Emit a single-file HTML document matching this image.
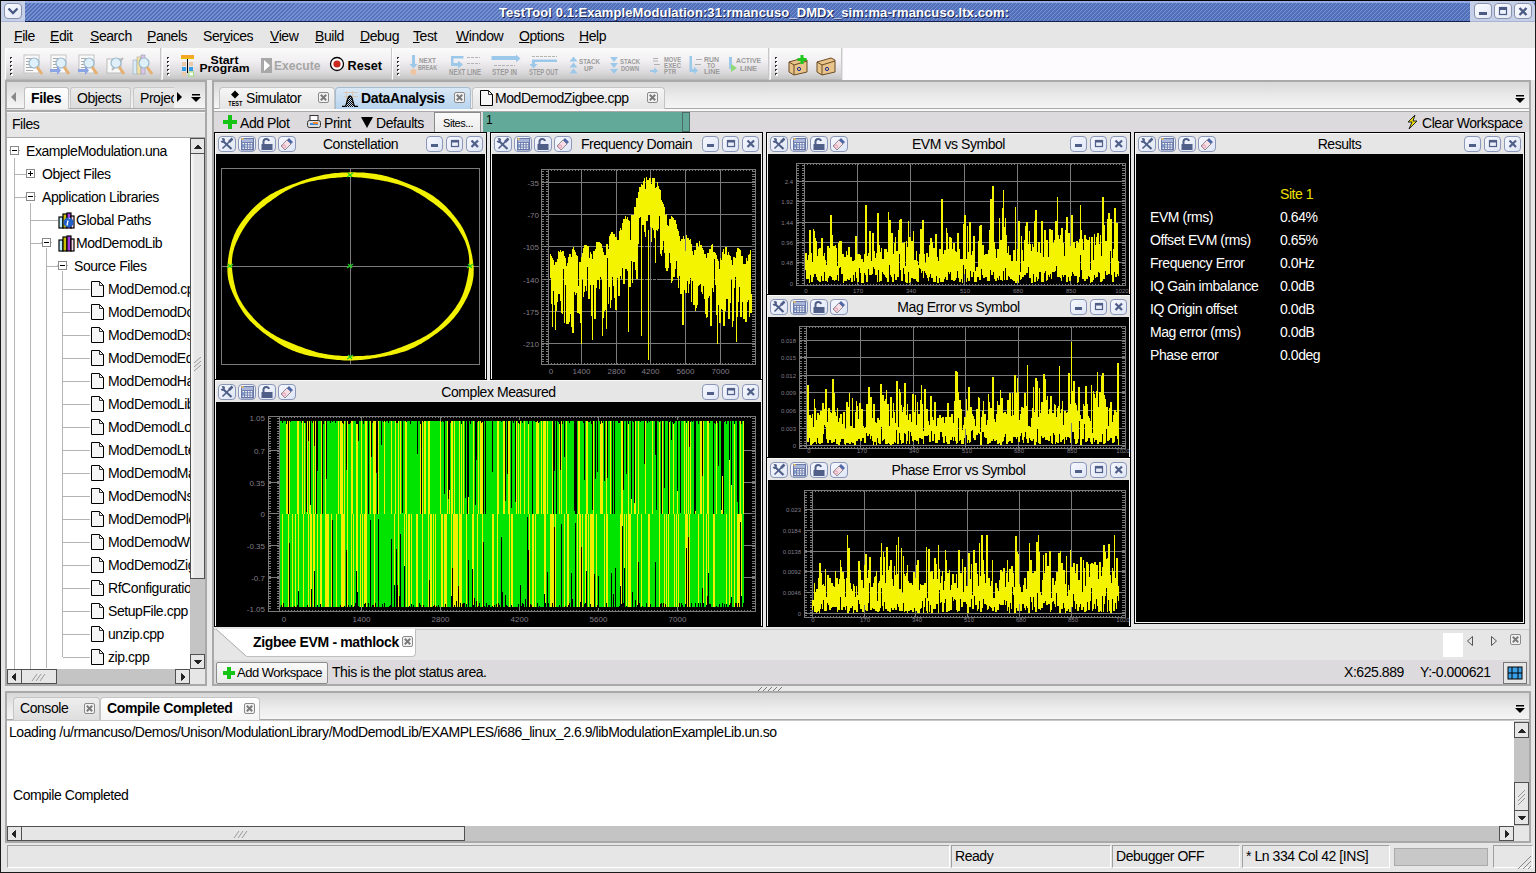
<!DOCTYPE html><html><head><meta charset="utf-8"><style>
*{margin:0;padding:0;box-sizing:border-box}
html,body{width:1536px;height:873px;overflow:hidden;background:#e6e6e6;font-family:"Liberation Sans", sans-serif;color:#000}
.a{position:absolute}
.t{position:absolute;white-space:nowrap;line-height:16px;font-size:14px;letter-spacing:-0.44px}
u{text-decoration:underline}
</style></head><body>
<div style="position:absolute;left:0px;top:0px;width:1536px;height:873px;border:1px solid #1a1a1a;border-top:1px solid #000;"></div>
<div style="position:absolute;left:1px;top:1px;width:1534px;height:21px;background:repeating-linear-gradient(135deg,#5673be 0px,#5673be 1.3px,#4c69b4 1.3px,#4c69b4 1.9px,#7690d2 1.9px,#7690d2 2.83px);border-top:2px solid #93abe3;border-bottom:1px solid #14214d;"></div>
<div style="position:absolute;left:1px;top:1px;width:24px;height:21px;background:#c6cfe8;border-bottom:1px solid #a9b4d4;"></div>
<div style="position:absolute;left:4px;top:3px;width:18px;height:16px;background:linear-gradient(135deg,#fafbff,#e4e9f8);border:1px solid #8991ab;border-radius:4px;"><svg width="16" height="14" style="position:absolute;left:0;top:0"><path d="M3.5 4.5 L8 9 L12.5 4.5" stroke="#4b5a84" stroke-width="2.4" fill="none"/></svg></div>
<div class="t" style="left:0px;top:5px;font-size:13px;width:1508px;text-align:center;color:#fff;font-weight:bold;font-size:13px;letter-spacing:0.1px;text-shadow:1px 1px 0 #1a2550;">TestTool 0.1:ExampleModulation:31:rmancuso_DMDx_sim:ma-rmancuso.ltx.com:</div>
<div style="position:absolute;left:1470px;top:1px;width:65px;height:21px;background:#c6cfe8;border-bottom:1px solid #a9b4d4;border-radius:0 6px 0 0;"></div>
<div style="position:absolute;left:1474px;top:3px;width:18px;height:16px;background:linear-gradient(135deg,#fafbff,#e4e9f8);border:1px solid #8991ab;border-radius:4px;"><svg width="16" height="14" style="position:absolute;left:0;top:0"><rect x="4" y="8" width="8" height="3" fill="#4b5a84"/></svg></div>
<div style="position:absolute;left:1494px;top:3px;width:18px;height:16px;background:linear-gradient(135deg,#fafbff,#e4e9f8);border:1px solid #8991ab;border-radius:4px;"><svg width="16" height="14" style="position:absolute;left:0;top:0"><rect x="4.5" y="3.5" width="7" height="7" fill="none" stroke="#4b5a84" stroke-width="1.2"/><rect x="4" y="3" width="8" height="3" fill="#4b5a84"/></svg></div>
<div style="position:absolute;left:1514px;top:3px;width:18px;height:16px;background:linear-gradient(135deg,#fafbff,#e4e9f8);border:1px solid #8991ab;border-radius:4px;"><svg width="16" height="14" style="position:absolute;left:0;top:0"><path d="M4.5 4 L11.5 11 M11.5 4 L4.5 11" stroke="#4b5a84" stroke-width="2.4"/></svg></div>
<div class="t" style="left:14px;top:28px;font-size:14px;letter-spacing:-0.44px;"><u>F</u>ile</div>
<div class="t" style="left:50px;top:28px;font-size:14px;letter-spacing:-0.44px;"><u>E</u>dit</div>
<div class="t" style="left:90px;top:28px;font-size:14px;letter-spacing:-0.44px;"><u>S</u>earch</div>
<div class="t" style="left:147px;top:28px;font-size:14px;letter-spacing:-0.44px;"><u>P</u>anels</div>
<div class="t" style="left:203px;top:28px;font-size:14px;letter-spacing:-0.44px;">Ser<u>v</u>ices</div>
<div class="t" style="left:270px;top:28px;font-size:14px;letter-spacing:-0.44px;"><u>V</u>iew</div>
<div class="t" style="left:315px;top:28px;font-size:14px;letter-spacing:-0.44px;"><u>B</u>uild</div>
<div class="t" style="left:360px;top:28px;font-size:14px;letter-spacing:-0.44px;"><u>D</u>ebug</div>
<div class="t" style="left:413px;top:28px;font-size:14px;letter-spacing:-0.44px;"><u>T</u>est</div>
<div class="t" style="left:456px;top:28px;font-size:14px;letter-spacing:-0.44px;"><u>W</u>indow</div>
<div class="t" style="left:519px;top:28px;font-size:14px;letter-spacing:-0.44px;"><u>O</u>ptions</div>
<div class="t" style="left:579px;top:28px;font-size:14px;letter-spacing:-0.44px;"><u>H</u>elp</div>
<div style="position:absolute;left:5px;top:48px;width:156px;height:32px;background:linear-gradient(#fbfbfb 0%,#f2f0f2 40%,#dad8da 80%,#c6c6c6 100%);border-left:1px solid #fff;border-right:1px solid #c8c8c8;border-bottom:1px solid #b8b8b8;"></div>
<div style="position:absolute;left:10px;top:57px;width:2px;height:2px;background:#333;"></div><div style="position:absolute;left:11px;top:58px;width:2px;height:2px;background:#fff;"></div><div style="position:absolute;left:10px;top:61px;width:2px;height:2px;background:#333;"></div><div style="position:absolute;left:11px;top:62px;width:2px;height:2px;background:#fff;"></div><div style="position:absolute;left:10px;top:65px;width:2px;height:2px;background:#333;"></div><div style="position:absolute;left:11px;top:66px;width:2px;height:2px;background:#fff;"></div><div style="position:absolute;left:10px;top:69px;width:2px;height:2px;background:#333;"></div><div style="position:absolute;left:11px;top:70px;width:2px;height:2px;background:#fff;"></div><div style="position:absolute;left:10px;top:73px;width:2px;height:2px;background:#333;"></div><div style="position:absolute;left:11px;top:74px;width:2px;height:2px;background:#fff;"></div>
<div style="position:absolute;left:162px;top:48px;width:230px;height:32px;background:linear-gradient(#fbfbfb 0%,#f2f0f2 40%,#dad8da 80%,#c6c6c6 100%);border-left:1px solid #fff;border-right:1px solid #c8c8c8;border-bottom:1px solid #b8b8b8;"></div>
<div style="position:absolute;left:167px;top:57px;width:2px;height:2px;background:#333;"></div><div style="position:absolute;left:168px;top:58px;width:2px;height:2px;background:#fff;"></div><div style="position:absolute;left:167px;top:61px;width:2px;height:2px;background:#333;"></div><div style="position:absolute;left:168px;top:62px;width:2px;height:2px;background:#fff;"></div><div style="position:absolute;left:167px;top:65px;width:2px;height:2px;background:#333;"></div><div style="position:absolute;left:168px;top:66px;width:2px;height:2px;background:#fff;"></div><div style="position:absolute;left:167px;top:69px;width:2px;height:2px;background:#333;"></div><div style="position:absolute;left:168px;top:70px;width:2px;height:2px;background:#fff;"></div><div style="position:absolute;left:167px;top:73px;width:2px;height:2px;background:#333;"></div><div style="position:absolute;left:168px;top:74px;width:2px;height:2px;background:#fff;"></div>
<div style="position:absolute;left:392px;top:48px;width:377px;height:32px;background:linear-gradient(#fbfbfb 0%,#f2f0f2 40%,#dad8da 80%,#c6c6c6 100%);border-left:1px solid #fff;border-right:1px solid #c8c8c8;border-bottom:1px solid #b8b8b8;"></div>
<div style="position:absolute;left:397px;top:57px;width:2px;height:2px;background:#333;"></div><div style="position:absolute;left:398px;top:58px;width:2px;height:2px;background:#fff;"></div><div style="position:absolute;left:397px;top:61px;width:2px;height:2px;background:#333;"></div><div style="position:absolute;left:398px;top:62px;width:2px;height:2px;background:#fff;"></div><div style="position:absolute;left:397px;top:65px;width:2px;height:2px;background:#333;"></div><div style="position:absolute;left:398px;top:66px;width:2px;height:2px;background:#fff;"></div><div style="position:absolute;left:397px;top:69px;width:2px;height:2px;background:#333;"></div><div style="position:absolute;left:398px;top:70px;width:2px;height:2px;background:#fff;"></div><div style="position:absolute;left:397px;top:73px;width:2px;height:2px;background:#333;"></div><div style="position:absolute;left:398px;top:74px;width:2px;height:2px;background:#fff;"></div>
<div style="position:absolute;left:770px;top:48px;width:72px;height:32px;background:linear-gradient(#fbfbfb 0%,#f2f0f2 40%,#dad8da 80%,#c6c6c6 100%);border-left:1px solid #fff;border-right:1px solid #c8c8c8;border-bottom:1px solid #b8b8b8;"></div>
<div style="position:absolute;left:775px;top:57px;width:2px;height:2px;background:#333;"></div><div style="position:absolute;left:776px;top:58px;width:2px;height:2px;background:#fff;"></div><div style="position:absolute;left:775px;top:61px;width:2px;height:2px;background:#333;"></div><div style="position:absolute;left:776px;top:62px;width:2px;height:2px;background:#fff;"></div><div style="position:absolute;left:775px;top:65px;width:2px;height:2px;background:#333;"></div><div style="position:absolute;left:776px;top:66px;width:2px;height:2px;background:#fff;"></div><div style="position:absolute;left:775px;top:69px;width:2px;height:2px;background:#333;"></div><div style="position:absolute;left:776px;top:70px;width:2px;height:2px;background:#fff;"></div><div style="position:absolute;left:775px;top:73px;width:2px;height:2px;background:#333;"></div><div style="position:absolute;left:776px;top:74px;width:2px;height:2px;background:#fff;"></div>
<div style="position:absolute;left:843px;top:48px;width:692px;height:32px;background:#fdfbfd;"></div>
<svg class="a" style="left:22px;top:54px" width="22" height="22"><rect x="2" y="1" width="15" height="18" fill="#fafafa" stroke="#c4c4c4"/><rect x="4" y="4" width="7" height="1" fill="#aaa"/><rect x="4" y="7" width="7" height="1" fill="#aaa"/><rect x="4" y="10" width="7" height="1" fill="#aaa"/><rect x="4" y="13" width="7" height="1" fill="#aaa"/><rect x="4" y="16" width="7" height="1" fill="#aaa"/><circle cx="12" cy="9" r="5" fill="#dff0fa" stroke="#9ab8cc" stroke-width="1.2"/><path d="M15 13 L20 20" stroke="#e5b070" stroke-width="3"/></svg>
<svg class="a" style="left:49px;top:54px" width="22" height="22"><rect x="2" y="1" width="15" height="18" fill="#fafafa" stroke="#c4c4c4"/><rect x="4" y="4" width="7" height="1" fill="#aaa"/><rect x="4" y="7" width="7" height="1" fill="#aaa"/><rect x="4" y="10" width="7" height="1" fill="#aaa"/><rect x="4" y="13" width="7" height="1" fill="#aaa"/><rect x="4" y="16" width="7" height="1" fill="#aaa"/><circle cx="12" cy="9" r="5" fill="#dff0fa" stroke="#9ab8cc" stroke-width="1.2"/><path d="M15 13 L20 20" stroke="#e5b070" stroke-width="3"/><path d="M1 15 H8 V12 L12 16.5 L8 21 V18 H1 Z" fill="#8aa4e4"/></svg>
<svg class="a" style="left:77px;top:54px" width="22" height="22"><rect x="2" y="1" width="15" height="18" fill="#fafafa" stroke="#c4c4c4"/><rect x="4" y="4" width="7" height="1" fill="#aaa"/><rect x="4" y="7" width="7" height="1" fill="#aaa"/><rect x="4" y="10" width="7" height="1" fill="#aaa"/><rect x="4" y="13" width="7" height="1" fill="#aaa"/><rect x="4" y="16" width="7" height="1" fill="#aaa"/><circle cx="12" cy="9" r="5" fill="#dff0fa" stroke="#9ab8cc" stroke-width="1.2"/><path d="M15 13 L20 20" stroke="#e5b070" stroke-width="3"/><path d="M1 15 H8 V12 L12 16.5 L8 21 V18 H1 Z" fill="#8aa4e4"/></svg>
<svg class="a" style="left:104px;top:54px" width="22" height="22"><rect x="3" y="5" width="14" height="14" fill="#f8f8f8" stroke="#bbb"/><path d="M8 16 L19 4" stroke="#bbb" stroke-width="2"/><circle cx="12" cy="9" r="5" fill="#dff0fa" stroke="#9ab8cc" stroke-width="1.2"/><path d="M15 13 L20 20" stroke="#e5b070" stroke-width="3"/></svg>
<svg class="a" style="left:132px;top:54px" width="22" height="22"><rect x="1" y="6" width="4" height="14" fill="#d8eaf6" stroke="#9ab" stroke-width=".6"/><rect x="5" y="3" width="4" height="17" fill="#f3e2a6" stroke="#aa9" stroke-width=".6"/><rect x="9" y="1" width="4" height="19" fill="#d9c6ea" stroke="#99a" stroke-width=".6"/><circle cx="12" cy="9" r="5" fill="#dff0fa" stroke="#9ab8cc" stroke-width="1.2"/><path d="M15 13 L20 20" stroke="#e5b070" stroke-width="3"/></svg>
<svg class="a" style="left:181px;top:55px" width="16" height="22"><rect x="0" y="0" width="13" height="3" fill="#f5a623"/><rect x="0" y="3" width="13" height="1" fill="#e2c200"/><rect x="6" y="4" width="1" height="14" fill="#000"/><rect x="1" y="7" width="4" height="4" fill="#e9c9a8"/><rect x="8" y="7" width="4" height="4" fill="#e9c9a8"/><rect x="1" y="12" width="4" height="4" fill="#3aa0e6"/><rect x="8" y="12" width="4" height="4" fill="#3aa0e6"/><rect x="1" y="17" width="4" height="4" fill="#e9c9a8"/><rect x="8" y="17" width="4.5" height="4" fill="#fff" stroke="#9be07a"/></svg>
<svg class="a" style="left:0;top:0;overflow:visible" width="1" height="1"><text x="210.5" y="63.5" font-size="11.5" font-weight="bold" fill="#000" font-family="Liberation Sans" textLength="28.0" lengthAdjust="spacingAndGlyphs">Start</text></svg>
<svg class="a" style="left:0;top:0;overflow:visible" width="1" height="1"><text x="199.5" y="71.5" font-size="11.5" font-weight="bold" fill="#000" font-family="Liberation Sans" textLength="50.0" lengthAdjust="spacingAndGlyphs">Program</text></svg>
<svg class="a" style="left:261px;top:58px" width="11" height="15"><rect width="11" height="15" fill="#a8a8a8"/><path d="M3 2 L9 7.5 L3 13 Z" fill="#fff"/></svg>
<svg class="a" style="left:0;top:0;overflow:visible" width="1" height="1"><text x="274" y="70" font-size="13" font-weight="bold" fill="#a6a6a6" font-family="Liberation Sans" textLength="46.5" lengthAdjust="spacingAndGlyphs">Execute</text></svg>
<svg class="a" style="left:329px;top:56px" width="16" height="16"><circle cx="8" cy="8" r="6.5" fill="#fff" stroke="#000" stroke-width="1.3"/><circle cx="8" cy="8" r="3.6" fill="#c8281e"/></svg>
<svg class="a" style="left:0;top:0;overflow:visible" width="1" height="1"><text x="347.5" y="70" font-size="13" font-weight="bold" fill="#000" font-family="Liberation Sans" textLength="34.5" lengthAdjust="spacingAndGlyphs">Reset</text></svg>
<svg class="a" style="left:400px;top:48px" width="370" height="32" viewBox="400 48 370 32"><rect x="412" y="55" width="3" height="10" fill="#9cc8ea"/><path d="M409.5 64 H417.5 L413.5 68.5 Z" fill="#9cc8ea"/><circle cx="413.5" cy="72" r="3" fill="#eec4a4"/><text x="419" y="63" font-size="6.8" font-weight="bold" fill="#9a9a9a" font-family="Liberation Sans" textLength="17" lengthAdjust="spacingAndGlyphs">NEXT</text><text x="418" y="70" font-size="6.8" font-weight="bold" fill="#9a9a9a" font-family="Liberation Sans" textLength="19" lengthAdjust="spacingAndGlyphs">BREAK</text><path d="M451 56 H463.5 V58.5 H453.5 V63 H458 V60.5 L463 64.5 L458 68.5 V66 H451 Z" fill="#9cc8ea"/><path d="M467 57.5 H480 M467 63.5 H480" stroke="#b4b4b4" stroke-width="1" stroke-dasharray="3 1"/><text x="449" y="75" font-size="8.2" font-weight="bold" fill="#9a9a9a" font-family="Liberation Sans" textLength="32" lengthAdjust="spacingAndGlyphs">NEXT LINE</text><path d="M491.5 56 H516 V54.5 L520.5 58.5 L516 62.5 V60 H491.5 Z" fill="#9cc8ea"/><path d="M494 65.5 H515" stroke="#b4b4b4" stroke-width="1" stroke-dasharray="3 1"/><text x="492" y="75" font-size="8.2" font-weight="bold" fill="#9a9a9a" font-family="Liberation Sans" textLength="25" lengthAdjust="spacingAndGlyphs">STEP IN</text><path d="M532 56.5 H557" stroke="#b4b4b4" stroke-width="1" stroke-dasharray="3 1"/><path d="M557 59.5 V62 H535 V64 H537.5 L533.5 68.5 L529.5 64 H532 V59.5 Z" fill="#9cc8ea"/><text x="529" y="75" font-size="8.2" font-weight="bold" fill="#9a9a9a" font-family="Liberation Sans" textLength="29" lengthAdjust="spacingAndGlyphs">STEP OUT</text><path d="M569.5 61.5 L573.5 56.5 L577.5 61.5 Z" fill="#9cc8ea"/><path d="M569.5 67.5 L573.5 62.5 L577.5 67.5 Z" fill="#9cc8ea"/><path d="M569.5 73.5 L573.5 68.5 L577.5 73.5 Z" fill="#9cc8ea"/><text x="579" y="64" font-size="6.8" font-weight="bold" fill="#9a9a9a" font-family="Liberation Sans" textLength="21" lengthAdjust="spacingAndGlyphs">STACK</text><text x="584" y="71" font-size="6.8" font-weight="bold" fill="#9a9a9a" font-family="Liberation Sans" textLength="9" lengthAdjust="spacingAndGlyphs">UP</text><path d="M610 57 L618 57 L614 62 Z" fill="#9cc8ea"/><path d="M610 63 L618 63 L614 68 Z" fill="#9cc8ea"/><path d="M610 69 L618 69 L614 74 Z" fill="#9cc8ea"/><text x="620" y="64" font-size="6.8" font-weight="bold" fill="#9a9a9a" font-family="Liberation Sans" textLength="20" lengthAdjust="spacingAndGlyphs">STACK</text><text x="621" y="71" font-size="6.8" font-weight="bold" fill="#9a9a9a" font-family="Liberation Sans" textLength="18" lengthAdjust="spacingAndGlyphs">DOWN</text><path d="M653 58.5 H658 M653 61 H658 M654 64.5 H660" stroke="#b0b0b0" stroke-width="1"/><path d="M650 70 H654 V67.5 L658 71 L654 74 V72 H650 Z" fill="#9cc8ea"/><text x="664" y="62" font-size="6.8" font-weight="bold" fill="#9a9a9a" font-family="Liberation Sans" textLength="17" lengthAdjust="spacingAndGlyphs">MOVE</text><text x="664" y="68" font-size="6.8" font-weight="bold" fill="#9a9a9a" font-family="Liberation Sans" textLength="17" lengthAdjust="spacingAndGlyphs">EXEC</text><text x="664" y="74" font-size="6.8" font-weight="bold" fill="#9a9a9a" font-family="Liberation Sans" textLength="12" lengthAdjust="spacingAndGlyphs">PTR</text><path d="M689.5 56 H692 V69 H694 V66.5 L698 70.5 L694 74.5 V72 H689.5 Z" fill="#9cc8ea"/><path d="M696 59.5 H702 M695 64.5 H701" stroke="#b0b0b0" stroke-width="1"/><text x="704" y="62" font-size="6.8" font-weight="bold" fill="#9a9a9a" font-family="Liberation Sans" textLength="15" lengthAdjust="spacingAndGlyphs">RUN</text><text x="707" y="68" font-size="6.8" font-weight="bold" fill="#9a9a9a" font-family="Liberation Sans" textLength="8" lengthAdjust="spacingAndGlyphs">TO</text><text x="704" y="74" font-size="6.8" font-weight="bold" fill="#9a9a9a" font-family="Liberation Sans" textLength="16" lengthAdjust="spacingAndGlyphs">LINE</text><rect x="729" y="57" width="3" height="12" fill="#9cc8ea"/><path d="M731 64 L737 68 L731 72 Z" fill="#8ed87a"/><text x="736" y="63" font-size="6.8" font-weight="bold" fill="#9a9a9a" font-family="Liberation Sans" textLength="25" lengthAdjust="spacingAndGlyphs">ACTIVE</text><text x="740" y="71" font-size="6.8" font-weight="bold" fill="#9a9a9a" font-family="Liberation Sans" textLength="17" lengthAdjust="spacingAndGlyphs">LINE</text></svg>
<svg class="a" style="left:787px;top:54px" width="22" height="22"><path d="M2 8 L16 4 L20 6 L20 18 L7 21 L2 18 Z" fill="#e8c48a" stroke="#6b4a22" stroke-width="1"/><path d="M2 8 L7 11 L20 7" fill="none" stroke="#6b4a22" stroke-width="1"/><path d="M7 11 V21" stroke="#6b4a22"/><circle cx="12" cy="15" r="1.6" fill="none" stroke="#1b2c9a" stroke-width="1"/><path d="M15 1 V10 M10.5 5.5 H19.5" stroke="#1ec81e" stroke-width="3"/></svg>
<svg class="a" style="left:815px;top:54px" width="22" height="22"><path d="M2 8 L16 4 L20 6 L20 18 L7 21 L2 18 Z" fill="#e8c48a" stroke="#6b4a22" stroke-width="1"/><path d="M2 8 L7 11 L20 7" fill="none" stroke="#6b4a22" stroke-width="1"/><path d="M7 11 V21" stroke="#6b4a22"/><circle cx="12" cy="15" r="1.6" fill="none" stroke="#1b2c9a" stroke-width="1"/></svg>
<div style="position:absolute;left:5px;top:80px;width:202px;height:606px;background:#e6e6e6;border:2px solid #a9a9a9;"></div>
<div style="position:absolute;left:7px;top:82px;width:198px;height:27px;background:linear-gradient(#d8d8d8,#ececec 60%,#f6f4f6);border-bottom:1px solid #a9a9a9;"></div>
<svg class="a" style="left:10px;top:92px" width="8" height="10"><path d="M6 0 L1 5 L6 10 Z" fill="#888"/></svg>
<div style="position:absolute;left:24px;top:87px;width:45px;height:22px;background:linear-gradient(#fff,#f2f2f2);border:1px solid #c0c0c0;border-bottom:none;border-radius:3px 3px 0 0;"></div>
<div class="t" style="left:31px;top:90px;font-size:14px;letter-spacing:-0.35px;font-weight:bold;">Files</div>
<div style="position:absolute;left:70px;top:87px;width:61px;height:21px;background:linear-gradient(#eaeaea,#dcdcdc);border:1px solid #c8c8c8;border-bottom:none;border-radius:3px 3px 0 0;"></div>
<div class="t" style="left:77px;top:90px;font-size:14px;letter-spacing:-0.44px;">Objects</div>
<div style="position:absolute;left:133px;top:87px;width:41px;height:21px;background:linear-gradient(#eaeaea,#dcdcdc);border:1px solid #c8c8c8;border-bottom:none;border-right:none;border-radius:3px 0 0 0;overflow:hidden;"><div class="t" style="left:6px;top:2px;">Projects</div></div>
<svg class="a" style="left:176px;top:92px" width="8" height="10"><path d="M1 0 L6 5 L1 10 Z" fill="#000"/></svg>
<svg class="a" style="left:191px;top:94px" width="10" height="8"><rect x="1" y="0" width="8" height="1.5" fill="#000"/><path d="M0 3 H10 L5 8 Z" fill="#000"/></svg>
<div style="position:absolute;left:7px;top:110px;width:198px;height:28px;background:#e6e6e6;border-top:2px solid #a9a9a9;border-bottom:1px solid #a9a9a9;box-shadow:inset 0 1px 0 #f8f8f8;"></div>
<div class="t" style="left:12px;top:116px;font-size:14px;letter-spacing:-0.44px;">Files</div>
<div style="position:absolute;left:7px;top:138px;width:183px;height:531px;background:#fff;"></div>
<div style="position:absolute;left:190px;top:138px;width:15px;height:531px;background:#c4c4c4;"></div>
<div style="position:absolute;left:190px;top:138px;width:15px;height:16px;background:#e6e6e6;border:1px solid #505050;"><svg class="a" style="left:3px;top:4px" width="8" height="6"><path d="M0.5 5.5 L4 2 L7.5 5.5 Z" fill="#222" stroke="#222" stroke-width="1"/></svg></div>
<div style="position:absolute;left:190px;top:154px;width:15px;height:425px;background:linear-gradient(90deg,#fafafa,#e6e6e6 30%);border:1px solid #505050;border-top:none;"></div>
<div style="position:absolute;left:190px;top:654px;width:15px;height:15px;background:#e6e6e6;border:1px solid #505050;"><svg class="a" style="left:3px;top:4px" width="8" height="6"><path d="M0.5 1.5 L4 5 L7.5 1.5 Z" fill="#222" stroke="#222" stroke-width="1"/></svg></div>
<svg class="a" style="left:193px;top:357px" width="10" height="18"><path d="M1 6 L8 0 M1 10 L8 4 M1 14 L8 8" stroke="#9a9a9a" stroke-width="1"/></svg>
<svg class="a" style="left:207px;top:371px" width="6" height="20"><path d="M0.5 6 L5.5 1 M0.5 10 L5.5 5 M0.5 14 L5.5 9 M0.5 18 L5.5 13" stroke="#a0a0a0" stroke-width="1"/></svg>
<div style="position:absolute;left:7px;top:669px;width:183px;height:15px;background:#c4c4c4;"></div>
<div style="position:absolute;left:7px;top:669px;width:15px;height:15px;background:#e6e6e6;border:1px solid #505050;"><svg class="a" style="left:3px;top:3px" width="6" height="8"><path d="M4.5 0.5 L1 4 L4.5 7.5 Z" fill="#222" stroke="#222" stroke-width="1"/></svg></div>
<div style="position:absolute;left:22px;top:669px;width:35px;height:15px;background:#e6e6e6;border:1px solid #505050;border-left:none;"><svg class="a" style="left:8px;top:2px" width="18" height="10"><path d="M2 9 L7 2 M6 9 L11 2 M10 9 L15 2" stroke="#999"/></svg></div>
<div style="position:absolute;left:175px;top:669px;width:15px;height:15px;background:#e6e6e6;border:1px solid #505050;"><svg class="a" style="left:4px;top:3px" width="6" height="8"><path d="M1.5 0.5 L5 4 L1.5 7.5 Z" fill="#222" stroke="#222" stroke-width="1"/></svg></div>
<div style="position:absolute;left:190px;top:669px;width:15px;height:15px;background:#e6e6e6;"></div>
<div style="position:absolute;left:14px;top:158px;width:1px;height:511px;background:#b4b4b4;"></div>
<div style="position:absolute;left:30px;top:203px;width:1px;height:466px;background:#b4b4b4;"></div>
<div style="position:absolute;left:46px;top:248px;width:1px;height:420px;background:#b4b4b4;"></div>
<div style="position:absolute;left:62px;top:271px;width:1px;height:386px;background:#b4b4b4;"></div>
<div style="position:absolute;left:9px;top:150px;width:11px;height:1px;background:#b4b4b4;"></div><div style="position:absolute;left:10px;top:146px;width:9px;height:9px;background:#fff;border:1px solid #8a8a8a;"><div class="a" style="left:1px;top:3px;width:5px;height:1px;background:#000"></div></div>
<div class="t" style="left:26px;top:143px;font-size:14px;letter-spacing:-0.44px;">ExampleModulation.una</div>
<div style="position:absolute;left:15px;top:174px;width:11px;height:1px;background:#b4b4b4;"></div>
<div style="position:absolute;left:26px;top:169px;width:9px;height:9px;background:#fff;border:1px solid #8a8a8a;"><div class="a" style="left:1px;top:3px;width:5px;height:1px;background:#000"></div><div class="a" style="left:3px;top:1px;width:1px;height:5px;background:#000"></div></div>
<div class="t" style="left:42px;top:166px;font-size:14px;letter-spacing:-0.44px;">Object Files</div>
<div style="position:absolute;left:15px;top:197px;width:11px;height:1px;background:#b4b4b4;"></div>
<div style="position:absolute;left:25px;top:196px;width:11px;height:1px;background:#b4b4b4;"></div><div style="position:absolute;left:26px;top:192px;width:9px;height:9px;background:#fff;border:1px solid #8a8a8a;"><div class="a" style="left:1px;top:3px;width:5px;height:1px;background:#000"></div></div>
<div class="t" style="left:42px;top:189px;font-size:14px;letter-spacing:-0.44px;">Application Libraries</div>
<div style="position:absolute;left:31px;top:220px;width:27px;height:1px;background:#b4b4b4;"></div>
<svg class="a" style="left:58px;top:212px" width="17" height="17"><rect x="1" y="5" width="4" height="11" fill="#b8ecfa" stroke="#000" stroke-width="1.2"/><rect x="5" y="2" width="4" height="14" fill="#c8c000" stroke="#000" stroke-width="1.2"/><rect x="9" y="1" width="4" height="15" fill="#a838d8" stroke="#000" stroke-width="1.2"/><rect x="13" y="4" width="3" height="12" fill="#fad8e6" stroke="#000" stroke-width="1.2"/><circle cx="10.5" cy="10.5" r="5" fill="#1f60c8"/><path d="M10 8.5 L9 13.5 M11 6.5 L11.5 5.8" stroke="#fff" stroke-width="1.3"/></svg>
<div class="t" style="left:76px;top:212px;font-size:14px;letter-spacing:-0.44px;">Global Paths</div>
<div style="position:absolute;left:31px;top:243px;width:11px;height:1px;background:#b4b4b4;"></div>
<div style="position:absolute;left:41px;top:242px;width:11px;height:1px;background:#b4b4b4;"></div><div style="position:absolute;left:42px;top:238px;width:9px;height:9px;background:#fff;border:1px solid #8a8a8a;"><div class="a" style="left:1px;top:3px;width:5px;height:1px;background:#000"></div></div>
<svg class="a" style="left:58px;top:235px" width="17" height="17"><rect x="1" y="5" width="4" height="11" fill="#b8ecfa" stroke="#000" stroke-width="1.2"/><rect x="5" y="2" width="4" height="14" fill="#c8c000" stroke="#000" stroke-width="1.2"/><rect x="9" y="1" width="4" height="15" fill="#a838d8" stroke="#000" stroke-width="1.2"/><rect x="13" y="4" width="3" height="12" fill="#fad8e6" stroke="#000" stroke-width="1.2"/></svg>
<div class="t" style="left:76px;top:235px;font-size:14px;letter-spacing:-0.44px;">ModDemodLib</div>
<div style="position:absolute;left:47px;top:266px;width:11px;height:1px;background:#b4b4b4;"></div>
<div style="position:absolute;left:57px;top:265px;width:11px;height:1px;background:#b4b4b4;"></div><div style="position:absolute;left:58px;top:261px;width:9px;height:9px;background:#fff;border:1px solid #8a8a8a;"><div class="a" style="left:1px;top:3px;width:5px;height:1px;background:#000"></div></div>
<div class="t" style="left:74px;top:258px;font-size:14px;letter-spacing:-0.44px;">Source Files</div>
<div class="a" style="left:8px;top:138px;width:182px;height:530px;overflow:hidden">
<div style="position:absolute;left:55px;top:151px;width:27px;height:1px;background:#b4b4b4;"></div>
<svg class="a" style="left:83px;top:143px" width="13" height="16"><path d="M0.5 0.5 H8.5 L12.5 4.5 V15.5 H0.5 Z" fill="#f6f6f6" stroke="#000"/><path d="M8.5 0.5 V4.5 H12.5" fill="none" stroke="#000" stroke-width=".8"/></svg>
<div class="t" style="left:100px;top:143px;font-size:14px;letter-spacing:-0.44px;">ModDemod.cpp</div>
<div style="position:absolute;left:55px;top:174px;width:27px;height:1px;background:#b4b4b4;"></div>
<svg class="a" style="left:83px;top:166px" width="13" height="16"><path d="M0.5 0.5 H8.5 L12.5 4.5 V15.5 H0.5 Z" fill="#f6f6f6" stroke="#000"/><path d="M8.5 0.5 V4.5 H12.5" fill="none" stroke="#000" stroke-width=".8"/></svg>
<div class="t" style="left:100px;top:166px;font-size:14px;letter-spacing:-0.44px;">ModDemodDcOffset.cpp</div>
<div style="position:absolute;left:55px;top:197px;width:27px;height:1px;background:#b4b4b4;"></div>
<svg class="a" style="left:83px;top:189px" width="13" height="16"><path d="M0.5 0.5 H8.5 L12.5 4.5 V15.5 H0.5 Z" fill="#f6f6f6" stroke="#000"/><path d="M8.5 0.5 V4.5 H12.5" fill="none" stroke="#000" stroke-width=".8"/></svg>
<div class="t" style="left:100px;top:189px;font-size:14px;letter-spacing:-0.44px;">ModDemodDsss.cpp</div>
<div style="position:absolute;left:55px;top:220px;width:27px;height:1px;background:#b4b4b4;"></div>
<svg class="a" style="left:83px;top:212px" width="13" height="16"><path d="M0.5 0.5 H8.5 L12.5 4.5 V15.5 H0.5 Z" fill="#f6f6f6" stroke="#000"/><path d="M8.5 0.5 V4.5 H12.5" fill="none" stroke="#000" stroke-width=".8"/></svg>
<div class="t" style="left:100px;top:212px;font-size:14px;letter-spacing:-0.44px;">ModDemodEdge.cpp</div>
<div style="position:absolute;left:55px;top:243px;width:27px;height:1px;background:#b4b4b4;"></div>
<svg class="a" style="left:83px;top:235px" width="13" height="16"><path d="M0.5 0.5 H8.5 L12.5 4.5 V15.5 H0.5 Z" fill="#f6f6f6" stroke="#000"/><path d="M8.5 0.5 V4.5 H12.5" fill="none" stroke="#000" stroke-width=".8"/></svg>
<div class="t" style="left:100px;top:235px;font-size:14px;letter-spacing:-0.44px;">ModDemodHarmonics.cpp</div>
<div style="position:absolute;left:55px;top:266px;width:27px;height:1px;background:#b4b4b4;"></div>
<svg class="a" style="left:83px;top:258px" width="13" height="16"><path d="M0.5 0.5 H8.5 L12.5 4.5 V15.5 H0.5 Z" fill="#f6f6f6" stroke="#000"/><path d="M8.5 0.5 V4.5 H12.5" fill="none" stroke="#000" stroke-width=".8"/></svg>
<div class="t" style="left:100px;top:258px;font-size:14px;letter-spacing:-0.44px;">ModDemodLib.cpp</div>
<div style="position:absolute;left:55px;top:289px;width:27px;height:1px;background:#b4b4b4;"></div>
<svg class="a" style="left:83px;top:281px" width="13" height="16"><path d="M0.5 0.5 H8.5 L12.5 4.5 V15.5 H0.5 Z" fill="#f6f6f6" stroke="#000"/><path d="M8.5 0.5 V4.5 H12.5" fill="none" stroke="#000" stroke-width=".8"/></svg>
<div class="t" style="left:100px;top:281px;font-size:14px;letter-spacing:-0.44px;">ModDemodLoad.cpp</div>
<div style="position:absolute;left:55px;top:312px;width:27px;height:1px;background:#b4b4b4;"></div>
<svg class="a" style="left:83px;top:304px" width="13" height="16"><path d="M0.5 0.5 H8.5 L12.5 4.5 V15.5 H0.5 Z" fill="#f6f6f6" stroke="#000"/><path d="M8.5 0.5 V4.5 H12.5" fill="none" stroke="#000" stroke-width=".8"/></svg>
<div class="t" style="left:100px;top:304px;font-size:14px;letter-spacing:-0.44px;">ModDemodLte.cpp</div>
<div style="position:absolute;left:55px;top:335px;width:27px;height:1px;background:#b4b4b4;"></div>
<svg class="a" style="left:83px;top:327px" width="13" height="16"><path d="M0.5 0.5 H8.5 L12.5 4.5 V15.5 H0.5 Z" fill="#f6f6f6" stroke="#000"/><path d="M8.5 0.5 V4.5 H12.5" fill="none" stroke="#000" stroke-width=".8"/></svg>
<div class="t" style="left:100px;top:327px;font-size:14px;letter-spacing:-0.44px;">ModDemodMath.cpp</div>
<div style="position:absolute;left:55px;top:358px;width:27px;height:1px;background:#b4b4b4;"></div>
<svg class="a" style="left:83px;top:350px" width="13" height="16"><path d="M0.5 0.5 H8.5 L12.5 4.5 V15.5 H0.5 Z" fill="#f6f6f6" stroke="#000"/><path d="M8.5 0.5 V4.5 H12.5" fill="none" stroke="#000" stroke-width=".8"/></svg>
<div class="t" style="left:100px;top:350px;font-size:14px;letter-spacing:-0.44px;">ModDemodNsg.cpp</div>
<div style="position:absolute;left:55px;top:381px;width:27px;height:1px;background:#b4b4b4;"></div>
<svg class="a" style="left:83px;top:373px" width="13" height="16"><path d="M0.5 0.5 H8.5 L12.5 4.5 V15.5 H0.5 Z" fill="#f6f6f6" stroke="#000"/><path d="M8.5 0.5 V4.5 H12.5" fill="none" stroke="#000" stroke-width=".8"/></svg>
<div class="t" style="left:100px;top:373px;font-size:14px;letter-spacing:-0.44px;">ModDemodPlot.cpp</div>
<div style="position:absolute;left:55px;top:404px;width:27px;height:1px;background:#b4b4b4;"></div>
<svg class="a" style="left:83px;top:396px" width="13" height="16"><path d="M0.5 0.5 H8.5 L12.5 4.5 V15.5 H0.5 Z" fill="#f6f6f6" stroke="#000"/><path d="M8.5 0.5 V4.5 H12.5" fill="none" stroke="#000" stroke-width=".8"/></svg>
<div class="t" style="left:100px;top:396px;font-size:14px;letter-spacing:-0.44px;">ModDemodWcdma.cpp</div>
<div style="position:absolute;left:55px;top:427px;width:27px;height:1px;background:#b4b4b4;"></div>
<svg class="a" style="left:83px;top:419px" width="13" height="16"><path d="M0.5 0.5 H8.5 L12.5 4.5 V15.5 H0.5 Z" fill="#f6f6f6" stroke="#000"/><path d="M8.5 0.5 V4.5 H12.5" fill="none" stroke="#000" stroke-width=".8"/></svg>
<div class="t" style="left:100px;top:419px;font-size:14px;letter-spacing:-0.44px;">ModDemodZigbee.cpp</div>
<div style="position:absolute;left:55px;top:450px;width:27px;height:1px;background:#b4b4b4;"></div>
<svg class="a" style="left:83px;top:442px" width="13" height="16"><path d="M0.5 0.5 H8.5 L12.5 4.5 V15.5 H0.5 Z" fill="#f6f6f6" stroke="#000"/><path d="M8.5 0.5 V4.5 H12.5" fill="none" stroke="#000" stroke-width=".8"/></svg>
<div class="t" style="left:100px;top:442px;font-size:14px;letter-spacing:-0.44px;">RfConfiguration.cpp</div>
<div style="position:absolute;left:55px;top:473px;width:27px;height:1px;background:#b4b4b4;"></div>
<svg class="a" style="left:83px;top:465px" width="13" height="16"><path d="M0.5 0.5 H8.5 L12.5 4.5 V15.5 H0.5 Z" fill="#f6f6f6" stroke="#000"/><path d="M8.5 0.5 V4.5 H12.5" fill="none" stroke="#000" stroke-width=".8"/></svg>
<div class="t" style="left:100px;top:465px;font-size:14px;letter-spacing:-0.44px;">SetupFile.cpp</div>
<div style="position:absolute;left:55px;top:496px;width:27px;height:1px;background:#b4b4b4;"></div>
<svg class="a" style="left:83px;top:488px" width="13" height="16"><path d="M0.5 0.5 H8.5 L12.5 4.5 V15.5 H0.5 Z" fill="#f6f6f6" stroke="#000"/><path d="M8.5 0.5 V4.5 H12.5" fill="none" stroke="#000" stroke-width=".8"/></svg>
<div class="t" style="left:100px;top:488px;font-size:14px;letter-spacing:-0.44px;">unzip.cpp</div>
<div style="position:absolute;left:55px;top:519px;width:27px;height:1px;background:#b4b4b4;"></div>
<svg class="a" style="left:83px;top:511px" width="13" height="16"><path d="M0.5 0.5 H8.5 L12.5 4.5 V15.5 H0.5 Z" fill="#f6f6f6" stroke="#000"/><path d="M8.5 0.5 V4.5 H12.5" fill="none" stroke="#000" stroke-width=".8"/></svg>
<div class="t" style="left:100px;top:511px;font-size:14px;letter-spacing:-0.44px;">zip.cpp</div>
</div>
<div style="position:absolute;left:207px;top:80px;width:5px;height:606px;background:#e9e9e9;"></div>
<div style="position:absolute;left:212px;top:80px;width:1319px;height:606px;border:2px solid #a9a9a9;background:#e6e6e6;"></div>
<div style="position:absolute;left:214px;top:82px;width:1315px;height:27px;background:linear-gradient(#d8d8d8,#ececec 60%,#f6f4f6);border-bottom:1px solid #a9a9a9;box-shadow:0 1px 0 #fafafa,0 2px 0 #fafafa;"></div>
<div style="position:absolute;left:219px;top:87px;width:116px;height:22px;background:linear-gradient(#f6f6f6,#e4e4e4);border:1px solid #c4c4c4;border-bottom:none;border-radius:4px 4px 0 0;"></div>
<svg class="a" style="left:226px;top:88px" width="20" height="20"><path d="M9 2.5 L13 6.5 L9 10.5 L5 6.5 Z" fill="#000"/><text x="2.3" y="17.5" font-size="7" font-weight="bold" font-family="Liberation Sans" textLength="14" lengthAdjust="spacingAndGlyphs">TEST</text></svg>
<div class="t" style="left:246px;top:90px;font-size:14px;letter-spacing:-0.44px;">Simulator</div>
<div style="position:absolute;left:318px;top:92px;width:11px;height:11px;border:1px solid #8a8a8a;border-radius:2px;background:#f2f2f2;"><svg class="a" style="left:0px;top:0px" width="9" height="9"><path d="M1.8 1.8 L7.2 7.2 M7.2 1.8 L1.8 7.2" stroke="#7a7a7a" stroke-width="2"/></svg></div>
<div style="position:absolute;left:335px;top:87px;width:136px;height:22px;background:linear-gradient(#d9e8f6,#b8d4ee);border:1px solid #a8bcd0;border-bottom:none;border-radius:4px 4px 0 0;"></div>
<svg class="a" style="left:341px;top:89px" width="18" height="18"><defs><pattern id="chk" width="2" height="2" patternUnits="userSpaceOnUse"><rect width="1" height="1" fill="#000"/><rect x="1" y="1" width="1" height="1" fill="#000"/></pattern></defs><path d="M2.5 3.5 H17 M2.5 7.5 H17 M5.5 2 V15 M11.5 2 V15" stroke="#d8c8b8" stroke-width="1"/><path d="M1 17 H4 C6 17 6 7 9 7 C12 7 12 17 14 17 H17 V18 H1 Z" fill="url(#chk)"/><path d="M1 17.5 H4 C6 17 6 7 9 7 C12 7 12 17 14 17.5 H17" fill="none" stroke="#000" stroke-width="1.3"/></svg>
<div class="t" style="left:361px;top:90px;font-size:14px;letter-spacing:-0.35px;font-weight:bold;">DataAnalysis</div>
<div style="position:absolute;left:454px;top:92px;width:11px;height:11px;border:1px solid #8a8a8a;border-radius:2px;background:#f2f2f2;"><svg class="a" style="left:0px;top:0px" width="9" height="9"><path d="M1.8 1.8 L7.2 7.2 M7.2 1.8 L1.8 7.2" stroke="#7a7a7a" stroke-width="2"/></svg></div>
<div style="position:absolute;left:472px;top:87px;width:193px;height:22px;background:linear-gradient(#f6f6f6,#e4e4e4);border:1px solid #c4c4c4;border-bottom:none;border-radius:4px 4px 0 0;"></div>
<svg class="a" style="left:480px;top:90px" width="13" height="16"><path d="M0.5 0.5 H8.5 L12.5 4.5 V15.5 H0.5 Z" fill="#f6f6f6" stroke="#000"/><path d="M8.5 0.5 V4.5 H12.5" fill="none" stroke="#000" stroke-width=".8"/></svg>
<div class="t" style="left:495px;top:90px;font-size:14px;letter-spacing:-0.44px;">ModDemodZigbee.cpp</div>
<div style="position:absolute;left:647px;top:92px;width:11px;height:11px;border:1px solid #8a8a8a;border-radius:2px;background:#f2f2f2;"><svg class="a" style="left:0px;top:0px" width="9" height="9"><path d="M1.8 1.8 L7.2 7.2 M7.2 1.8 L1.8 7.2" stroke="#7a7a7a" stroke-width="2"/></svg></div>
<svg class="a" style="left:1515px;top:95px" width="10" height="8"><rect x="1" y="0" width="8" height="1.5" fill="#000"/><path d="M0 3 H10 L5 8 Z" fill="#000"/></svg>
<div style="position:absolute;left:214px;top:111px;width:1315px;height:21px;background:#dcdadc;border-top:1px solid #a9a9a9;"></div>
<svg class="a" style="left:223px;top:115px" width="14" height="14"><path d="M5 0 H9 V5 H14 V9 H9 V14 H5 V9 H0 V5 H5 Z" fill="#16c416"/></svg>
<div class="t" style="left:240px;top:115px;font-size:14px;letter-spacing:-0.44px;">Add Plot</div>
<svg class="a" style="left:307px;top:115px" width="15" height="14"><rect x="3" y="0.5" width="8" height="5" fill="#fff" stroke="#333"/><rect x="0.5" y="5.5" width="13" height="7" rx="2" fill="#ddd" stroke="#333"/><rect x="3" y="8" width="8" height="2" fill="#3a8ad8"/><rect x="6" y="7" width="5" height="2" fill="#e83"/></svg>
<div class="t" style="left:324px;top:115px;font-size:14px;letter-spacing:-0.44px;">Print</div>
<svg class="a" style="left:361px;top:117px" width="12" height="11"><path d="M0 0 H12 L6 11 Z" fill="#000"/></svg>
<div class="t" style="left:376px;top:115px;font-size:14px;letter-spacing:-0.44px;">Defaults</div>
<div style="position:absolute;left:434px;top:112px;width:47px;height:20px;background:linear-gradient(#fafafa,#ececec);border:1px solid #8a8a8a;border-bottom:none;"><div class="t" style="left:8px;top:2px;font-size:11px">Sites...</div></div>
<div style="position:absolute;left:483px;top:112px;width:207px;height:20px;background:#62a999;"><div class="t" style="left:3px;top:0px;font-size:12px">1</div></div>
<div style="position:absolute;left:682px;top:112px;width:8px;height:20px;background:#62a999;border:1px solid #4b6c64;"></div>
<svg class="a" style="left:1406px;top:115px" width="14" height="14"><path d="M9 0 L2 7 H6 L3 14 L11 6 H7 Z" fill="#f0e000" stroke="#222" stroke-width="1"/></svg>
<div class="t" style="left:1422px;top:115px;font-size:14px;letter-spacing:-0.44px;">Clear Workspace</div>
<div style="position:absolute;left:214px;top:132px;width:1315px;height:497px;background:#e6e6e6;"></div>
<div style="position:absolute;left:214px;top:132px;width:273px;height:248px;background:#000;"></div><div style="position:absolute;left:215px;top:133px;width:1px;height:246px;background:#f4f4f4;"></div><div style="position:absolute;left:485px;top:133px;width:1px;height:246px;background:#f4f4f4;"></div><div style="position:absolute;left:215px;top:133px;width:271px;height:21px;background:#e6e6e6;border-top:1px solid #fafafa;border-left:1px solid #fafafa;"></div><div style="position:absolute;left:218px;top:136px;width:18px;height:16px;background:linear-gradient(135deg,#f6f8fe,#e0e6f6);border:1px solid #8a97b8;border-radius:4px;"><svg class="a" style="left:-1px;top:-1px" width="18" height="16"><path d="M4.5 12.5 L13 4" stroke="#4f5f88" stroke-width="1.6"/><path d="M11 6 L14.5 2.5" stroke="#4f5f88" stroke-width="2.6"/><path d="M5 5 L13.5 13" stroke="#4f5f88" stroke-width="2.2"/><path d="M2.5 5 A3 3 0 0 0 6.5 6.5 L7 3 A3 3 0 0 0 3.5 2.5 L5 4.5 Z" fill="#4f5f88"/></svg></div><div style="position:absolute;left:238px;top:136px;width:18px;height:16px;background:linear-gradient(135deg,#f6f8fe,#e0e6f6);border:1px solid #8a97b8;border-radius:4px;"><svg class="a" style="left:-1px;top:-1px" width="18" height="16"><rect x="3.5" y="2.5" width="12" height="11.5" fill="#6f7fb0" stroke="#5a6a9a" stroke-width=".8"/><rect x="4" y="3" width="11" height="3" fill="#a8b4d8"/><rect x="3.5" y="2" width="2" height="2" fill="#e8c060"/><rect x="4.5" y="7.0" width="1.6" height="1.3" fill="#ffffff"/><rect x="7.2" y="7.0" width="1.6" height="1.3" fill="#ffffff"/><rect x="9.9" y="7.0" width="1.6" height="1.3" fill="#ffffff"/><rect x="12.6" y="7.0" width="1.6" height="1.3" fill="#ffffff"/><rect x="4.5" y="9.3" width="1.6" height="1.3" fill="#7fb8f0"/><rect x="7.2" y="9.3" width="1.6" height="1.3" fill="#ffffff"/><rect x="9.9" y="9.3" width="1.6" height="1.3" fill="#ffffff"/><rect x="12.6" y="9.3" width="1.6" height="1.3" fill="#ffffff"/><rect x="4.5" y="11.6" width="1.6" height="1.3" fill="#ffffff"/><rect x="7.2" y="11.6" width="1.6" height="1.3" fill="#ffffff"/><rect x="9.9" y="11.6" width="1.6" height="1.3" fill="#ffffff"/><rect x="12.6" y="11.6" width="1.6" height="1.3" fill="#ffffff"/></svg></div><div style="position:absolute;left:258px;top:136px;width:18px;height:16px;background:linear-gradient(135deg,#f6f8fe,#e0e6f6);border:1px solid #8a97b8;border-radius:4px;"><svg class="a" style="left:-1px;top:-1px" width="18" height="16"><rect x="3.5" y="8" width="11" height="6" fill="#4f5f88"/><path d="M5.5 8 V5.5 A2.8 2.8 0 0 1 11 5" fill="none" stroke="#4f5f88" stroke-width="2"/></svg></div><div style="position:absolute;left:278px;top:136px;width:18px;height:16px;background:linear-gradient(135deg,#f6f8fe,#e0e6f6);border:1px solid #8a97b8;border-radius:4px;"><svg class="a" style="left:-1px;top:-1px" width="18" height="16"><path d="M3 10 L9 4 L13 8 L7 14 Z" fill="#f6dde6" stroke="#777" stroke-width=".8"/><path d="M9 4 L11 2 L15 6 L13 8 Z" fill="#5068a8"/><circle cx="6" cy="10.5" r="1.6" fill="none" stroke="#e08aa0" stroke-width=".8"/></svg></div><div style="position:absolute;left:426px;top:136px;width:17px;height:16px;background:linear-gradient(135deg,#f6f8fe,#e0e6f6);border:1px solid #8a97b8;border-radius:4px;"><svg class="a" style="left:-1px;top:-1px" width="17" height="16"><rect x="5" y="8" width="7" height="3" fill="#4f5f88"/></svg></div><div style="position:absolute;left:446px;top:136px;width:17px;height:16px;background:linear-gradient(135deg,#f6f8fe,#e0e6f6);border:1px solid #8a97b8;border-radius:4px;"><svg class="a" style="left:-1px;top:-1px" width="17" height="16"><rect x="5.5" y="4.5" width="7" height="6" fill="none" stroke="#4f5f88" stroke-width="1.2"/><rect x="5" y="4" width="8" height="2.5" fill="#4f5f88"/></svg></div><div style="position:absolute;left:466px;top:136px;width:17px;height:16px;background:linear-gradient(135deg,#f6f8fe,#e0e6f6);border:1px solid #8a97b8;border-radius:4px;"><svg class="a" style="left:-1px;top:-1px" width="17" height="16"><path d="M5.5 4.5 L12 11 M12 4.5 L5.5 11" stroke="#4f5f88" stroke-width="2.2"/></svg></div><div class="t" style="left:294px;top:136px;width:133px;text-align:center;">Constellation</div>
<div style="position:absolute;left:490px;top:132px;width:273px;height:248px;background:#000;"></div><div style="position:absolute;left:491px;top:133px;width:1px;height:246px;background:#f4f4f4;"></div><div style="position:absolute;left:761px;top:133px;width:1px;height:246px;background:#f4f4f4;"></div><div style="position:absolute;left:491px;top:133px;width:271px;height:21px;background:#e6e6e6;border-top:1px solid #fafafa;border-left:1px solid #fafafa;"></div><div style="position:absolute;left:494px;top:136px;width:18px;height:16px;background:linear-gradient(135deg,#f6f8fe,#e0e6f6);border:1px solid #8a97b8;border-radius:4px;"><svg class="a" style="left:-1px;top:-1px" width="18" height="16"><path d="M4.5 12.5 L13 4" stroke="#4f5f88" stroke-width="1.6"/><path d="M11 6 L14.5 2.5" stroke="#4f5f88" stroke-width="2.6"/><path d="M5 5 L13.5 13" stroke="#4f5f88" stroke-width="2.2"/><path d="M2.5 5 A3 3 0 0 0 6.5 6.5 L7 3 A3 3 0 0 0 3.5 2.5 L5 4.5 Z" fill="#4f5f88"/></svg></div><div style="position:absolute;left:514px;top:136px;width:18px;height:16px;background:linear-gradient(135deg,#f6f8fe,#e0e6f6);border:1px solid #8a97b8;border-radius:4px;"><svg class="a" style="left:-1px;top:-1px" width="18" height="16"><rect x="3.5" y="2.5" width="12" height="11.5" fill="#6f7fb0" stroke="#5a6a9a" stroke-width=".8"/><rect x="4" y="3" width="11" height="3" fill="#a8b4d8"/><rect x="3.5" y="2" width="2" height="2" fill="#e8c060"/><rect x="4.5" y="7.0" width="1.6" height="1.3" fill="#ffffff"/><rect x="7.2" y="7.0" width="1.6" height="1.3" fill="#ffffff"/><rect x="9.9" y="7.0" width="1.6" height="1.3" fill="#ffffff"/><rect x="12.6" y="7.0" width="1.6" height="1.3" fill="#ffffff"/><rect x="4.5" y="9.3" width="1.6" height="1.3" fill="#7fb8f0"/><rect x="7.2" y="9.3" width="1.6" height="1.3" fill="#ffffff"/><rect x="9.9" y="9.3" width="1.6" height="1.3" fill="#ffffff"/><rect x="12.6" y="9.3" width="1.6" height="1.3" fill="#ffffff"/><rect x="4.5" y="11.6" width="1.6" height="1.3" fill="#ffffff"/><rect x="7.2" y="11.6" width="1.6" height="1.3" fill="#ffffff"/><rect x="9.9" y="11.6" width="1.6" height="1.3" fill="#ffffff"/><rect x="12.6" y="11.6" width="1.6" height="1.3" fill="#ffffff"/></svg></div><div style="position:absolute;left:534px;top:136px;width:18px;height:16px;background:linear-gradient(135deg,#f6f8fe,#e0e6f6);border:1px solid #8a97b8;border-radius:4px;"><svg class="a" style="left:-1px;top:-1px" width="18" height="16"><rect x="3.5" y="8" width="11" height="6" fill="#4f5f88"/><path d="M5.5 8 V5.5 A2.8 2.8 0 0 1 11 5" fill="none" stroke="#4f5f88" stroke-width="2"/></svg></div><div style="position:absolute;left:554px;top:136px;width:18px;height:16px;background:linear-gradient(135deg,#f6f8fe,#e0e6f6);border:1px solid #8a97b8;border-radius:4px;"><svg class="a" style="left:-1px;top:-1px" width="18" height="16"><path d="M3 10 L9 4 L13 8 L7 14 Z" fill="#f6dde6" stroke="#777" stroke-width=".8"/><path d="M9 4 L11 2 L15 6 L13 8 Z" fill="#5068a8"/><circle cx="6" cy="10.5" r="1.6" fill="none" stroke="#e08aa0" stroke-width=".8"/></svg></div><div style="position:absolute;left:702px;top:136px;width:17px;height:16px;background:linear-gradient(135deg,#f6f8fe,#e0e6f6);border:1px solid #8a97b8;border-radius:4px;"><svg class="a" style="left:-1px;top:-1px" width="17" height="16"><rect x="5" y="8" width="7" height="3" fill="#4f5f88"/></svg></div><div style="position:absolute;left:722px;top:136px;width:17px;height:16px;background:linear-gradient(135deg,#f6f8fe,#e0e6f6);border:1px solid #8a97b8;border-radius:4px;"><svg class="a" style="left:-1px;top:-1px" width="17" height="16"><rect x="5.5" y="4.5" width="7" height="6" fill="none" stroke="#4f5f88" stroke-width="1.2"/><rect x="5" y="4" width="8" height="2.5" fill="#4f5f88"/></svg></div><div style="position:absolute;left:742px;top:136px;width:17px;height:16px;background:linear-gradient(135deg,#f6f8fe,#e0e6f6);border:1px solid #8a97b8;border-radius:4px;"><svg class="a" style="left:-1px;top:-1px" width="17" height="16"><path d="M5.5 4.5 L12 11 M12 4.5 L5.5 11" stroke="#4f5f88" stroke-width="2.2"/></svg></div><div class="t" style="left:570px;top:136px;width:133px;text-align:center;">Frequency Domain</div>
<div style="position:absolute;left:214px;top:380px;width:549px;height:247px;background:#000;"></div><div style="position:absolute;left:215px;top:381px;width:1px;height:245px;background:#f4f4f4;"></div><div style="position:absolute;left:761px;top:381px;width:1px;height:245px;background:#f4f4f4;"></div><div style="position:absolute;left:215px;top:380px;width:547px;height:22px;background:#e6e6e6;border-top:1px solid #fafafa;border-left:1px solid #fafafa;"></div><div style="position:absolute;left:218px;top:384px;width:18px;height:16px;background:linear-gradient(135deg,#f6f8fe,#e0e6f6);border:1px solid #8a97b8;border-radius:4px;"><svg class="a" style="left:-1px;top:-1px" width="18" height="16"><path d="M4.5 12.5 L13 4" stroke="#4f5f88" stroke-width="1.6"/><path d="M11 6 L14.5 2.5" stroke="#4f5f88" stroke-width="2.6"/><path d="M5 5 L13.5 13" stroke="#4f5f88" stroke-width="2.2"/><path d="M2.5 5 A3 3 0 0 0 6.5 6.5 L7 3 A3 3 0 0 0 3.5 2.5 L5 4.5 Z" fill="#4f5f88"/></svg></div><div style="position:absolute;left:238px;top:384px;width:18px;height:16px;background:linear-gradient(135deg,#f6f8fe,#e0e6f6);border:1px solid #8a97b8;border-radius:4px;"><svg class="a" style="left:-1px;top:-1px" width="18" height="16"><rect x="3.5" y="2.5" width="12" height="11.5" fill="#6f7fb0" stroke="#5a6a9a" stroke-width=".8"/><rect x="4" y="3" width="11" height="3" fill="#a8b4d8"/><rect x="3.5" y="2" width="2" height="2" fill="#e8c060"/><rect x="4.5" y="7.0" width="1.6" height="1.3" fill="#ffffff"/><rect x="7.2" y="7.0" width="1.6" height="1.3" fill="#ffffff"/><rect x="9.9" y="7.0" width="1.6" height="1.3" fill="#ffffff"/><rect x="12.6" y="7.0" width="1.6" height="1.3" fill="#ffffff"/><rect x="4.5" y="9.3" width="1.6" height="1.3" fill="#7fb8f0"/><rect x="7.2" y="9.3" width="1.6" height="1.3" fill="#ffffff"/><rect x="9.9" y="9.3" width="1.6" height="1.3" fill="#ffffff"/><rect x="12.6" y="9.3" width="1.6" height="1.3" fill="#ffffff"/><rect x="4.5" y="11.6" width="1.6" height="1.3" fill="#ffffff"/><rect x="7.2" y="11.6" width="1.6" height="1.3" fill="#ffffff"/><rect x="9.9" y="11.6" width="1.6" height="1.3" fill="#ffffff"/><rect x="12.6" y="11.6" width="1.6" height="1.3" fill="#ffffff"/></svg></div><div style="position:absolute;left:258px;top:384px;width:18px;height:16px;background:linear-gradient(135deg,#f6f8fe,#e0e6f6);border:1px solid #8a97b8;border-radius:4px;"><svg class="a" style="left:-1px;top:-1px" width="18" height="16"><rect x="3.5" y="8" width="11" height="6" fill="#4f5f88"/><path d="M5.5 8 V5.5 A2.8 2.8 0 0 1 11 5" fill="none" stroke="#4f5f88" stroke-width="2"/></svg></div><div style="position:absolute;left:278px;top:384px;width:18px;height:16px;background:linear-gradient(135deg,#f6f8fe,#e0e6f6);border:1px solid #8a97b8;border-radius:4px;"><svg class="a" style="left:-1px;top:-1px" width="18" height="16"><path d="M3 10 L9 4 L13 8 L7 14 Z" fill="#f6dde6" stroke="#777" stroke-width=".8"/><path d="M9 4 L11 2 L15 6 L13 8 Z" fill="#5068a8"/><circle cx="6" cy="10.5" r="1.6" fill="none" stroke="#e08aa0" stroke-width=".8"/></svg></div><div style="position:absolute;left:702px;top:384px;width:17px;height:16px;background:linear-gradient(135deg,#f6f8fe,#e0e6f6);border:1px solid #8a97b8;border-radius:4px;"><svg class="a" style="left:-1px;top:-1px" width="17" height="16"><rect x="5" y="8" width="7" height="3" fill="#4f5f88"/></svg></div><div style="position:absolute;left:722px;top:384px;width:17px;height:16px;background:linear-gradient(135deg,#f6f8fe,#e0e6f6);border:1px solid #8a97b8;border-radius:4px;"><svg class="a" style="left:-1px;top:-1px" width="17" height="16"><rect x="5.5" y="4.5" width="7" height="6" fill="none" stroke="#4f5f88" stroke-width="1.2"/><rect x="5" y="4" width="8" height="2.5" fill="#4f5f88"/></svg></div><div style="position:absolute;left:742px;top:384px;width:17px;height:16px;background:linear-gradient(135deg,#f6f8fe,#e0e6f6);border:1px solid #8a97b8;border-radius:4px;"><svg class="a" style="left:-1px;top:-1px" width="17" height="16"><path d="M5.5 4.5 L12 11 M12 4.5 L5.5 11" stroke="#4f5f88" stroke-width="2.2"/></svg></div><div class="t" style="left:294px;top:384px;width:409px;text-align:center;">Complex Measured</div>
<div style="position:absolute;left:766px;top:132px;width:365px;height:163px;background:#000;"></div><div style="position:absolute;left:767px;top:133px;width:1px;height:161px;background:#f4f4f4;"></div><div style="position:absolute;left:1129px;top:133px;width:1px;height:161px;background:#f4f4f4;"></div><div style="position:absolute;left:767px;top:133px;width:363px;height:21px;background:#e6e6e6;border-top:1px solid #fafafa;border-left:1px solid #fafafa;"></div><div style="position:absolute;left:770px;top:136px;width:18px;height:16px;background:linear-gradient(135deg,#f6f8fe,#e0e6f6);border:1px solid #8a97b8;border-radius:4px;"><svg class="a" style="left:-1px;top:-1px" width="18" height="16"><path d="M4.5 12.5 L13 4" stroke="#4f5f88" stroke-width="1.6"/><path d="M11 6 L14.5 2.5" stroke="#4f5f88" stroke-width="2.6"/><path d="M5 5 L13.5 13" stroke="#4f5f88" stroke-width="2.2"/><path d="M2.5 5 A3 3 0 0 0 6.5 6.5 L7 3 A3 3 0 0 0 3.5 2.5 L5 4.5 Z" fill="#4f5f88"/></svg></div><div style="position:absolute;left:790px;top:136px;width:18px;height:16px;background:linear-gradient(135deg,#f6f8fe,#e0e6f6);border:1px solid #8a97b8;border-radius:4px;"><svg class="a" style="left:-1px;top:-1px" width="18" height="16"><rect x="3.5" y="2.5" width="12" height="11.5" fill="#6f7fb0" stroke="#5a6a9a" stroke-width=".8"/><rect x="4" y="3" width="11" height="3" fill="#a8b4d8"/><rect x="3.5" y="2" width="2" height="2" fill="#e8c060"/><rect x="4.5" y="7.0" width="1.6" height="1.3" fill="#ffffff"/><rect x="7.2" y="7.0" width="1.6" height="1.3" fill="#ffffff"/><rect x="9.9" y="7.0" width="1.6" height="1.3" fill="#ffffff"/><rect x="12.6" y="7.0" width="1.6" height="1.3" fill="#ffffff"/><rect x="4.5" y="9.3" width="1.6" height="1.3" fill="#7fb8f0"/><rect x="7.2" y="9.3" width="1.6" height="1.3" fill="#ffffff"/><rect x="9.9" y="9.3" width="1.6" height="1.3" fill="#ffffff"/><rect x="12.6" y="9.3" width="1.6" height="1.3" fill="#ffffff"/><rect x="4.5" y="11.6" width="1.6" height="1.3" fill="#ffffff"/><rect x="7.2" y="11.6" width="1.6" height="1.3" fill="#ffffff"/><rect x="9.9" y="11.6" width="1.6" height="1.3" fill="#ffffff"/><rect x="12.6" y="11.6" width="1.6" height="1.3" fill="#ffffff"/></svg></div><div style="position:absolute;left:810px;top:136px;width:18px;height:16px;background:linear-gradient(135deg,#f6f8fe,#e0e6f6);border:1px solid #8a97b8;border-radius:4px;"><svg class="a" style="left:-1px;top:-1px" width="18" height="16"><rect x="3.5" y="8" width="11" height="6" fill="#4f5f88"/><path d="M5.5 8 V5.5 A2.8 2.8 0 0 1 11 5" fill="none" stroke="#4f5f88" stroke-width="2"/></svg></div><div style="position:absolute;left:830px;top:136px;width:18px;height:16px;background:linear-gradient(135deg,#f6f8fe,#e0e6f6);border:1px solid #8a97b8;border-radius:4px;"><svg class="a" style="left:-1px;top:-1px" width="18" height="16"><path d="M3 10 L9 4 L13 8 L7 14 Z" fill="#f6dde6" stroke="#777" stroke-width=".8"/><path d="M9 4 L11 2 L15 6 L13 8 Z" fill="#5068a8"/><circle cx="6" cy="10.5" r="1.6" fill="none" stroke="#e08aa0" stroke-width=".8"/></svg></div><div style="position:absolute;left:1070px;top:136px;width:17px;height:16px;background:linear-gradient(135deg,#f6f8fe,#e0e6f6);border:1px solid #8a97b8;border-radius:4px;"><svg class="a" style="left:-1px;top:-1px" width="17" height="16"><rect x="5" y="8" width="7" height="3" fill="#4f5f88"/></svg></div><div style="position:absolute;left:1090px;top:136px;width:17px;height:16px;background:linear-gradient(135deg,#f6f8fe,#e0e6f6);border:1px solid #8a97b8;border-radius:4px;"><svg class="a" style="left:-1px;top:-1px" width="17" height="16"><rect x="5.5" y="4.5" width="7" height="6" fill="none" stroke="#4f5f88" stroke-width="1.2"/><rect x="5" y="4" width="8" height="2.5" fill="#4f5f88"/></svg></div><div style="position:absolute;left:1110px;top:136px;width:17px;height:16px;background:linear-gradient(135deg,#f6f8fe,#e0e6f6);border:1px solid #8a97b8;border-radius:4px;"><svg class="a" style="left:-1px;top:-1px" width="17" height="16"><path d="M5.5 4.5 L12 11 M12 4.5 L5.5 11" stroke="#4f5f88" stroke-width="2.2"/></svg></div><div class="t" style="left:846px;top:136px;width:225px;text-align:center;">EVM vs Symbol</div>
<div style="position:absolute;left:766px;top:295px;width:365px;height:163px;background:#000;"></div><div style="position:absolute;left:767px;top:296px;width:1px;height:161px;background:#f4f4f4;"></div><div style="position:absolute;left:1129px;top:296px;width:1px;height:161px;background:#f4f4f4;"></div><div style="position:absolute;left:767px;top:295px;width:363px;height:22px;background:#e6e6e6;border-top:1px solid #fafafa;border-left:1px solid #fafafa;"></div><div style="position:absolute;left:770px;top:299px;width:18px;height:16px;background:linear-gradient(135deg,#f6f8fe,#e0e6f6);border:1px solid #8a97b8;border-radius:4px;"><svg class="a" style="left:-1px;top:-1px" width="18" height="16"><path d="M4.5 12.5 L13 4" stroke="#4f5f88" stroke-width="1.6"/><path d="M11 6 L14.5 2.5" stroke="#4f5f88" stroke-width="2.6"/><path d="M5 5 L13.5 13" stroke="#4f5f88" stroke-width="2.2"/><path d="M2.5 5 A3 3 0 0 0 6.5 6.5 L7 3 A3 3 0 0 0 3.5 2.5 L5 4.5 Z" fill="#4f5f88"/></svg></div><div style="position:absolute;left:790px;top:299px;width:18px;height:16px;background:linear-gradient(135deg,#f6f8fe,#e0e6f6);border:1px solid #8a97b8;border-radius:4px;"><svg class="a" style="left:-1px;top:-1px" width="18" height="16"><rect x="3.5" y="2.5" width="12" height="11.5" fill="#6f7fb0" stroke="#5a6a9a" stroke-width=".8"/><rect x="4" y="3" width="11" height="3" fill="#a8b4d8"/><rect x="3.5" y="2" width="2" height="2" fill="#e8c060"/><rect x="4.5" y="7.0" width="1.6" height="1.3" fill="#ffffff"/><rect x="7.2" y="7.0" width="1.6" height="1.3" fill="#ffffff"/><rect x="9.9" y="7.0" width="1.6" height="1.3" fill="#ffffff"/><rect x="12.6" y="7.0" width="1.6" height="1.3" fill="#ffffff"/><rect x="4.5" y="9.3" width="1.6" height="1.3" fill="#7fb8f0"/><rect x="7.2" y="9.3" width="1.6" height="1.3" fill="#ffffff"/><rect x="9.9" y="9.3" width="1.6" height="1.3" fill="#ffffff"/><rect x="12.6" y="9.3" width="1.6" height="1.3" fill="#ffffff"/><rect x="4.5" y="11.6" width="1.6" height="1.3" fill="#ffffff"/><rect x="7.2" y="11.6" width="1.6" height="1.3" fill="#ffffff"/><rect x="9.9" y="11.6" width="1.6" height="1.3" fill="#ffffff"/><rect x="12.6" y="11.6" width="1.6" height="1.3" fill="#ffffff"/></svg></div><div style="position:absolute;left:810px;top:299px;width:18px;height:16px;background:linear-gradient(135deg,#f6f8fe,#e0e6f6);border:1px solid #8a97b8;border-radius:4px;"><svg class="a" style="left:-1px;top:-1px" width="18" height="16"><rect x="3.5" y="8" width="11" height="6" fill="#4f5f88"/><path d="M5.5 8 V5.5 A2.8 2.8 0 0 1 11 5" fill="none" stroke="#4f5f88" stroke-width="2"/></svg></div><div style="position:absolute;left:830px;top:299px;width:18px;height:16px;background:linear-gradient(135deg,#f6f8fe,#e0e6f6);border:1px solid #8a97b8;border-radius:4px;"><svg class="a" style="left:-1px;top:-1px" width="18" height="16"><path d="M3 10 L9 4 L13 8 L7 14 Z" fill="#f6dde6" stroke="#777" stroke-width=".8"/><path d="M9 4 L11 2 L15 6 L13 8 Z" fill="#5068a8"/><circle cx="6" cy="10.5" r="1.6" fill="none" stroke="#e08aa0" stroke-width=".8"/></svg></div><div style="position:absolute;left:1070px;top:299px;width:17px;height:16px;background:linear-gradient(135deg,#f6f8fe,#e0e6f6);border:1px solid #8a97b8;border-radius:4px;"><svg class="a" style="left:-1px;top:-1px" width="17" height="16"><rect x="5" y="8" width="7" height="3" fill="#4f5f88"/></svg></div><div style="position:absolute;left:1090px;top:299px;width:17px;height:16px;background:linear-gradient(135deg,#f6f8fe,#e0e6f6);border:1px solid #8a97b8;border-radius:4px;"><svg class="a" style="left:-1px;top:-1px" width="17" height="16"><rect x="5.5" y="4.5" width="7" height="6" fill="none" stroke="#4f5f88" stroke-width="1.2"/><rect x="5" y="4" width="8" height="2.5" fill="#4f5f88"/></svg></div><div style="position:absolute;left:1110px;top:299px;width:17px;height:16px;background:linear-gradient(135deg,#f6f8fe,#e0e6f6);border:1px solid #8a97b8;border-radius:4px;"><svg class="a" style="left:-1px;top:-1px" width="17" height="16"><path d="M5.5 4.5 L12 11 M12 4.5 L5.5 11" stroke="#4f5f88" stroke-width="2.2"/></svg></div><div class="t" style="left:846px;top:299px;width:225px;text-align:center;">Mag Error vs Symbol</div>
<div style="position:absolute;left:766px;top:458px;width:365px;height:169px;background:#000;"></div><div style="position:absolute;left:767px;top:459px;width:1px;height:167px;background:#f4f4f4;"></div><div style="position:absolute;left:1129px;top:459px;width:1px;height:167px;background:#f4f4f4;"></div><div style="position:absolute;left:767px;top:458px;width:363px;height:22px;background:#e6e6e6;border-top:1px solid #fafafa;border-left:1px solid #fafafa;"></div><div style="position:absolute;left:770px;top:462px;width:18px;height:16px;background:linear-gradient(135deg,#f6f8fe,#e0e6f6);border:1px solid #8a97b8;border-radius:4px;"><svg class="a" style="left:-1px;top:-1px" width="18" height="16"><path d="M4.5 12.5 L13 4" stroke="#4f5f88" stroke-width="1.6"/><path d="M11 6 L14.5 2.5" stroke="#4f5f88" stroke-width="2.6"/><path d="M5 5 L13.5 13" stroke="#4f5f88" stroke-width="2.2"/><path d="M2.5 5 A3 3 0 0 0 6.5 6.5 L7 3 A3 3 0 0 0 3.5 2.5 L5 4.5 Z" fill="#4f5f88"/></svg></div><div style="position:absolute;left:790px;top:462px;width:18px;height:16px;background:linear-gradient(135deg,#f6f8fe,#e0e6f6);border:1px solid #8a97b8;border-radius:4px;"><svg class="a" style="left:-1px;top:-1px" width="18" height="16"><rect x="3.5" y="2.5" width="12" height="11.5" fill="#6f7fb0" stroke="#5a6a9a" stroke-width=".8"/><rect x="4" y="3" width="11" height="3" fill="#a8b4d8"/><rect x="3.5" y="2" width="2" height="2" fill="#e8c060"/><rect x="4.5" y="7.0" width="1.6" height="1.3" fill="#ffffff"/><rect x="7.2" y="7.0" width="1.6" height="1.3" fill="#ffffff"/><rect x="9.9" y="7.0" width="1.6" height="1.3" fill="#ffffff"/><rect x="12.6" y="7.0" width="1.6" height="1.3" fill="#ffffff"/><rect x="4.5" y="9.3" width="1.6" height="1.3" fill="#7fb8f0"/><rect x="7.2" y="9.3" width="1.6" height="1.3" fill="#ffffff"/><rect x="9.9" y="9.3" width="1.6" height="1.3" fill="#ffffff"/><rect x="12.6" y="9.3" width="1.6" height="1.3" fill="#ffffff"/><rect x="4.5" y="11.6" width="1.6" height="1.3" fill="#ffffff"/><rect x="7.2" y="11.6" width="1.6" height="1.3" fill="#ffffff"/><rect x="9.9" y="11.6" width="1.6" height="1.3" fill="#ffffff"/><rect x="12.6" y="11.6" width="1.6" height="1.3" fill="#ffffff"/></svg></div><div style="position:absolute;left:810px;top:462px;width:18px;height:16px;background:linear-gradient(135deg,#f6f8fe,#e0e6f6);border:1px solid #8a97b8;border-radius:4px;"><svg class="a" style="left:-1px;top:-1px" width="18" height="16"><rect x="3.5" y="8" width="11" height="6" fill="#4f5f88"/><path d="M5.5 8 V5.5 A2.8 2.8 0 0 1 11 5" fill="none" stroke="#4f5f88" stroke-width="2"/></svg></div><div style="position:absolute;left:830px;top:462px;width:18px;height:16px;background:linear-gradient(135deg,#f6f8fe,#e0e6f6);border:1px solid #8a97b8;border-radius:4px;"><svg class="a" style="left:-1px;top:-1px" width="18" height="16"><path d="M3 10 L9 4 L13 8 L7 14 Z" fill="#f6dde6" stroke="#777" stroke-width=".8"/><path d="M9 4 L11 2 L15 6 L13 8 Z" fill="#5068a8"/><circle cx="6" cy="10.5" r="1.6" fill="none" stroke="#e08aa0" stroke-width=".8"/></svg></div><div style="position:absolute;left:1070px;top:462px;width:17px;height:16px;background:linear-gradient(135deg,#f6f8fe,#e0e6f6);border:1px solid #8a97b8;border-radius:4px;"><svg class="a" style="left:-1px;top:-1px" width="17" height="16"><rect x="5" y="8" width="7" height="3" fill="#4f5f88"/></svg></div><div style="position:absolute;left:1090px;top:462px;width:17px;height:16px;background:linear-gradient(135deg,#f6f8fe,#e0e6f6);border:1px solid #8a97b8;border-radius:4px;"><svg class="a" style="left:-1px;top:-1px" width="17" height="16"><rect x="5.5" y="4.5" width="7" height="6" fill="none" stroke="#4f5f88" stroke-width="1.2"/><rect x="5" y="4" width="8" height="2.5" fill="#4f5f88"/></svg></div><div style="position:absolute;left:1110px;top:462px;width:17px;height:16px;background:linear-gradient(135deg,#f6f8fe,#e0e6f6);border:1px solid #8a97b8;border-radius:4px;"><svg class="a" style="left:-1px;top:-1px" width="17" height="16"><path d="M5.5 4.5 L12 11 M12 4.5 L5.5 11" stroke="#4f5f88" stroke-width="2.2"/></svg></div><div class="t" style="left:846px;top:462px;width:225px;text-align:center;">Phase Error vs Symbol</div>
<div style="position:absolute;left:1134px;top:132px;width:391px;height:492px;background:#000;"></div><div style="position:absolute;left:1135px;top:133px;width:1px;height:490px;background:#f4f4f4;"></div><div style="position:absolute;left:1523px;top:133px;width:1px;height:490px;background:#f4f4f4;"></div><div style="position:absolute;left:1135px;top:622px;width:389px;height:1px;background:#f4f4f4;"></div><div style="position:absolute;left:1135px;top:133px;width:389px;height:21px;background:#e6e6e6;border-top:1px solid #fafafa;border-left:1px solid #fafafa;"></div><div style="position:absolute;left:1138px;top:136px;width:18px;height:16px;background:linear-gradient(135deg,#f6f8fe,#e0e6f6);border:1px solid #8a97b8;border-radius:4px;"><svg class="a" style="left:-1px;top:-1px" width="18" height="16"><path d="M4.5 12.5 L13 4" stroke="#4f5f88" stroke-width="1.6"/><path d="M11 6 L14.5 2.5" stroke="#4f5f88" stroke-width="2.6"/><path d="M5 5 L13.5 13" stroke="#4f5f88" stroke-width="2.2"/><path d="M2.5 5 A3 3 0 0 0 6.5 6.5 L7 3 A3 3 0 0 0 3.5 2.5 L5 4.5 Z" fill="#4f5f88"/></svg></div><div style="position:absolute;left:1158px;top:136px;width:18px;height:16px;background:linear-gradient(135deg,#f6f8fe,#e0e6f6);border:1px solid #8a97b8;border-radius:4px;"><svg class="a" style="left:-1px;top:-1px" width="18" height="16"><rect x="3.5" y="2.5" width="12" height="11.5" fill="#6f7fb0" stroke="#5a6a9a" stroke-width=".8"/><rect x="4" y="3" width="11" height="3" fill="#a8b4d8"/><rect x="3.5" y="2" width="2" height="2" fill="#e8c060"/><rect x="4.5" y="7.0" width="1.6" height="1.3" fill="#ffffff"/><rect x="7.2" y="7.0" width="1.6" height="1.3" fill="#ffffff"/><rect x="9.9" y="7.0" width="1.6" height="1.3" fill="#ffffff"/><rect x="12.6" y="7.0" width="1.6" height="1.3" fill="#ffffff"/><rect x="4.5" y="9.3" width="1.6" height="1.3" fill="#7fb8f0"/><rect x="7.2" y="9.3" width="1.6" height="1.3" fill="#ffffff"/><rect x="9.9" y="9.3" width="1.6" height="1.3" fill="#ffffff"/><rect x="12.6" y="9.3" width="1.6" height="1.3" fill="#ffffff"/><rect x="4.5" y="11.6" width="1.6" height="1.3" fill="#ffffff"/><rect x="7.2" y="11.6" width="1.6" height="1.3" fill="#ffffff"/><rect x="9.9" y="11.6" width="1.6" height="1.3" fill="#ffffff"/><rect x="12.6" y="11.6" width="1.6" height="1.3" fill="#ffffff"/></svg></div><div style="position:absolute;left:1178px;top:136px;width:18px;height:16px;background:linear-gradient(135deg,#f6f8fe,#e0e6f6);border:1px solid #8a97b8;border-radius:4px;"><svg class="a" style="left:-1px;top:-1px" width="18" height="16"><rect x="3.5" y="8" width="11" height="6" fill="#4f5f88"/><path d="M5.5 8 V5.5 A2.8 2.8 0 0 1 11 5" fill="none" stroke="#4f5f88" stroke-width="2"/></svg></div><div style="position:absolute;left:1198px;top:136px;width:18px;height:16px;background:linear-gradient(135deg,#f6f8fe,#e0e6f6);border:1px solid #8a97b8;border-radius:4px;"><svg class="a" style="left:-1px;top:-1px" width="18" height="16"><path d="M3 10 L9 4 L13 8 L7 14 Z" fill="#f6dde6" stroke="#777" stroke-width=".8"/><path d="M9 4 L11 2 L15 6 L13 8 Z" fill="#5068a8"/><circle cx="6" cy="10.5" r="1.6" fill="none" stroke="#e08aa0" stroke-width=".8"/></svg></div><div style="position:absolute;left:1464px;top:136px;width:17px;height:16px;background:linear-gradient(135deg,#f6f8fe,#e0e6f6);border:1px solid #8a97b8;border-radius:4px;"><svg class="a" style="left:-1px;top:-1px" width="17" height="16"><rect x="5" y="8" width="7" height="3" fill="#4f5f88"/></svg></div><div style="position:absolute;left:1484px;top:136px;width:17px;height:16px;background:linear-gradient(135deg,#f6f8fe,#e0e6f6);border:1px solid #8a97b8;border-radius:4px;"><svg class="a" style="left:-1px;top:-1px" width="17" height="16"><rect x="5.5" y="4.5" width="7" height="6" fill="none" stroke="#4f5f88" stroke-width="1.2"/><rect x="5" y="4" width="8" height="2.5" fill="#4f5f88"/></svg></div><div style="position:absolute;left:1504px;top:136px;width:17px;height:16px;background:linear-gradient(135deg,#f6f8fe,#e0e6f6);border:1px solid #8a97b8;border-radius:4px;"><svg class="a" style="left:-1px;top:-1px" width="17" height="16"><path d="M5.5 4.5 L12 11 M12 4.5 L5.5 11" stroke="#4f5f88" stroke-width="2.2"/></svg></div><div class="t" style="left:1214px;top:136px;width:251px;text-align:center;">Results</div>
<svg class="a" style="left:216px;top:154px" width="270" height="225" viewBox="216 154 270 225" shape-rendering="crispEdges"><rect x="221.5" y="168.5" width="258" height="196" fill="none" stroke="#7a7a7a"/><line x1="221" y1="266.5" x2="480" y2="266.5" stroke="#7a7a7a"/><line x1="350.5" y1="169" x2="350.5" y2="364" stroke="#7a7a7a"/><path d="M473.6,266.5 L473.7,268.1 L473.7,269.8 L473.7,271.4 L473.7,273.1 L473.6,274.7 L473.5,276.4 L473.3,278.0 L473.0,279.7 L472.7,281.3 L472.4,283.0 L472.0,284.6 L471.5,286.2 L471.0,287.8 L470.5,289.4 L469.9,291.0 L469.3,292.6 L468.6,294.1 L467.9,295.7 L467.2,297.2 L466.4,298.8 L465.6,300.3 L464.8,301.8 L464.0,303.3 L463.1,304.8 L462.2,306.3 L461.3,307.8 L460.4,309.3 L459.4,310.8 L458.4,312.2 L457.3,313.7 L456.2,315.1 L455.1,316.5 L453.9,317.9 L452.7,319.2 L451.5,320.6 L450.2,321.9 L448.9,323.2 L447.6,324.5 L446.2,325.7 L444.8,327.0 L443.3,328.2 L441.9,329.4 L440.4,330.5 L438.9,331.7 L437.4,332.9 L435.8,334.0 L434.3,335.1 L432.7,336.2 L431.1,337.3 L429.5,338.4 L427.9,339.5 L426.2,340.6 L424.6,341.6 L422.9,342.6 L421.2,343.7 L419.4,344.6 L417.7,345.6 L415.9,346.5 L414.1,347.4 L412.2,348.3 L410.4,349.1 L408.5,349.9 L406.6,350.7 L404.6,351.4 L402.6,352.0 L400.6,352.6 L398.6,353.2 L396.6,353.8 L394.6,354.3 L392.5,354.7 L390.5,355.2 L388.4,355.6 L386.3,356.0 L384.3,356.4 L382.2,356.8 L380.1,357.2 L378.1,357.6 L376.0,357.9 L373.9,358.3 L371.8,358.6 L369.7,358.9 L367.6,359.2 L365.4,359.4 L363.3,359.7 L361.2,359.9 L359.1,360.1 L356.9,360.2 L354.8,360.3 L352.6,360.4 L350.5,360.5 L348.4,360.5 L346.2,360.4 L344.1,360.4 L341.9,360.3 L339.8,360.1 L337.6,360.0 L335.5,359.8 L333.4,359.5 L331.3,359.3 L329.1,359.0 L327.0,358.8 L324.9,358.5 L322.8,358.1 L320.7,357.8 L318.6,357.5 L316.5,357.1 L314.4,356.7 L312.4,356.3 L310.3,355.9 L308.2,355.4 L306.2,354.9 L304.1,354.4 L302.1,353.8 L300.1,353.2 L298.1,352.6 L296.2,351.9 L294.2,351.1 L292.3,350.4 L290.4,349.6 L288.5,348.7 L286.7,347.8 L284.9,346.9 L283.1,345.9 L281.4,344.9 L279.7,343.9 L278.0,342.9 L276.3,341.8 L274.7,340.7 L273.0,339.6 L271.4,338.5 L269.8,337.4 L268.3,336.3 L266.7,335.2 L265.2,334.0 L263.6,332.9 L262.1,331.7 L260.7,330.5 L259.2,329.3 L257.8,328.1 L256.3,326.9 L255.0,325.6 L253.6,324.3 L252.3,323.1 L251.0,321.7 L249.7,320.4 L248.5,319.1 L247.4,317.7 L246.2,316.3 L245.1,314.9 L244.1,313.4 L243.0,312.0 L242.1,310.5 L241.1,309.1 L240.2,307.6 L239.3,306.1 L238.4,304.6 L237.6,303.1 L236.8,301.6 L236.0,300.1 L235.2,298.5 L234.5,297.0 L233.8,295.5 L233.1,293.9 L232.4,292.4 L231.8,290.8 L231.1,289.2 L230.5,287.7 L230.0,286.1 L229.5,284.5 L229.1,282.9 L228.7,281.3 L228.3,279.6 L228.0,278.0 L227.8,276.4 L227.6,274.7 L227.5,273.1 L227.4,271.4 L227.4,269.8 L227.4,268.1 L227.4,266.5 L227.5,264.9 L227.7,263.2 L227.8,261.6 L228.0,260.0 L228.2,258.3 L228.5,256.7 L228.7,255.1 L229.0,253.5 L229.3,251.8 L229.6,250.2 L230.0,248.6 L230.4,247.0 L230.8,245.4 L231.2,243.8 L231.6,242.2 L232.1,240.6 L232.7,239.0 L233.3,237.4 L233.9,235.8 L234.5,234.2 L235.3,232.7 L236.0,231.1 L236.8,229.6 L237.7,228.1 L238.6,226.6 L239.5,225.1 L240.5,223.6 L241.5,222.1 L242.5,220.7 L243.6,219.3 L244.7,217.9 L245.8,216.5 L247.0,215.1 L248.2,213.7 L249.4,212.3 L250.6,211.0 L251.9,209.6 L253.2,208.3 L254.5,207.0 L255.8,205.7 L257.2,204.4 L258.6,203.2 L260.1,201.9 L261.5,200.7 L263.0,199.5 L264.6,198.4 L266.2,197.3 L267.8,196.2 L269.4,195.1 L271.1,194.1 L272.9,193.2 L274.6,192.2 L276.4,191.3 L278.2,190.4 L280.0,189.5 L281.8,188.7 L283.7,187.9 L285.5,187.1 L287.4,186.3 L289.3,185.6 L291.2,184.8 L293.1,184.1 L295.0,183.4 L296.9,182.7 L298.8,182.0 L300.8,181.3 L302.7,180.6 L304.7,179.9 L306.6,179.3 L308.6,178.7 L310.6,178.1 L312.6,177.5 L314.6,177.0 L316.7,176.4 L318.7,175.9 L320.8,175.4 L322.8,175.0 L324.9,174.5 L327.0,174.2 L329.1,173.9 L331.2,173.6 L333.4,173.3 L335.5,173.1 L337.6,172.9 L339.8,172.7 L341.9,172.6 L344.1,172.5 L346.2,172.4 L348.4,172.4 L350.5,172.3 L352.6,172.3 L354.8,172.3 L357.0,172.4 L359.1,172.4 L361.2,172.5 L363.4,172.6 L365.5,172.8 L367.7,172.9 L369.8,173.2 L372.0,173.4 L374.1,173.7 L376.2,174.0 L378.3,174.4 L380.4,174.8 L382.5,175.2 L384.5,175.7 L386.6,176.3 L388.6,176.8 L390.6,177.4 L392.6,178.0 L394.6,178.7 L396.6,179.3 L398.5,180.0 L400.5,180.7 L402.4,181.4 L404.3,182.2 L406.3,182.9 L408.2,183.7 L410.1,184.4 L411.9,185.2 L413.8,186.0 L415.7,186.8 L417.5,187.6 L419.4,188.4 L421.2,189.3 L423.0,190.2 L424.8,191.1 L426.5,192.0 L428.3,193.0 L430.0,194.0 L431.6,195.1 L433.3,196.1 L434.9,197.2 L436.4,198.4 L438.0,199.5 L439.4,200.7 L440.9,202.0 L442.3,203.2 L443.7,204.5 L445.1,205.8 L446.4,207.1 L447.7,208.4 L448.9,209.8 L450.2,211.1 L451.4,212.5 L452.5,213.9 L453.7,215.3 L454.8,216.7 L455.9,218.1 L457.0,219.5 L458.1,220.9 L459.1,222.4 L460.1,223.8 L461.0,225.3 L461.9,226.8 L462.8,228.3 L463.6,229.8 L464.4,231.4 L465.1,232.9 L465.8,234.5 L466.4,236.0 L467.0,237.6 L467.6,239.2 L468.2,240.7 L468.7,242.3 L469.2,243.9 L469.7,245.5 L470.1,247.1 L470.5,248.7 L470.9,250.3 L471.3,251.9 L471.6,253.5 L472.0,255.1 L472.3,256.7 L472.5,258.4 L472.8,260.0 L473.0,261.6 L473.2,263.2 L473.4,264.9 L473.6,266.5 Z M469.0,266.5 L469.2,264.9 L469.2,263.4 L469.2,261.8 L469.2,260.2 L469.1,258.6 L469.0,257.1 L468.8,255.5 L468.6,253.9 L468.3,252.4 L468.0,250.8 L467.6,249.3 L467.2,247.7 L466.7,246.2 L466.2,244.7 L465.7,243.2 L465.1,241.6 L464.4,240.1 L463.7,238.7 L463.0,237.2 L462.2,235.8 L461.4,234.3 L460.6,232.9 L459.8,231.4 L458.9,230.0 L458.1,228.6 L457.1,227.2 L456.2,225.8 L455.2,224.4 L454.2,223.1 L453.2,221.7 L452.2,220.4 L451.1,219.0 L449.9,217.7 L448.7,216.4 L447.5,215.2 L446.3,213.9 L445.0,212.7 L443.7,211.5 L442.4,210.3 L441.0,209.2 L439.6,208.0 L438.2,206.9 L436.8,205.8 L435.3,204.7 L433.9,203.6 L432.4,202.6 L430.9,201.5 L429.4,200.4 L427.9,199.4 L426.3,198.3 L424.8,197.3 L423.2,196.3 L421.6,195.3 L420.0,194.3 L418.4,193.3 L416.7,192.4 L415.1,191.4 L413.3,190.5 L411.6,189.6 L409.9,188.8 L408.1,188.0 L406.3,187.2 L404.4,186.5 L402.6,185.8 L400.7,185.2 L398.8,184.5 L396.9,184.0 L394.9,183.4 L393.0,182.9 L391.0,182.4 L389.0,182.0 L387.1,181.6 L385.1,181.2 L383.1,180.8 L381.1,180.4 L379.1,180.1 L377.1,179.7 L375.0,179.4 L373.0,179.1 L371.0,178.8 L369.0,178.5 L366.9,178.2 L364.9,178.0 L362.9,177.8 L360.8,177.6 L358.8,177.4 L356.7,177.3 L354.6,177.2 L352.6,177.1 L350.5,177.1 L348.4,177.0 L346.4,177.1 L344.3,177.1 L342.2,177.2 L340.2,177.4 L338.1,177.5 L336.1,177.7 L334.0,177.9 L332.0,178.1 L329.9,178.3 L327.9,178.6 L325.8,178.9 L323.8,179.2 L321.8,179.5 L319.8,179.8 L317.7,180.1 L315.7,180.5 L313.7,180.9 L311.7,181.3 L309.7,181.8 L307.8,182.3 L305.8,182.8 L303.9,183.4 L302.0,184.0 L300.1,184.6 L298.2,185.3 L296.3,186.0 L294.5,186.8 L292.7,187.6 L290.9,188.4 L289.2,189.3 L287.4,190.2 L285.7,191.1 L284.1,192.1 L282.4,193.1 L280.8,194.1 L279.2,195.1 L277.7,196.1 L276.1,197.2 L274.6,198.2 L273.0,199.3 L271.5,200.4 L270.1,201.4 L268.6,202.5 L267.1,203.6 L265.7,204.7 L264.3,205.9 L262.8,207.0 L261.5,208.1 L260.1,209.3 L258.8,210.5 L257.5,211.7 L256.2,212.9 L254.9,214.1 L253.7,215.4 L252.5,216.6 L251.4,217.9 L250.3,219.2 L249.2,220.6 L248.2,221.9 L247.2,223.3 L246.2,224.7 L245.3,226.0 L244.4,227.4 L243.5,228.8 L242.6,230.3 L241.8,231.7 L241.0,233.1 L240.2,234.5 L239.4,236.0 L238.7,237.4 L238.0,238.9 L237.3,240.4 L236.6,241.8 L236.0,243.3 L235.4,244.8 L234.8,246.3 L234.3,247.8 L233.9,249.4 L233.4,250.9 L233.1,252.4 L232.7,254.0 L232.5,255.5 L232.3,257.1 L232.1,258.7 L232.0,260.2 L231.9,261.8 L231.9,263.4 L231.9,264.9 L232.0,266.5 L232.0,268.1 L232.2,269.6 L232.3,271.2 L232.5,272.7 L232.7,274.3 L232.9,275.8 L233.2,277.4 L233.4,278.9 L233.7,280.5 L234.0,282.0 L234.3,283.5 L234.7,285.1 L235.1,286.6 L235.4,288.2 L235.9,289.7 L236.3,291.2 L236.8,292.8 L237.4,294.3 L238.1,295.8 L238.7,297.3 L239.4,298.7 L240.2,300.2 L241.0,301.6 L241.9,303.1 L242.7,304.5 L243.7,305.9 L244.6,307.3 L245.6,308.7 L246.6,310.0 L247.7,311.4 L248.8,312.7 L249.9,314.0 L251.0,315.3 L252.2,316.6 L253.3,317.9 L254.5,319.2 L255.8,320.4 L257.0,321.7 L258.3,322.9 L259.6,324.1 L260.9,325.4 L262.3,326.5 L263.6,327.7 L265.1,328.9 L266.5,330.0 L268.0,331.1 L269.5,332.1 L271.1,333.2 L272.7,334.1 L274.3,335.1 L275.9,336.0 L277.6,336.9 L279.3,337.8 L281.0,338.7 L282.8,339.5 L284.5,340.3 L286.3,341.1 L288.1,341.8 L289.9,342.6 L291.7,343.3 L293.5,344.0 L295.3,344.7 L297.1,345.5 L298.9,346.2 L300.8,346.8 L302.6,347.5 L304.5,348.2 L306.4,348.9 L308.2,349.5 L310.1,350.1 L312.1,350.7 L314.0,351.3 L315.9,351.9 L317.9,352.4 L319.8,352.9 L321.8,353.3 L323.8,353.7 L325.8,354.1 L327.9,354.5 L329.9,354.8 L331.9,355.0 L334.0,355.3 L336.0,355.5 L338.1,355.6 L340.2,355.8 L342.2,355.9 L344.3,356.0 L346.4,356.1 L348.4,356.1 L350.5,356.1 L352.6,356.2 L354.6,356.2 L356.7,356.1 L358.8,356.1 L360.9,356.0 L362.9,355.9 L365.0,355.8 L367.1,355.6 L369.1,355.4 L371.2,355.2 L373.2,355.0 L375.3,354.7 L377.3,354.3 L379.3,353.9 L381.3,353.5 L383.3,353.1 L385.3,352.6 L387.2,352.0 L389.2,351.4 L391.1,350.8 L393.0,350.1 L394.9,349.5 L396.8,348.8 L398.6,348.1 L400.5,347.4 L402.3,346.7 L404.1,345.9 L406.0,345.2 L407.8,344.4 L409.6,343.7 L411.4,342.9 L413.1,342.2 L414.9,341.4 L416.7,340.6 L418.4,339.7 L420.1,338.9 L421.8,338.0 L423.5,337.1 L425.2,336.2 L426.8,335.2 L428.4,334.2 L430.0,333.2 L431.5,332.2 L433.0,331.1 L434.5,330.0 L435.9,328.8 L437.3,327.7 L438.7,326.5 L440.0,325.3 L441.3,324.0 L442.6,322.8 L443.8,321.6 L445.0,320.3 L446.2,319.0 L447.4,317.7 L448.5,316.4 L449.7,315.1 L450.8,313.8 L451.9,312.5 L452.9,311.1 L453.9,309.8 L454.9,308.4 L455.9,307.0 L456.8,305.6 L457.7,304.2 L458.6,302.8 L459.4,301.4 L460.2,300.0 L460.9,298.5 L461.6,297.0 L462.3,295.5 L462.9,294.1 L463.5,292.6 L464.0,291.0 L464.5,289.5 L464.9,288.0 L465.4,286.5 L465.8,285.0 L466.2,283.5 L466.5,281.9 L466.9,280.4 L467.2,278.9 L467.5,277.3 L467.8,275.8 L468.1,274.3 L468.3,272.7 L468.5,271.2 L468.7,269.6 L468.9,268.1 L469.0,266.5 Z" fill="#f2f200" fill-rule="evenodd" shape-rendering="auto"/><path d="M347 177 L353 173 M348 173 L352 177" stroke="#20d020" stroke-width="1.2" shape-rendering="auto"/><path d="M347 359 L353 355 M348 355 L352 359" stroke="#20d020" stroke-width="1.2" shape-rendering="auto"/><path d="M227 268 L233 264 M228 264 L232 268" stroke="#20d020" stroke-width="1.2" shape-rendering="auto"/><path d="M467 268 L473 264 M468 264 L472 268" stroke="#20d020" stroke-width="1.2" shape-rendering="auto"/><path d="M347 268 L353 264 M348 264 L352 268" stroke="#20d020" stroke-width="1.2" shape-rendering="auto"/></svg>
<svg class="a" style="left:492px;top:154px" width="270" height="225" viewBox="492 154 270 225" shape-rendering="crispEdges"><rect x="541.5" y="169.5" width="214" height="195" fill="none" stroke="#7a7a7a" stroke-width="1"/><line x1="548.5" y1="169" x2="548.5" y2="364" stroke="#7a7a7a"/><path d="M541 171.5 H544 M546 171.5 H549 M752 171.5 H755 M541 174.5 H544 M546 174.5 H549 M752 174.5 H755 M541 176.5 H544 M546 176.5 H549 M752 176.5 H755 M541 179.5 H544 M546 179.5 H549 M752 179.5 H755 M541 181.5 H544 M546 181.5 H549 M752 181.5 H755 M541 184.5 H544 M546 184.5 H549 M752 184.5 H755 M541 186.5 H544 M546 186.5 H549 M752 186.5 H755 M541 189.5 H544 M546 189.5 H549 M752 189.5 H755 M541 191.5 H544 M546 191.5 H549 M752 191.5 H755 M541 194.5 H544 M546 194.5 H549 M752 194.5 H755 M541 196.5 H544 M546 196.5 H549 M752 196.5 H755 M541 199.5 H544 M546 199.5 H549 M752 199.5 H755 M541 201.5 H544 M546 201.5 H549 M752 201.5 H755 M541 204.5 H544 M546 204.5 H549 M752 204.5 H755 M541 206.5 H544 M546 206.5 H549 M752 206.5 H755 M541 209.5 H544 M546 209.5 H549 M752 209.5 H755 M541 211.5 H544 M546 211.5 H549 M752 211.5 H755 M541 214.5 H544 M546 214.5 H549 M752 214.5 H755 M541 216.5 H544 M546 216.5 H549 M752 216.5 H755 M541 219.5 H544 M546 219.5 H549 M752 219.5 H755 M541 221.5 H544 M546 221.5 H549 M752 221.5 H755 M541 224.5 H544 M546 224.5 H549 M752 224.5 H755 M541 226.5 H544 M546 226.5 H549 M752 226.5 H755 M541 229.5 H544 M546 229.5 H549 M752 229.5 H755 M541 231.5 H544 M546 231.5 H549 M752 231.5 H755 M541 234.5 H544 M546 234.5 H549 M752 234.5 H755 M541 236.5 H544 M546 236.5 H549 M752 236.5 H755 M541 239.5 H544 M546 239.5 H549 M752 239.5 H755 M541 241.5 H544 M546 241.5 H549 M752 241.5 H755 M541 244.5 H544 M546 244.5 H549 M752 244.5 H755 M541 246.5 H544 M546 246.5 H549 M752 246.5 H755 M541 249.5 H544 M546 249.5 H549 M752 249.5 H755 M541 251.5 H544 M546 251.5 H549 M752 251.5 H755 M541 254.5 H544 M546 254.5 H549 M752 254.5 H755 M541 256.5 H544 M546 256.5 H549 M752 256.5 H755 M541 259.5 H544 M546 259.5 H549 M752 259.5 H755 M541 261.5 H544 M546 261.5 H549 M752 261.5 H755 M541 264.5 H544 M546 264.5 H549 M752 264.5 H755 M541 266.5 H544 M546 266.5 H549 M752 266.5 H755 M541 269.5 H544 M546 269.5 H549 M752 269.5 H755 M541 271.5 H544 M546 271.5 H549 M752 271.5 H755 M541 274.5 H544 M546 274.5 H549 M752 274.5 H755 M541 276.5 H544 M546 276.5 H549 M752 276.5 H755 M541 279.5 H544 M546 279.5 H549 M752 279.5 H755 M541 281.5 H544 M546 281.5 H549 M752 281.5 H755 M541 284.5 H544 M546 284.5 H549 M752 284.5 H755 M541 286.5 H544 M546 286.5 H549 M752 286.5 H755 M541 289.5 H544 M546 289.5 H549 M752 289.5 H755 M541 291.5 H544 M546 291.5 H549 M752 291.5 H755 M541 294.5 H544 M546 294.5 H549 M752 294.5 H755 M541 296.5 H544 M546 296.5 H549 M752 296.5 H755 M541 299.5 H544 M546 299.5 H549 M752 299.5 H755 M541 301.5 H544 M546 301.5 H549 M752 301.5 H755 M541 304.5 H544 M546 304.5 H549 M752 304.5 H755 M541 306.5 H544 M546 306.5 H549 M752 306.5 H755 M541 309.5 H544 M546 309.5 H549 M752 309.5 H755 M541 311.5 H544 M546 311.5 H549 M752 311.5 H755 M541 314.5 H544 M546 314.5 H549 M752 314.5 H755 M541 316.5 H544 M546 316.5 H549 M752 316.5 H755 M541 319.5 H544 M546 319.5 H549 M752 319.5 H755 M541 321.5 H544 M546 321.5 H549 M752 321.5 H755 M541 324.5 H544 M546 324.5 H549 M752 324.5 H755 M541 326.5 H544 M546 326.5 H549 M752 326.5 H755 M541 329.5 H544 M546 329.5 H549 M752 329.5 H755 M541 331.5 H544 M546 331.5 H549 M752 331.5 H755 M541 334.5 H544 M546 334.5 H549 M752 334.5 H755 M541 336.5 H544 M546 336.5 H549 M752 336.5 H755 M541 339.5 H544 M546 339.5 H549 M752 339.5 H755 M541 341.5 H544 M546 341.5 H549 M752 341.5 H755 M541 344.5 H544 M546 344.5 H549 M752 344.5 H755 M541 346.5 H544 M546 346.5 H549 M752 346.5 H755 M541 349.5 H544 M546 349.5 H549 M752 349.5 H755 M541 351.5 H544 M546 351.5 H549 M752 351.5 H755 M541 354.5 H544 M546 354.5 H549 M752 354.5 H755 M541 356.5 H544 M546 356.5 H549 M752 356.5 H755 M541 359.5 H544 M546 359.5 H549 M752 359.5 H755 M541 361.5 H544 M546 361.5 H549 M752 361.5 H755 M551.5 169 V171 M551.5 363 V364 M554.5 169 V171 M554.5 363 V364 M557.5 169 V171 M557.5 363 V364 M560.5 169 V171 M560.5 363 V364 M563.5 169 V171 M563.5 363 V364 M566.5 169 V171 M566.5 363 V364 M569.5 169 V171 M569.5 363 V364 M572.5 169 V171 M572.5 363 V364 M575.5 169 V171 M575.5 363 V364 M578.5 169 V171 M578.5 363 V364 M581.5 169 V171 M581.5 363 V364 M584.5 169 V171 M584.5 363 V364 M587.5 169 V171 M587.5 363 V364 M590.5 169 V171 M590.5 363 V364 M593.5 169 V171 M593.5 363 V364 M596.5 169 V171 M596.5 363 V364 M599.5 169 V171 M599.5 363 V364 M602.5 169 V171 M602.5 363 V364 M605.5 169 V171 M605.5 363 V364 M608.5 169 V171 M608.5 363 V364 M611.5 169 V171 M611.5 363 V364 M614.5 169 V171 M614.5 363 V364 M617.5 169 V171 M617.5 363 V364 M620.5 169 V171 M620.5 363 V364 M623.5 169 V171 M623.5 363 V364 M626.5 169 V171 M626.5 363 V364 M629.5 169 V171 M629.5 363 V364 M632.5 169 V171 M632.5 363 V364 M635.5 169 V171 M635.5 363 V364 M638.5 169 V171 M638.5 363 V364 M641.5 169 V171 M641.5 363 V364 M644.5 169 V171 M644.5 363 V364 M647.5 169 V171 M647.5 363 V364 M650.5 169 V171 M650.5 363 V364 M653.5 169 V171 M653.5 363 V364 M656.5 169 V171 M656.5 363 V364 M659.5 169 V171 M659.5 363 V364 M662.5 169 V171 M662.5 363 V364 M665.5 169 V171 M665.5 363 V364 M668.5 169 V171 M668.5 363 V364 M671.5 169 V171 M671.5 363 V364 M674.5 169 V171 M674.5 363 V364 M677.5 169 V171 M677.5 363 V364 M680.5 169 V171 M680.5 363 V364 M683.5 169 V171 M683.5 363 V364 M686.5 169 V171 M686.5 363 V364 M689.5 169 V171 M689.5 363 V364 M692.5 169 V171 M692.5 363 V364 M695.5 169 V171 M695.5 363 V364 M698.5 169 V171 M698.5 363 V364 M701.5 169 V171 M701.5 363 V364 M704.5 169 V171 M704.5 363 V364 M707.5 169 V171 M707.5 363 V364 M710.5 169 V171 M710.5 363 V364 M713.5 169 V171 M713.5 363 V364 M716.5 169 V171 M716.5 363 V364 M719.5 169 V171 M719.5 363 V364 M722.5 169 V171 M722.5 363 V364 M725.5 169 V171 M725.5 363 V364 M728.5 169 V171 M728.5 363 V364 M731.5 169 V171 M731.5 363 V364 M734.5 169 V171 M734.5 363 V364 M737.5 169 V171 M737.5 363 V364 M740.5 169 V171 M740.5 363 V364 M743.5 169 V171 M743.5 363 V364 M746.5 169 V171 M746.5 363 V364 M749.5 169 V171 M749.5 363 V364 M752.5 169 V171 M752.5 363 V364" stroke="#7a7a7a" stroke-width="1" fill="none"/><line x1="541" y1="182.5" x2="755" y2="182.5" stroke="#7a7a7a"/><text x="539" y="185.5" fill="#827e88" font-size="8" text-anchor="end" font-family="Liberation Sans" shape-rendering="auto">-35</text><line x1="541" y1="214.5" x2="755" y2="214.5" stroke="#7a7a7a"/><text x="539" y="217.5" fill="#827e88" font-size="8" text-anchor="end" font-family="Liberation Sans" shape-rendering="auto">-70</text><line x1="541" y1="246.5" x2="755" y2="246.5" stroke="#7a7a7a"/><text x="539" y="249.5" fill="#827e88" font-size="8" text-anchor="end" font-family="Liberation Sans" shape-rendering="auto">-105</text><line x1="541" y1="279.5" x2="755" y2="279.5" stroke="#7a7a7a"/><text x="539" y="282.5" fill="#827e88" font-size="8" text-anchor="end" font-family="Liberation Sans" shape-rendering="auto">-140</text><line x1="541" y1="311.5" x2="755" y2="311.5" stroke="#7a7a7a"/><text x="539" y="314.5" fill="#827e88" font-size="8" text-anchor="end" font-family="Liberation Sans" shape-rendering="auto">-175</text><line x1="541" y1="343.5" x2="755" y2="343.5" stroke="#7a7a7a"/><text x="539" y="346.5" fill="#827e88" font-size="8" text-anchor="end" font-family="Liberation Sans" shape-rendering="auto">-210</text><text x="551" y="374" fill="#827e88" font-size="8" text-anchor="middle" font-family="Liberation Sans" shape-rendering="auto">0</text><line x1="581.5" y1="169" x2="581.5" y2="364" stroke="#7a7a7a"/><text x="581.5" y="374" fill="#827e88" font-size="8" text-anchor="middle" font-family="Liberation Sans" shape-rendering="auto">1400</text><line x1="616.5" y1="169" x2="616.5" y2="364" stroke="#7a7a7a"/><text x="616.5" y="374" fill="#827e88" font-size="8" text-anchor="middle" font-family="Liberation Sans" shape-rendering="auto">2800</text><line x1="650.5" y1="169" x2="650.5" y2="364" stroke="#7a7a7a"/><text x="650.5" y="374" fill="#827e88" font-size="8" text-anchor="middle" font-family="Liberation Sans" shape-rendering="auto">4200</text><line x1="685.5" y1="169" x2="685.5" y2="364" stroke="#7a7a7a"/><text x="685.5" y="374" fill="#827e88" font-size="8" text-anchor="middle" font-family="Liberation Sans" shape-rendering="auto">5600</text><line x1="720.5" y1="169" x2="720.5" y2="364" stroke="#7a7a7a"/><text x="720.5" y="374" fill="#827e88" font-size="8" text-anchor="middle" font-family="Liberation Sans" shape-rendering="auto">7000</text><path d="M550.5 254 V278 M551.5 256 V304 M552.5 258 V327 M553.5 260 V291 M554.5 265 V305 M555.5 262 V330 M556.5 262 V311 M557.5 259 V302 M558.5 251 V294 M559.5 252 V294 M560.5 250 V301 M561.5 252 V313 M562.5 251 V314 M563.5 251 V269 M564.5 256 V323 M565.5 258 V285 M566.5 266 V324 M567.5 263 V324 M568.5 257 V324 M569.5 254 V322 M570.5 254 V314 M571.5 257 V327 M572.5 249 V333 M573.5 247 V333 M574.5 250 V292 M575.5 252 V295 M576.5 255 V293 M577.5 256 V313 M578.5 286 V313 M579.5 262 V314 M580.5 262 V323 M581.5 257 V344 M582.5 253 V279 M583.5 248 V297 M584.5 245 V292 M585.5 245 V286 M586.5 245 V291 M587.5 246 V267 M588.5 246 V299 M589.5 258 V299 M590.5 252 V285 M591.5 254 V316 M592.5 259 V340 M593.5 251 V285 M594.5 251 V319 M595.5 249 V319 M596.5 242 V288 M597.5 242 V280 M598.5 242 V280 M599.5 242 V289 M600.5 243 V277 M601.5 244 V279 M602.5 248 V336 M603.5 252 V299 M604.5 255 V311 M605.5 255 V310 M606.5 244 V329 M607.5 244 V258 M608.5 249 V304 M609.5 236 V287 M610.5 234 V308 M611.5 232 V300 M612.5 232 V277 M613.5 234 V286 M614.5 234 V298 M615.5 237 V310 M616.5 237 V310 M617.5 240 V278 M618.5 240 V296 M619.5 231 V296 M620.5 228 V276 M621.5 230 V279 M622.5 223 V268 M623.5 219 V284 M624.5 219 V284 M625.5 216 V269 M626.5 219 V269 M627.5 217 V271 M628.5 220 V279 M629.5 221 V287 M630.5 240 V287 M631.5 215 V261 M632.5 215 V283 M633.5 215 V262 M634.5 207 V262 M635.5 207 V270 M636.5 198 V279 M637.5 198 V279 M638.5 192 V244 M639.5 187 V218 M640.5 187 V217 M641.5 184 V250 M642.5 185 V225 M643.5 181 V225 M644.5 178 V244 M645.5 189 V237 M646.5 177 V221 M647.5 180 V221 M648.5 180 V215 M649.5 178 V215 M650.5 178 V227 M651.5 184 V242 M652.5 178 V230 M653.5 178 V230 M654.5 178 V238 M655.5 188 V263 M656.5 187 V263 M657.5 182 V231 M658.5 186 V229 M659.5 189 V216 M660.5 190 V254 M661.5 200 V256 M662.5 202 V250 M663.5 204 V241 M664.5 207 V253 M665.5 215 V268 M666.5 214 V271 M667.5 225 V271 M668.5 226 V268 M669.5 219 V253 M670.5 219 V263 M671.5 216 V283 M672.5 217 V281 M673.5 218 V277 M674.5 220 V277 M675.5 220 V269 M676.5 224 V261 M677.5 229 V278 M678.5 231 V288 M679.5 236 V276 M680.5 241 V294 M681.5 239 V294 M682.5 239 V325 M683.5 236 V325 M684.5 239 V290 M685.5 251 V293 M686.5 235 V293 M687.5 238 V281 M688.5 238 V293 M689.5 240 V284 M690.5 239 V278 M691.5 244 V302 M692.5 251 V281 M693.5 255 V305 M694.5 250 V305 M695.5 250 V311 M696.5 243 V308 M697.5 243 V305 M698.5 247 V286 M699.5 241 V285 M700.5 245 V284 M701.5 245 V292 M702.5 248 V294 M703.5 250 V286 M704.5 254 V299 M705.5 254 V314 M706.5 258 V318 M707.5 253 V317 M708.5 253 V298 M709.5 249 V296 M710.5 249 V326 M711.5 245 V326 M712.5 244 V288 M713.5 252 V292 M714.5 252 V259 M715.5 253 V285 M716.5 255 V315 M717.5 259 V344 M718.5 261 V305 M719.5 269 V323 M720.5 258 V323 M721.5 260 V309 M722.5 252 V310 M723.5 249 V326 M724.5 254 V326 M725.5 247 V311 M726.5 247 V299 M727.5 255 V299 M728.5 252 V319 M729.5 255 V319 M730.5 256 V303 M731.5 260 V279 M732.5 265 V327 M733.5 257 V321 M734.5 257 V288 M735.5 258 V277 M736.5 252 V342 M737.5 248 V317 M738.5 248 V302 M739.5 249 V287 M740.5 250 V317 M741.5 256 V317 M742.5 256 V302 M743.5 264 V319 M744.5 264 V319 M745.5 264 V322 M746.5 258 V322 M747.5 261 V302 M748.5 255 V300 M749.5 254 V317 M750.5 250 V313 M751.5 294 V313" stroke="#f4f400" stroke-width="1" fill="none"/><path d="M648.5 230 V360 M641.5 225 V336 M628.5 250 V332 M603.5 262 V318" stroke="#f4f400" stroke-width="1"/><path d="M644.5 232 V290 M652.5 228 V300 M656.5 230 V280" stroke="#000" stroke-width="1"/></svg>
<svg class="a" style="left:216px;top:401px" width="546" height="225" viewBox="216 401 546 225" shape-rendering="crispEdges"><rect x="268.5" y="416.5" width="487" height="195" fill="none" stroke="#7a7a7a" stroke-width="1"/><line x1="279.5" y1="416" x2="279.5" y2="611" stroke="#7a7a7a"/><path d="M268 418.5 H271 M277 418.5 H280 M752 418.5 H755 M268 421.5 H271 M277 421.5 H280 M752 421.5 H755 M268 423.5 H271 M277 423.5 H280 M752 423.5 H755 M268 426.5 H271 M277 426.5 H280 M752 426.5 H755 M268 428.5 H271 M277 428.5 H280 M752 428.5 H755 M268 431.5 H271 M277 431.5 H280 M752 431.5 H755 M268 433.5 H271 M277 433.5 H280 M752 433.5 H755 M268 436.5 H271 M277 436.5 H280 M752 436.5 H755 M268 438.5 H271 M277 438.5 H280 M752 438.5 H755 M268 441.5 H271 M277 441.5 H280 M752 441.5 H755 M268 443.5 H271 M277 443.5 H280 M752 443.5 H755 M268 446.5 H271 M277 446.5 H280 M752 446.5 H755 M268 448.5 H271 M277 448.5 H280 M752 448.5 H755 M268 451.5 H271 M277 451.5 H280 M752 451.5 H755 M268 453.5 H271 M277 453.5 H280 M752 453.5 H755 M268 456.5 H271 M277 456.5 H280 M752 456.5 H755 M268 458.5 H271 M277 458.5 H280 M752 458.5 H755 M268 461.5 H271 M277 461.5 H280 M752 461.5 H755 M268 463.5 H271 M277 463.5 H280 M752 463.5 H755 M268 466.5 H271 M277 466.5 H280 M752 466.5 H755 M268 468.5 H271 M277 468.5 H280 M752 468.5 H755 M268 471.5 H271 M277 471.5 H280 M752 471.5 H755 M268 473.5 H271 M277 473.5 H280 M752 473.5 H755 M268 476.5 H271 M277 476.5 H280 M752 476.5 H755 M268 478.5 H271 M277 478.5 H280 M752 478.5 H755 M268 481.5 H271 M277 481.5 H280 M752 481.5 H755 M268 483.5 H271 M277 483.5 H280 M752 483.5 H755 M268 486.5 H271 M277 486.5 H280 M752 486.5 H755 M268 488.5 H271 M277 488.5 H280 M752 488.5 H755 M268 491.5 H271 M277 491.5 H280 M752 491.5 H755 M268 493.5 H271 M277 493.5 H280 M752 493.5 H755 M268 496.5 H271 M277 496.5 H280 M752 496.5 H755 M268 498.5 H271 M277 498.5 H280 M752 498.5 H755 M268 501.5 H271 M277 501.5 H280 M752 501.5 H755 M268 503.5 H271 M277 503.5 H280 M752 503.5 H755 M268 506.5 H271 M277 506.5 H280 M752 506.5 H755 M268 508.5 H271 M277 508.5 H280 M752 508.5 H755 M268 511.5 H271 M277 511.5 H280 M752 511.5 H755 M268 513.5 H271 M277 513.5 H280 M752 513.5 H755 M268 516.5 H271 M277 516.5 H280 M752 516.5 H755 M268 518.5 H271 M277 518.5 H280 M752 518.5 H755 M268 521.5 H271 M277 521.5 H280 M752 521.5 H755 M268 523.5 H271 M277 523.5 H280 M752 523.5 H755 M268 526.5 H271 M277 526.5 H280 M752 526.5 H755 M268 528.5 H271 M277 528.5 H280 M752 528.5 H755 M268 531.5 H271 M277 531.5 H280 M752 531.5 H755 M268 533.5 H271 M277 533.5 H280 M752 533.5 H755 M268 536.5 H271 M277 536.5 H280 M752 536.5 H755 M268 538.5 H271 M277 538.5 H280 M752 538.5 H755 M268 541.5 H271 M277 541.5 H280 M752 541.5 H755 M268 543.5 H271 M277 543.5 H280 M752 543.5 H755 M268 546.5 H271 M277 546.5 H280 M752 546.5 H755 M268 548.5 H271 M277 548.5 H280 M752 548.5 H755 M268 551.5 H271 M277 551.5 H280 M752 551.5 H755 M268 553.5 H271 M277 553.5 H280 M752 553.5 H755 M268 556.5 H271 M277 556.5 H280 M752 556.5 H755 M268 558.5 H271 M277 558.5 H280 M752 558.5 H755 M268 561.5 H271 M277 561.5 H280 M752 561.5 H755 M268 563.5 H271 M277 563.5 H280 M752 563.5 H755 M268 566.5 H271 M277 566.5 H280 M752 566.5 H755 M268 568.5 H271 M277 568.5 H280 M752 568.5 H755 M268 571.5 H271 M277 571.5 H280 M752 571.5 H755 M268 573.5 H271 M277 573.5 H280 M752 573.5 H755 M268 576.5 H271 M277 576.5 H280 M752 576.5 H755 M268 578.5 H271 M277 578.5 H280 M752 578.5 H755 M268 581.5 H271 M277 581.5 H280 M752 581.5 H755 M268 583.5 H271 M277 583.5 H280 M752 583.5 H755 M268 586.5 H271 M277 586.5 H280 M752 586.5 H755 M268 588.5 H271 M277 588.5 H280 M752 588.5 H755 M268 591.5 H271 M277 591.5 H280 M752 591.5 H755 M268 593.5 H271 M277 593.5 H280 M752 593.5 H755 M268 596.5 H271 M277 596.5 H280 M752 596.5 H755 M268 598.5 H271 M277 598.5 H280 M752 598.5 H755 M268 601.5 H271 M277 601.5 H280 M752 601.5 H755 M268 603.5 H271 M277 603.5 H280 M752 603.5 H755 M268 606.5 H271 M277 606.5 H280 M752 606.5 H755 M268 608.5 H271 M277 608.5 H280 M752 608.5 H755 M282.5 416 V418 M282.5 610 V611 M285.5 416 V418 M285.5 610 V611 M288.5 416 V418 M288.5 610 V611 M291.5 416 V418 M291.5 610 V611 M294.5 416 V418 M294.5 610 V611 M297.5 416 V418 M297.5 610 V611 M300.5 416 V418 M300.5 610 V611 M303.5 416 V418 M303.5 610 V611 M306.5 416 V418 M306.5 610 V611 M309.5 416 V418 M309.5 610 V611 M312.5 416 V418 M312.5 610 V611 M315.5 416 V418 M315.5 610 V611 M318.5 416 V418 M318.5 610 V611 M321.5 416 V418 M321.5 610 V611 M324.5 416 V418 M324.5 610 V611 M327.5 416 V418 M327.5 610 V611 M330.5 416 V418 M330.5 610 V611 M333.5 416 V418 M333.5 610 V611 M336.5 416 V418 M336.5 610 V611 M339.5 416 V418 M339.5 610 V611 M342.5 416 V418 M342.5 610 V611 M345.5 416 V418 M345.5 610 V611 M348.5 416 V418 M348.5 610 V611 M351.5 416 V418 M351.5 610 V611 M354.5 416 V418 M354.5 610 V611 M357.5 416 V418 M357.5 610 V611 M360.5 416 V418 M360.5 610 V611 M363.5 416 V418 M363.5 610 V611 M366.5 416 V418 M366.5 610 V611 M369.5 416 V418 M369.5 610 V611 M372.5 416 V418 M372.5 610 V611 M375.5 416 V418 M375.5 610 V611 M378.5 416 V418 M378.5 610 V611 M381.5 416 V418 M381.5 610 V611 M384.5 416 V418 M384.5 610 V611 M387.5 416 V418 M387.5 610 V611 M390.5 416 V418 M390.5 610 V611 M393.5 416 V418 M393.5 610 V611 M396.5 416 V418 M396.5 610 V611 M399.5 416 V418 M399.5 610 V611 M402.5 416 V418 M402.5 610 V611 M405.5 416 V418 M405.5 610 V611 M408.5 416 V418 M408.5 610 V611 M411.5 416 V418 M411.5 610 V611 M414.5 416 V418 M414.5 610 V611 M417.5 416 V418 M417.5 610 V611 M420.5 416 V418 M420.5 610 V611 M423.5 416 V418 M423.5 610 V611 M426.5 416 V418 M426.5 610 V611 M429.5 416 V418 M429.5 610 V611 M432.5 416 V418 M432.5 610 V611 M435.5 416 V418 M435.5 610 V611 M438.5 416 V418 M438.5 610 V611 M441.5 416 V418 M441.5 610 V611 M444.5 416 V418 M444.5 610 V611 M447.5 416 V418 M447.5 610 V611 M450.5 416 V418 M450.5 610 V611 M453.5 416 V418 M453.5 610 V611 M456.5 416 V418 M456.5 610 V611 M459.5 416 V418 M459.5 610 V611 M462.5 416 V418 M462.5 610 V611 M465.5 416 V418 M465.5 610 V611 M468.5 416 V418 M468.5 610 V611 M471.5 416 V418 M471.5 610 V611 M474.5 416 V418 M474.5 610 V611 M477.5 416 V418 M477.5 610 V611 M480.5 416 V418 M480.5 610 V611 M483.5 416 V418 M483.5 610 V611 M486.5 416 V418 M486.5 610 V611 M489.5 416 V418 M489.5 610 V611 M492.5 416 V418 M492.5 610 V611 M495.5 416 V418 M495.5 610 V611 M498.5 416 V418 M498.5 610 V611 M501.5 416 V418 M501.5 610 V611 M504.5 416 V418 M504.5 610 V611 M507.5 416 V418 M507.5 610 V611 M510.5 416 V418 M510.5 610 V611 M513.5 416 V418 M513.5 610 V611 M516.5 416 V418 M516.5 610 V611 M519.5 416 V418 M519.5 610 V611 M522.5 416 V418 M522.5 610 V611 M525.5 416 V418 M525.5 610 V611 M528.5 416 V418 M528.5 610 V611 M531.5 416 V418 M531.5 610 V611 M534.5 416 V418 M534.5 610 V611 M537.5 416 V418 M537.5 610 V611 M540.5 416 V418 M540.5 610 V611 M543.5 416 V418 M543.5 610 V611 M546.5 416 V418 M546.5 610 V611 M549.5 416 V418 M549.5 610 V611 M552.5 416 V418 M552.5 610 V611 M555.5 416 V418 M555.5 610 V611 M558.5 416 V418 M558.5 610 V611 M561.5 416 V418 M561.5 610 V611 M564.5 416 V418 M564.5 610 V611 M567.5 416 V418 M567.5 610 V611 M570.5 416 V418 M570.5 610 V611 M573.5 416 V418 M573.5 610 V611 M576.5 416 V418 M576.5 610 V611 M579.5 416 V418 M579.5 610 V611 M582.5 416 V418 M582.5 610 V611 M585.5 416 V418 M585.5 610 V611 M588.5 416 V418 M588.5 610 V611 M591.5 416 V418 M591.5 610 V611 M594.5 416 V418 M594.5 610 V611 M597.5 416 V418 M597.5 610 V611 M600.5 416 V418 M600.5 610 V611 M603.5 416 V418 M603.5 610 V611 M606.5 416 V418 M606.5 610 V611 M609.5 416 V418 M609.5 610 V611 M612.5 416 V418 M612.5 610 V611 M615.5 416 V418 M615.5 610 V611 M618.5 416 V418 M618.5 610 V611 M621.5 416 V418 M621.5 610 V611 M624.5 416 V418 M624.5 610 V611 M627.5 416 V418 M627.5 610 V611 M630.5 416 V418 M630.5 610 V611 M633.5 416 V418 M633.5 610 V611 M636.5 416 V418 M636.5 610 V611 M639.5 416 V418 M639.5 610 V611 M642.5 416 V418 M642.5 610 V611 M645.5 416 V418 M645.5 610 V611 M648.5 416 V418 M648.5 610 V611 M651.5 416 V418 M651.5 610 V611 M654.5 416 V418 M654.5 610 V611 M657.5 416 V418 M657.5 610 V611 M660.5 416 V418 M660.5 610 V611 M663.5 416 V418 M663.5 610 V611 M666.5 416 V418 M666.5 610 V611 M669.5 416 V418 M669.5 610 V611 M672.5 416 V418 M672.5 610 V611 M675.5 416 V418 M675.5 610 V611 M678.5 416 V418 M678.5 610 V611 M681.5 416 V418 M681.5 610 V611 M684.5 416 V418 M684.5 610 V611 M687.5 416 V418 M687.5 610 V611 M690.5 416 V418 M690.5 610 V611 M693.5 416 V418 M693.5 610 V611 M696.5 416 V418 M696.5 610 V611 M699.5 416 V418 M699.5 610 V611 M702.5 416 V418 M702.5 610 V611 M705.5 416 V418 M705.5 610 V611 M708.5 416 V418 M708.5 610 V611 M711.5 416 V418 M711.5 610 V611 M714.5 416 V418 M714.5 610 V611 M717.5 416 V418 M717.5 610 V611 M720.5 416 V418 M720.5 610 V611 M723.5 416 V418 M723.5 610 V611 M726.5 416 V418 M726.5 610 V611 M729.5 416 V418 M729.5 610 V611 M732.5 416 V418 M732.5 610 V611 M735.5 416 V418 M735.5 610 V611 M738.5 416 V418 M738.5 610 V611 M741.5 416 V418 M741.5 610 V611 M744.5 416 V418 M744.5 610 V611 M747.5 416 V418 M747.5 610 V611 M750.5 416 V418 M750.5 610 V611" stroke="#7a7a7a" stroke-width="1" fill="none"/><text x="265" y="421" fill="#827e88" font-size="8" text-anchor="end" font-family="Liberation Sans" shape-rendering="auto">1.05</text><line x1="268" y1="450.5" x2="755" y2="450.5" stroke="#7a7a7a"/><text x="265" y="453.5" fill="#827e88" font-size="8" text-anchor="end" font-family="Liberation Sans" shape-rendering="auto">0.7</text><line x1="268" y1="482.5" x2="755" y2="482.5" stroke="#7a7a7a"/><text x="265" y="485.5" fill="#827e88" font-size="8" text-anchor="end" font-family="Liberation Sans" shape-rendering="auto">0.35</text><line x1="268" y1="513.5" x2="755" y2="513.5" stroke="#7a7a7a"/><text x="265" y="516.5" fill="#827e88" font-size="8" text-anchor="end" font-family="Liberation Sans" shape-rendering="auto">0</text><line x1="268" y1="545.5" x2="755" y2="545.5" stroke="#7a7a7a"/><text x="265" y="548.5" fill="#827e88" font-size="8" text-anchor="end" font-family="Liberation Sans" shape-rendering="auto">-0.35</text><line x1="268" y1="577.5" x2="755" y2="577.5" stroke="#7a7a7a"/><text x="265" y="580.5" fill="#827e88" font-size="8" text-anchor="end" font-family="Liberation Sans" shape-rendering="auto">-0.7</text><text x="265" y="612" fill="#827e88" font-size="8" text-anchor="end" font-family="Liberation Sans" shape-rendering="auto">-1.05</text><text x="284" y="622" fill="#827e88" font-size="8" text-anchor="middle" font-family="Liberation Sans" shape-rendering="auto">0</text><line x1="361.5" y1="416" x2="361.5" y2="611" stroke="#7a7a7a"/><text x="361.5" y="622" fill="#827e88" font-size="8" text-anchor="middle" font-family="Liberation Sans" shape-rendering="auto">1400</text><line x1="440.5" y1="416" x2="440.5" y2="611" stroke="#7a7a7a"/><text x="440.5" y="622" fill="#827e88" font-size="8" text-anchor="middle" font-family="Liberation Sans" shape-rendering="auto">2800</text><line x1="519.5" y1="416" x2="519.5" y2="611" stroke="#7a7a7a"/><text x="519.5" y="622" fill="#827e88" font-size="8" text-anchor="middle" font-family="Liberation Sans" shape-rendering="auto">4200</text><line x1="598.5" y1="416" x2="598.5" y2="611" stroke="#7a7a7a"/><text x="598.5" y="622" fill="#827e88" font-size="8" text-anchor="middle" font-family="Liberation Sans" shape-rendering="auto">5600</text><line x1="677.5" y1="416" x2="677.5" y2="611" stroke="#7a7a7a"/><text x="677.5" y="622" fill="#827e88" font-size="8" text-anchor="middle" font-family="Liberation Sans" shape-rendering="auto">7000</text><rect x="280" y="421" width="464" height="186" fill="#00e400"/><path d="M282.5 514 V607 M286.5 421 V514 M287.5 421 V514 M288.5 421 V514 M288.5 514 V607 M289.5 421 V514 M292.5 514 V607 M295.5 514 V607 M297.5 421 V514 M298.5 421 V514 M298.5 514 V607 M302.5 421 V514 M303.5 514 V607 M304.5 421 V514 M307.5 421 V514 M308.5 514 V607 M309.5 421 V514 M310.5 421 V514 M310.5 514 V607 M311.5 514 V607 M313.5 421 V514 M313.5 514 V607 M314.5 514 V607 M315.5 421 V514 M317.5 514 V607 M320.5 514 V607 M321.5 421 V514 M321.5 514 V607 M325.5 421 V514 M325.5 514 V607 M326.5 514 V607 M327.5 514 V607 M328.5 514 V607 M331.5 514 V607 M336.5 514 V607 M338.5 421 V514 M340.5 421 V514 M341.5 421 V514 M341.5 514 V607 M342.5 421 V514 M342.5 514 V607 M343.5 514 V607 M344.5 421 V514 M344.5 514 V607 M347.5 421 V514 M347.5 514 V607 M351.5 421 V514 M351.5 514 V607 M352.5 421 V514 M353.5 514 V607 M356.5 421 V514 M356.5 514 V607 M357.5 421 V514 M357.5 514 V607 M360.5 514 V607 M361.5 421 V514 M362.5 514 V607 M364.5 514 V607 M365.5 421 V514 M365.5 514 V607 M366.5 421 V514 M366.5 514 V607 M370.5 421 V514 M373.5 421 V514 M374.5 421 V514 M374.5 514 V607 M375.5 421 V514 M378.5 421 V514 M384.5 421 V514 M391.5 421 V514 M394.5 514 V607 M395.5 421 V514 M398.5 421 V514 M398.5 514 V607 M400.5 421 V514 M404.5 514 V607 M405.5 421 V514 M406.5 421 V514 M406.5 514 V607 M408.5 514 V607 M409.5 514 V607 M411.5 514 V607 M416.5 514 V607 M417.5 514 V607 M420.5 421 V514 M421.5 421 V514 M422.5 421 V514 M422.5 514 V607 M424.5 421 V514 M425.5 421 V514 M428.5 421 V514 M428.5 514 V607 M429.5 421 V514 M430.5 514 V607 M431.5 514 V607 M433.5 514 V607 M435.5 514 V607 M440.5 421 V514 M441.5 514 V607 M442.5 514 V607 M444.5 514 V607 M445.5 514 V607 M446.5 514 V607 M447.5 421 V514 M449.5 421 V514 M451.5 421 V514 M451.5 514 V607 M452.5 421 V514 M453.5 514 V607 M454.5 421 V514 M454.5 514 V607 M455.5 514 V607 M456.5 514 V607 M457.5 514 V607 M459.5 421 V514 M459.5 514 V607 M460.5 514 V607 M461.5 421 V514 M461.5 514 V607 M463.5 421 V514 M466.5 514 V607 M468.5 421 V514 M472.5 514 V607 M473.5 421 V514 M473.5 514 V607 M477.5 514 V607 M478.5 421 V514 M480.5 421 V514 M481.5 421 V514 M482.5 421 V514 M482.5 514 V607 M492.5 514 V607 M493.5 514 V607 M497.5 421 V514 M497.5 514 V607 M498.5 421 V514 M503.5 421 V514 M504.5 421 V514 M508.5 421 V514 M509.5 421 V514 M509.5 514 V607 M511.5 514 V607 M512.5 514 V607 M516.5 421 V514 M518.5 421 V514 M520.5 421 V514 M524.5 421 V514 M528.5 421 V514 M529.5 514 V607 M532.5 514 V607 M533.5 514 V607 M535.5 514 V607 M536.5 421 V514 M537.5 421 V514 M538.5 421 V514 M541.5 421 V514 M543.5 421 V514 M544.5 421 V514 M544.5 514 V607 M545.5 421 V514 M545.5 514 V607 M547.5 421 V514 M550.5 514 V607 M551.5 514 V607 M552.5 421 V514 M552.5 514 V607 M553.5 421 V514 M553.5 514 V607 M555.5 514 V607 M559.5 421 V514 M561.5 421 V514 M564.5 514 V607 M566.5 421 V514 M567.5 514 V607 M568.5 514 V607 M575.5 421 V514 M576.5 421 V514 M577.5 514 V607 M578.5 421 V514 M579.5 421 V514 M579.5 514 V607 M580.5 514 V607 M582.5 514 V607 M585.5 514 V607 M586.5 421 V514 M586.5 514 V607 M587.5 421 V514 M588.5 514 V607 M590.5 514 V607 M591.5 514 V607 M592.5 514 V607 M593.5 421 V514 M593.5 514 V607 M596.5 514 V607 M600.5 421 V514 M601.5 421 V514 M602.5 421 V514 M604.5 514 V607 M606.5 421 V514 M606.5 514 V607 M607.5 514 V607 M610.5 421 V514 M620.5 514 V607 M621.5 421 V514 M621.5 514 V607 M622.5 421 V514 M622.5 514 V607 M624.5 514 V607 M626.5 514 V607 M628.5 421 V514 M628.5 514 V607 M629.5 514 V607 M630.5 514 V607 M631.5 421 V514 M634.5 421 V514 M635.5 421 V514 M637.5 514 V607 M638.5 421 V514 M641.5 514 V607 M645.5 421 V514 M648.5 514 V607 M649.5 514 V607 M652.5 421 V514 M659.5 421 V514 M659.5 514 V607 M662.5 421 V514 M664.5 514 V607 M666.5 514 V607 M668.5 514 V607 M669.5 421 V514 M673.5 421 V514 M674.5 514 V607 M676.5 514 V607 M677.5 421 V514 M678.5 514 V607 M684.5 421 V514 M685.5 514 V607 M686.5 421 V514 M686.5 514 V607 M687.5 514 V607 M688.5 421 V514 M689.5 514 V607 M690.5 421 V514 M695.5 421 V514 M698.5 514 V607 M700.5 421 V514 M701.5 421 V514 M703.5 421 V514 M703.5 514 V607 M706.5 514 V607 M707.5 421 V514 M708.5 421 V514 M708.5 514 V607 M713.5 514 V607 M714.5 514 V607 M716.5 421 V514 M721.5 421 V514 M722.5 421 V514 M726.5 514 V607 M729.5 421 V514 M729.5 514 V607 M731.5 421 V514 M731.5 514 V607 M734.5 421 V514 M734.5 514 V607 M737.5 514 V607 M738.5 514 V607 M739.5 514 V607 M740.5 421 V514 M740.5 514 V607 M741.5 514 V607 M743.5 421 V514" stroke="#f0f000" stroke-width="1"/><path d="M281.5 605 V608 M282.5 420 V423 M283.5 603 V608 M286.5 420 V424 M288.5 420 V514 M289.5 543 V608 M290.5 420 V422 M292.5 420 V421 M294.5 606 V608 M297.5 605 V608 M298.5 591 V608 M301.5 420 V423 M304.5 420 V423 M305.5 420 V423 M306.5 420 V512 M307.5 605 V608 M308.5 420 V441 M310.5 420 V505 M311.5 589 V608 M312.5 420 V423 M314.5 420 V446 M314.5 571 V608 M316.5 420 V514 M317.5 420 V471 M317.5 605 V608 M320.5 604 V608 M322.5 420 V514 M323.5 420 V424 M326.5 420 V479 M327.5 420 V421 M330.5 420 V423 M332.5 420 V422 M332.5 520 V608 M333.5 420 V421 M335.5 420 V423 M340.5 605 V608 M342.5 420 V423 M343.5 420 V424 M344.5 606 V608 M346.5 420 V470 M346.5 550 V608 M348.5 420 V424 M348.5 605 V608 M349.5 420 V424 M350.5 420 V423 M351.5 420 V421 M351.5 605 V608 M354.5 606 V608 M355.5 603 V608 M356.5 420 V424 M356.5 571 V608 M357.5 420 V424 M357.5 592 V608 M358.5 420 V441 M358.5 606 V608 M363.5 420 V424 M364.5 604 V608 M365.5 603 V608 M368.5 420 V514 M368.5 603 V608 M370.5 520 V608 M371.5 420 V457 M372.5 420 V423 M372.5 605 V608 M373.5 605 V608 M375.5 603 V608 M376.5 420 V473 M377.5 420 V514 M378.5 519 V608 M381.5 420 V445 M382.5 604 V608 M383.5 420 V422 M384.5 603 V608 M385.5 420 V422 M388.5 420 V423 M389.5 606 V608 M390.5 605 V608 M391.5 539 V608 M394.5 585 V608 M396.5 420 V423 M396.5 549 V608 M397.5 420 V423 M397.5 585 V608 M399.5 596 V608 M400.5 534 V608 M402.5 420 V513 M404.5 566 V608 M406.5 420 V422 M409.5 606 V608 M410.5 420 V424 M411.5 604 V608 M413.5 605 V608 M417.5 420 V454 M419.5 603 V608 M420.5 420 V424 M420.5 605 V608 M421.5 420 V514 M423.5 420 V422 M423.5 605 V608 M424.5 420 V421 M429.5 420 V421 M429.5 580 V608 M433.5 606 V608 M434.5 605 V608 M436.5 606 V608 M438.5 605 V608 M441.5 420 V422 M443.5 420 V422 M444.5 420 V494 M445.5 604 V608 M448.5 420 V499 M449.5 420 V490 M450.5 420 V423 M451.5 420 V421 M451.5 596 V608 M452.5 568 V608 M454.5 605 V608 M456.5 601 V608 M458.5 586 V608 M460.5 603 V608 M461.5 420 V424 M462.5 604 V608 M463.5 420 V421 M463.5 603 V608 M464.5 603 V608 M465.5 420 V498 M466.5 604 V608 M467.5 420 V514 M468.5 420 V497 M468.5 560 V608 M470.5 420 V424 M472.5 569 V608 M473.5 605 V608 M474.5 598 V608 M475.5 420 V505 M476.5 420 V460 M476.5 601 V608 M477.5 420 V422 M478.5 420 V421 M478.5 606 V608 M479.5 603 V608 M481.5 420 V423 M482.5 420 V422 M483.5 420 V514 M483.5 542 V608 M484.5 606 V608 M485.5 420 V514 M486.5 603 V608 M488.5 605 V608 M489.5 605 V608 M492.5 420 V472 M492.5 606 V608 M494.5 605 V608 M496.5 604 V608 M498.5 603 V608 M499.5 605 V608 M501.5 420 V422 M501.5 537 V608 M502.5 592 V608 M505.5 420 V501 M505.5 595 V608 M506.5 605 V608 M507.5 420 V474 M507.5 606 V608 M511.5 420 V508 M511.5 605 V608 M513.5 420 V423 M515.5 420 V502 M518.5 420 V423 M518.5 604 V608 M519.5 420 V424 M520.5 585 V608 M521.5 606 V608 M522.5 420 V423 M522.5 603 V608 M523.5 604 V608 M525.5 599 V608 M527.5 517 V608 M528.5 420 V424 M528.5 550 V608 M530.5 604 V608 M531.5 605 V608 M532.5 420 V514 M535.5 420 V422 M536.5 420 V422 M537.5 603 V608 M538.5 420 V423 M539.5 420 V422 M539.5 606 V608 M544.5 594 V608 M545.5 603 V608 M547.5 572 V608 M548.5 603 V608 M552.5 603 V608 M553.5 420 V514 M554.5 420 V471 M554.5 527 V608 M556.5 420 V514 M557.5 420 V421 M558.5 420 V422 M559.5 420 V424 M559.5 605 V608 M560.5 420 V470 M561.5 524 V608 M562.5 420 V424 M564.5 420 V457 M565.5 606 V608 M568.5 605 V608 M569.5 420 V423 M569.5 603 V608 M571.5 573 V608 M572.5 599 V608 M574.5 420 V511 M575.5 420 V514 M575.5 523 V608 M576.5 420 V514 M577.5 420 V421 M580.5 602 V608 M581.5 420 V421 M581.5 547 V608 M582.5 420 V421 M583.5 420 V423 M584.5 420 V480 M584.5 604 V608 M585.5 603 V608 M586.5 571 V608 M588.5 420 V422 M589.5 420 V422 M590.5 604 V608 M591.5 420 V424 M592.5 420 V510 M594.5 574 V608 M595.5 420 V479 M597.5 420 V472 M597.5 605 V608 M598.5 576 V608 M600.5 420 V424 M602.5 420 V423 M604.5 420 V481 M606.5 603 V608 M607.5 420 V478 M611.5 573 V608 M612.5 420 V514 M613.5 594 V608 M614.5 420 V514 M615.5 568 V608 M618.5 420 V423 M619.5 420 V423 M619.5 606 V608 M620.5 586 V608 M621.5 604 V608 M622.5 526 V608 M623.5 420 V490 M623.5 603 V608 M624.5 568 V608 M625.5 420 V421 M626.5 420 V474 M626.5 606 V608 M627.5 420 V421 M628.5 420 V424 M629.5 420 V421 M631.5 420 V499 M632.5 592 V608 M633.5 420 V422 M634.5 420 V503 M635.5 600 V608 M637.5 605 V608 M638.5 562 V608 M639.5 603 V608 M640.5 420 V422 M642.5 606 V608 M644.5 420 V464 M646.5 603 V608 M647.5 420 V423 M649.5 420 V422 M650.5 604 V608 M653.5 420 V421 M655.5 420 V455 M655.5 562 V608 M656.5 420 V510 M659.5 420 V422 M660.5 420 V421 M660.5 604 V608 M661.5 420 V514 M661.5 603 V608 M663.5 603 V608 M664.5 420 V488 M665.5 604 V608 M668.5 420 V514 M669.5 420 V422 M671.5 420 V440 M672.5 420 V422 M673.5 420 V424 M674.5 420 V423 M677.5 420 V491 M679.5 603 V608 M680.5 420 V513 M681.5 603 V608 M682.5 605 V608 M685.5 604 V608 M686.5 420 V423 M686.5 548 V608 M688.5 537 V608 M689.5 420 V447 M690.5 420 V422 M691.5 603 V608 M692.5 420 V422 M694.5 420 V514 M695.5 420 V511 M695.5 603 V608 M698.5 420 V424 M698.5 603 V608 M700.5 603 V608 M702.5 420 V476 M702.5 588 V608 M703.5 603 V608 M706.5 605 V608 M707.5 596 V608 M708.5 573 V608 M709.5 420 V423 M709.5 604 V608 M710.5 604 V608 M713.5 420 V514 M714.5 420 V423 M715.5 420 V424 M716.5 606 V608 M717.5 420 V423 M718.5 420 V466 M719.5 604 V608 M721.5 420 V510 M722.5 420 V476 M722.5 603 V608 M723.5 420 V514 M724.5 420 V422 M724.5 604 V608 M726.5 420 V424 M726.5 604 V608 M727.5 420 V421 M729.5 420 V460 M729.5 605 V608 M730.5 603 V608 M731.5 420 V485 M731.5 597 V608 M732.5 420 V421 M733.5 420 V421 M734.5 420 V424 M735.5 603 V608 M736.5 603 V608 M737.5 420 V502 M738.5 420 V514 M738.5 603 V608 M740.5 522 V608 M741.5 420 V424 M741.5 596 V608 M743.5 603 V608" stroke="#000" stroke-width="1"/></svg>
<svg class="a" style="left:768px;top:154px" width="362" height="140" viewBox="768 154 362 140" shape-rendering="crispEdges"><rect x="796.5" y="163.5" width="329" height="122" fill="none" stroke="#7a7a7a" stroke-width="1"/><line x1="804.5" y1="163" x2="804.5" y2="285" stroke="#7a7a7a"/><path d="M796 165.5 H799 M802 165.5 H805 M1122 165.5 H1125 M796 168.5 H799 M802 168.5 H805 M1122 168.5 H1125 M796 170.5 H799 M802 170.5 H805 M1122 170.5 H1125 M796 173.5 H799 M802 173.5 H805 M1122 173.5 H1125 M796 175.5 H799 M802 175.5 H805 M1122 175.5 H1125 M796 178.5 H799 M802 178.5 H805 M1122 178.5 H1125 M796 180.5 H799 M802 180.5 H805 M1122 180.5 H1125 M796 183.5 H799 M802 183.5 H805 M1122 183.5 H1125 M796 185.5 H799 M802 185.5 H805 M1122 185.5 H1125 M796 188.5 H799 M802 188.5 H805 M1122 188.5 H1125 M796 190.5 H799 M802 190.5 H805 M1122 190.5 H1125 M796 193.5 H799 M802 193.5 H805 M1122 193.5 H1125 M796 195.5 H799 M802 195.5 H805 M1122 195.5 H1125 M796 198.5 H799 M802 198.5 H805 M1122 198.5 H1125 M796 200.5 H799 M802 200.5 H805 M1122 200.5 H1125 M796 203.5 H799 M802 203.5 H805 M1122 203.5 H1125 M796 205.5 H799 M802 205.5 H805 M1122 205.5 H1125 M796 208.5 H799 M802 208.5 H805 M1122 208.5 H1125 M796 210.5 H799 M802 210.5 H805 M1122 210.5 H1125 M796 213.5 H799 M802 213.5 H805 M1122 213.5 H1125 M796 215.5 H799 M802 215.5 H805 M1122 215.5 H1125 M796 218.5 H799 M802 218.5 H805 M1122 218.5 H1125 M796 220.5 H799 M802 220.5 H805 M1122 220.5 H1125 M796 223.5 H799 M802 223.5 H805 M1122 223.5 H1125 M796 225.5 H799 M802 225.5 H805 M1122 225.5 H1125 M796 228.5 H799 M802 228.5 H805 M1122 228.5 H1125 M796 230.5 H799 M802 230.5 H805 M1122 230.5 H1125 M796 233.5 H799 M802 233.5 H805 M1122 233.5 H1125 M796 235.5 H799 M802 235.5 H805 M1122 235.5 H1125 M796 238.5 H799 M802 238.5 H805 M1122 238.5 H1125 M796 240.5 H799 M802 240.5 H805 M1122 240.5 H1125 M796 243.5 H799 M802 243.5 H805 M1122 243.5 H1125 M796 245.5 H799 M802 245.5 H805 M1122 245.5 H1125 M796 248.5 H799 M802 248.5 H805 M1122 248.5 H1125 M796 250.5 H799 M802 250.5 H805 M1122 250.5 H1125 M796 253.5 H799 M802 253.5 H805 M1122 253.5 H1125 M796 255.5 H799 M802 255.5 H805 M1122 255.5 H1125 M796 258.5 H799 M802 258.5 H805 M1122 258.5 H1125 M796 260.5 H799 M802 260.5 H805 M1122 260.5 H1125 M796 263.5 H799 M802 263.5 H805 M1122 263.5 H1125 M796 265.5 H799 M802 265.5 H805 M1122 265.5 H1125 M796 268.5 H799 M802 268.5 H805 M1122 268.5 H1125 M796 270.5 H799 M802 270.5 H805 M1122 270.5 H1125 M796 273.5 H799 M802 273.5 H805 M1122 273.5 H1125 M796 275.5 H799 M802 275.5 H805 M1122 275.5 H1125 M796 278.5 H799 M802 278.5 H805 M1122 278.5 H1125 M796 280.5 H799 M802 280.5 H805 M1122 280.5 H1125 M796 283.5 H799 M802 283.5 H805 M1122 283.5 H1125 M807.5 163 V165 M807.5 284 V285 M810.5 163 V165 M810.5 284 V285 M813.5 163 V165 M813.5 284 V285 M816.5 163 V165 M816.5 284 V285 M819.5 163 V165 M819.5 284 V285 M822.5 163 V165 M822.5 284 V285 M825.5 163 V165 M825.5 284 V285 M828.5 163 V165 M828.5 284 V285 M831.5 163 V165 M831.5 284 V285 M834.5 163 V165 M834.5 284 V285 M837.5 163 V165 M837.5 284 V285 M840.5 163 V165 M840.5 284 V285 M843.5 163 V165 M843.5 284 V285 M846.5 163 V165 M846.5 284 V285 M849.5 163 V165 M849.5 284 V285 M852.5 163 V165 M852.5 284 V285 M855.5 163 V165 M855.5 284 V285 M858.5 163 V165 M858.5 284 V285 M861.5 163 V165 M861.5 284 V285 M864.5 163 V165 M864.5 284 V285 M867.5 163 V165 M867.5 284 V285 M870.5 163 V165 M870.5 284 V285 M873.5 163 V165 M873.5 284 V285 M876.5 163 V165 M876.5 284 V285 M879.5 163 V165 M879.5 284 V285 M882.5 163 V165 M882.5 284 V285 M885.5 163 V165 M885.5 284 V285 M888.5 163 V165 M888.5 284 V285 M891.5 163 V165 M891.5 284 V285 M894.5 163 V165 M894.5 284 V285 M897.5 163 V165 M897.5 284 V285 M900.5 163 V165 M900.5 284 V285 M903.5 163 V165 M903.5 284 V285 M906.5 163 V165 M906.5 284 V285 M909.5 163 V165 M909.5 284 V285 M912.5 163 V165 M912.5 284 V285 M915.5 163 V165 M915.5 284 V285 M918.5 163 V165 M918.5 284 V285 M921.5 163 V165 M921.5 284 V285 M924.5 163 V165 M924.5 284 V285 M927.5 163 V165 M927.5 284 V285 M930.5 163 V165 M930.5 284 V285 M933.5 163 V165 M933.5 284 V285 M936.5 163 V165 M936.5 284 V285 M939.5 163 V165 M939.5 284 V285 M942.5 163 V165 M942.5 284 V285 M945.5 163 V165 M945.5 284 V285 M948.5 163 V165 M948.5 284 V285 M951.5 163 V165 M951.5 284 V285 M954.5 163 V165 M954.5 284 V285 M957.5 163 V165 M957.5 284 V285 M960.5 163 V165 M960.5 284 V285 M963.5 163 V165 M963.5 284 V285 M966.5 163 V165 M966.5 284 V285 M969.5 163 V165 M969.5 284 V285 M972.5 163 V165 M972.5 284 V285 M975.5 163 V165 M975.5 284 V285 M978.5 163 V165 M978.5 284 V285 M981.5 163 V165 M981.5 284 V285 M984.5 163 V165 M984.5 284 V285 M987.5 163 V165 M987.5 284 V285 M990.5 163 V165 M990.5 284 V285 M993.5 163 V165 M993.5 284 V285 M996.5 163 V165 M996.5 284 V285 M999.5 163 V165 M999.5 284 V285 M1002.5 163 V165 M1002.5 284 V285 M1005.5 163 V165 M1005.5 284 V285 M1008.5 163 V165 M1008.5 284 V285 M1011.5 163 V165 M1011.5 284 V285 M1014.5 163 V165 M1014.5 284 V285 M1017.5 163 V165 M1017.5 284 V285 M1020.5 163 V165 M1020.5 284 V285 M1023.5 163 V165 M1023.5 284 V285 M1026.5 163 V165 M1026.5 284 V285 M1029.5 163 V165 M1029.5 284 V285 M1032.5 163 V165 M1032.5 284 V285 M1035.5 163 V165 M1035.5 284 V285 M1038.5 163 V165 M1038.5 284 V285 M1041.5 163 V165 M1041.5 284 V285 M1044.5 163 V165 M1044.5 284 V285 M1047.5 163 V165 M1047.5 284 V285 M1050.5 163 V165 M1050.5 284 V285 M1053.5 163 V165 M1053.5 284 V285 M1056.5 163 V165 M1056.5 284 V285 M1059.5 163 V165 M1059.5 284 V285 M1062.5 163 V165 M1062.5 284 V285 M1065.5 163 V165 M1065.5 284 V285 M1068.5 163 V165 M1068.5 284 V285 M1071.5 163 V165 M1071.5 284 V285 M1074.5 163 V165 M1074.5 284 V285 M1077.5 163 V165 M1077.5 284 V285 M1080.5 163 V165 M1080.5 284 V285 M1083.5 163 V165 M1083.5 284 V285 M1086.5 163 V165 M1086.5 284 V285 M1089.5 163 V165 M1089.5 284 V285 M1092.5 163 V165 M1092.5 284 V285 M1095.5 163 V165 M1095.5 284 V285 M1098.5 163 V165 M1098.5 284 V285 M1101.5 163 V165 M1101.5 284 V285 M1104.5 163 V165 M1104.5 284 V285 M1107.5 163 V165 M1107.5 284 V285 M1110.5 163 V165 M1110.5 284 V285 M1113.5 163 V165 M1113.5 284 V285 M1116.5 163 V165 M1116.5 284 V285 M1119.5 163 V165 M1119.5 284 V285 M1122.5 163 V165 M1122.5 284 V285" stroke="#7a7a7a" stroke-width="1" fill="none"/><line x1="796" y1="181.5" x2="1125" y2="181.5" stroke="#7a7a7a"/><text x="793" y="184" fill="#827e88" font-size="6" text-anchor="end" font-family="Liberation Sans" shape-rendering="auto">2.4</text><line x1="796" y1="201.5" x2="1125" y2="201.5" stroke="#7a7a7a"/><text x="793" y="204" fill="#827e88" font-size="6" text-anchor="end" font-family="Liberation Sans" shape-rendering="auto">1.92</text><line x1="796" y1="222.5" x2="1125" y2="222.5" stroke="#7a7a7a"/><text x="793" y="225" fill="#827e88" font-size="6" text-anchor="end" font-family="Liberation Sans" shape-rendering="auto">1.44</text><line x1="796" y1="242.5" x2="1125" y2="242.5" stroke="#7a7a7a"/><text x="793" y="245" fill="#827e88" font-size="6" text-anchor="end" font-family="Liberation Sans" shape-rendering="auto">0.96</text><line x1="796" y1="262.5" x2="1125" y2="262.5" stroke="#7a7a7a"/><text x="793" y="265" fill="#827e88" font-size="6" text-anchor="end" font-family="Liberation Sans" shape-rendering="auto">0.48</text><text x="793" y="286" fill="#827e88" font-size="6" text-anchor="end" font-family="Liberation Sans" shape-rendering="auto">0</text><line x1="857.5" y1="163" x2="857.5" y2="285" stroke="#7a7a7a"/><line x1="910.5" y1="163" x2="910.5" y2="285" stroke="#7a7a7a"/><line x1="964.5" y1="163" x2="964.5" y2="285" stroke="#7a7a7a"/><line x1="1017.5" y1="163" x2="1017.5" y2="285" stroke="#7a7a7a"/><line x1="1070.5" y1="163" x2="1070.5" y2="285" stroke="#7a7a7a"/><text x="806" y="293" fill="#827e88" font-size="6" text-anchor="middle" font-family="Liberation Sans" shape-rendering="auto">0</text><text x="858" y="293" fill="#827e88" font-size="6" text-anchor="middle" font-family="Liberation Sans" shape-rendering="auto">170</text><text x="911" y="293" fill="#827e88" font-size="6" text-anchor="middle" font-family="Liberation Sans" shape-rendering="auto">340</text><text x="965" y="293" fill="#827e88" font-size="6" text-anchor="middle" font-family="Liberation Sans" shape-rendering="auto">510</text><text x="1018" y="293" fill="#827e88" font-size="6" text-anchor="middle" font-family="Liberation Sans" shape-rendering="auto">680</text><text x="1071" y="293" fill="#827e88" font-size="6" text-anchor="middle" font-family="Liberation Sans" shape-rendering="auto">850</text><text x="1122" y="293" fill="#827e88" font-size="6" text-anchor="middle" font-family="Liberation Sans" shape-rendering="auto">1020</text><path d="M805.5 253 V270 M806.5 253 V279 M807.5 260 V279 M808.5 255 V279 M809.5 230 V283 M810.5 230 V275 M811.5 253 V282 M812.5 262 V282 M813.5 229 V277 M814.5 231 V274 M815.5 238 V274 M816.5 241 V277 M817.5 256 V280 M818.5 249 V281 M819.5 248 V282 M820.5 248 V282 M821.5 238 V276 M822.5 238 V281 M823.5 256 V281 M824.5 253 V272 M825.5 260 V281 M826.5 265 V281 M827.5 246 V282 M828.5 246 V278 M829.5 248 V276 M830.5 215 V276 M831.5 215 V277 M832.5 235 V280 M833.5 246 V280 M834.5 246 V281 M835.5 245 V280 M836.5 248 V280 M837.5 266 V275 M838.5 243 V281 M839.5 241 V268 M840.5 241 V267 M841.5 241 V274 M842.5 254 V274 M843.5 254 V283 M844.5 257 V281 M845.5 257 V281 M846.5 251 V281 M847.5 255 V279 M848.5 247 V280 M849.5 247 V280 M850.5 257 V278 M851.5 257 V282 M852.5 261 V282 M853.5 261 V275 M854.5 260 V281 M855.5 236 V272 M856.5 236 V278 M857.5 254 V282 M858.5 254 V282 M859.5 254 V268 M860.5 255 V273 M861.5 259 V283 M862.5 259 V283 M863.5 262 V283 M864.5 254 V273 M865.5 205 V275 M866.5 205 V282 M867.5 256 V282 M868.5 253 V269 M869.5 231 V275 M870.5 231 V275 M871.5 261 V275 M872.5 233 V274 M873.5 233 V267 M874.5 251 V269 M875.5 258 V275 M876.5 253 V275 M877.5 213 V282 M878.5 213 V270 M879.5 245 V282 M880.5 252 V281 M881.5 248 V281 M882.5 259 V272 M883.5 259 V274 M884.5 249 V275 M885.5 249 V277 M886.5 249 V278 M887.5 252 V282 M888.5 212 V282 M889.5 220 V265 M890.5 220 V275 M891.5 233 V277 M892.5 233 V282 M893.5 254 V282 M894.5 243 V274 M895.5 237 V280 M896.5 251 V280 M897.5 251 V277 M898.5 230 V277 M899.5 220 V254 M900.5 219 V270 M901.5 219 V281 M902.5 243 V281 M903.5 243 V268 M904.5 242 V274 M905.5 266 V282 M906.5 241 V283 M907.5 247 V283 M908.5 221 V272 M909.5 237 V283 M910.5 237 V282 M911.5 241 V278 M912.5 241 V278 M913.5 231 V279 M914.5 260 V279 M915.5 260 V279 M916.5 251 V281 M917.5 261 V282 M918.5 265 V282 M919.5 254 V268 M920.5 229 V269 M921.5 229 V273 M922.5 220 V271 M923.5 220 V278 M924.5 254 V271 M925.5 263 V273 M926.5 253 V275 M927.5 253 V278 M928.5 257 V281 M929.5 245 V277 M930.5 238 V274 M931.5 238 V278 M932.5 242 V278 M933.5 248 V282 M934.5 248 V282 M935.5 234 V282 M936.5 234 V276 M937.5 257 V283 M938.5 261 V283 M939.5 249 V278 M940.5 249 V282 M941.5 199 V282 M942.5 199 V282 M943.5 254 V282 M944.5 250 V279 M945.5 250 V277 M946.5 228 V280 M947.5 233 V280 M948.5 249 V272 M949.5 237 V274 M950.5 237 V272 M951.5 238 V280 M952.5 249 V280 M953.5 243 V281 M954.5 243 V281 M955.5 251 V280 M956.5 252 V278 M957.5 233 V271 M958.5 233 V278 M959.5 249 V282 M960.5 259 V282 M961.5 259 V279 M962.5 259 V283 M963.5 224 V265 M964.5 215 V274 M965.5 215 V269 M966.5 259 V282 M967.5 226 V278 M968.5 252 V281 M969.5 222 V281 M970.5 222 V271 M971.5 255 V277 M972.5 251 V277 M973.5 236 V272 M974.5 236 V282 M975.5 271 V282 M976.5 267 V282 M977.5 267 V277 M978.5 241 V277 M979.5 226 V280 M980.5 225 V280 M981.5 225 V269 M982.5 245 V275 M983.5 245 V278 M984.5 255 V278 M985.5 254 V277 M986.5 254 V277 M987.5 254 V281 M988.5 250 V281 M989.5 230 V281 M990.5 199 V270 M991.5 199 V275 M992.5 186 V275 M993.5 186 V272 M994.5 242 V279 M995.5 249 V281 M996.5 258 V281 M997.5 249 V278 M998.5 249 V280 M999.5 218 V276 M1000.5 240 V280 M1001.5 240 V280 M1002.5 208 V281 M1003.5 190 V271 M1004.5 227 V280 M1005.5 218 V268 M1006.5 235 V280 M1007.5 253 V280 M1008.5 246 V276 M1009.5 255 V277 M1010.5 255 V279 M1011.5 261 V279 M1012.5 261 V280 M1013.5 250 V281 M1014.5 250 V281 M1015.5 207 V283 M1016.5 261 V283 M1017.5 249 V281 M1018.5 221 V283 M1019.5 221 V275 M1020.5 272 V280 M1021.5 236 V279 M1022.5 250 V277 M1023.5 261 V277 M1024.5 240 V275 M1025.5 226 V275 M1026.5 222 V273 M1027.5 222 V273 M1028.5 244 V267 M1029.5 231 V278 M1030.5 244 V278 M1031.5 251 V283 M1032.5 244 V283 M1033.5 247 V274 M1034.5 221 V282 M1035.5 210 V282 M1036.5 210 V277 M1037.5 252 V281 M1038.5 242 V279 M1039.5 242 V272 M1040.5 253 V272 M1041.5 221 V282 M1042.5 221 V282 M1043.5 257 V282 M1044.5 230 V273 M1045.5 230 V271 M1046.5 240 V281 M1047.5 240 V280 M1048.5 257 V275 M1049.5 229 V277 M1050.5 229 V274 M1051.5 230 V279 M1052.5 230 V272 M1053.5 243 V272 M1054.5 240 V272 M1055.5 221 V271 M1056.5 221 V266 M1057.5 197 V277 M1058.5 235 V277 M1059.5 239 V277 M1060.5 235 V278 M1061.5 228 V281 M1062.5 228 V275 M1063.5 243 V277 M1064.5 256 V275 M1065.5 230 V275 M1066.5 217 V282 M1067.5 217 V282 M1068.5 233 V277 M1069.5 233 V281 M1070.5 246 V281 M1071.5 215 V276 M1072.5 215 V272 M1073.5 242 V274 M1074.5 242 V276 M1075.5 248 V276 M1076.5 241 V276 M1077.5 241 V283 M1078.5 243 V282 M1079.5 239 V277 M1080.5 205 V255 M1081.5 230 V270 M1082.5 239 V279 M1083.5 250 V279 M1084.5 235 V281 M1085.5 235 V281 M1086.5 239 V279 M1087.5 240 V279 M1088.5 240 V276 M1089.5 237 V277 M1090.5 270 V283 M1091.5 237 V282 M1092.5 237 V282 M1093.5 260 V280 M1094.5 234 V275 M1095.5 245 V278 M1096.5 237 V277 M1097.5 233 V277 M1098.5 233 V272 M1099.5 244 V273 M1100.5 235 V282 M1101.5 256 V282 M1102.5 197 V281 M1103.5 197 V279 M1104.5 225 V279 M1105.5 241 V271 M1106.5 241 V275 M1107.5 219 V275 M1108.5 213 V274 M1109.5 213 V274 M1110.5 219 V251 M1111.5 219 V275 M1112.5 258 V282 M1113.5 249 V282 M1114.5 208 V272 M1115.5 208 V277 M1116.5 223 V277 M1117.5 223 V274 M1118.5 261 V276" stroke="#f4f400" stroke-width="1" fill="none"/></svg>
<svg class="a" style="left:768px;top:317px" width="362" height="140" viewBox="768 317 362 140" shape-rendering="crispEdges"><rect x="799.5" y="326.5" width="326" height="122" fill="none" stroke="#7a7a7a" stroke-width="1"/><line x1="806.5" y1="326" x2="806.5" y2="448" stroke="#7a7a7a"/><path d="M799 328.5 H802 M804 328.5 H807 M1122 328.5 H1125 M799 331.5 H802 M804 331.5 H807 M1122 331.5 H1125 M799 333.5 H802 M804 333.5 H807 M1122 333.5 H1125 M799 336.5 H802 M804 336.5 H807 M1122 336.5 H1125 M799 338.5 H802 M804 338.5 H807 M1122 338.5 H1125 M799 341.5 H802 M804 341.5 H807 M1122 341.5 H1125 M799 343.5 H802 M804 343.5 H807 M1122 343.5 H1125 M799 346.5 H802 M804 346.5 H807 M1122 346.5 H1125 M799 348.5 H802 M804 348.5 H807 M1122 348.5 H1125 M799 351.5 H802 M804 351.5 H807 M1122 351.5 H1125 M799 353.5 H802 M804 353.5 H807 M1122 353.5 H1125 M799 356.5 H802 M804 356.5 H807 M1122 356.5 H1125 M799 358.5 H802 M804 358.5 H807 M1122 358.5 H1125 M799 361.5 H802 M804 361.5 H807 M1122 361.5 H1125 M799 363.5 H802 M804 363.5 H807 M1122 363.5 H1125 M799 366.5 H802 M804 366.5 H807 M1122 366.5 H1125 M799 368.5 H802 M804 368.5 H807 M1122 368.5 H1125 M799 371.5 H802 M804 371.5 H807 M1122 371.5 H1125 M799 373.5 H802 M804 373.5 H807 M1122 373.5 H1125 M799 376.5 H802 M804 376.5 H807 M1122 376.5 H1125 M799 378.5 H802 M804 378.5 H807 M1122 378.5 H1125 M799 381.5 H802 M804 381.5 H807 M1122 381.5 H1125 M799 383.5 H802 M804 383.5 H807 M1122 383.5 H1125 M799 386.5 H802 M804 386.5 H807 M1122 386.5 H1125 M799 388.5 H802 M804 388.5 H807 M1122 388.5 H1125 M799 391.5 H802 M804 391.5 H807 M1122 391.5 H1125 M799 393.5 H802 M804 393.5 H807 M1122 393.5 H1125 M799 396.5 H802 M804 396.5 H807 M1122 396.5 H1125 M799 398.5 H802 M804 398.5 H807 M1122 398.5 H1125 M799 401.5 H802 M804 401.5 H807 M1122 401.5 H1125 M799 403.5 H802 M804 403.5 H807 M1122 403.5 H1125 M799 406.5 H802 M804 406.5 H807 M1122 406.5 H1125 M799 408.5 H802 M804 408.5 H807 M1122 408.5 H1125 M799 411.5 H802 M804 411.5 H807 M1122 411.5 H1125 M799 413.5 H802 M804 413.5 H807 M1122 413.5 H1125 M799 416.5 H802 M804 416.5 H807 M1122 416.5 H1125 M799 418.5 H802 M804 418.5 H807 M1122 418.5 H1125 M799 421.5 H802 M804 421.5 H807 M1122 421.5 H1125 M799 423.5 H802 M804 423.5 H807 M1122 423.5 H1125 M799 426.5 H802 M804 426.5 H807 M1122 426.5 H1125 M799 428.5 H802 M804 428.5 H807 M1122 428.5 H1125 M799 431.5 H802 M804 431.5 H807 M1122 431.5 H1125 M799 433.5 H802 M804 433.5 H807 M1122 433.5 H1125 M799 436.5 H802 M804 436.5 H807 M1122 436.5 H1125 M799 438.5 H802 M804 438.5 H807 M1122 438.5 H1125 M799 441.5 H802 M804 441.5 H807 M1122 441.5 H1125 M799 443.5 H802 M804 443.5 H807 M1122 443.5 H1125 M799 446.5 H802 M804 446.5 H807 M1122 446.5 H1125 M809.5 326 V328 M809.5 447 V448 M812.5 326 V328 M812.5 447 V448 M815.5 326 V328 M815.5 447 V448 M818.5 326 V328 M818.5 447 V448 M821.5 326 V328 M821.5 447 V448 M824.5 326 V328 M824.5 447 V448 M827.5 326 V328 M827.5 447 V448 M830.5 326 V328 M830.5 447 V448 M833.5 326 V328 M833.5 447 V448 M836.5 326 V328 M836.5 447 V448 M839.5 326 V328 M839.5 447 V448 M842.5 326 V328 M842.5 447 V448 M845.5 326 V328 M845.5 447 V448 M848.5 326 V328 M848.5 447 V448 M851.5 326 V328 M851.5 447 V448 M854.5 326 V328 M854.5 447 V448 M857.5 326 V328 M857.5 447 V448 M860.5 326 V328 M860.5 447 V448 M863.5 326 V328 M863.5 447 V448 M866.5 326 V328 M866.5 447 V448 M869.5 326 V328 M869.5 447 V448 M872.5 326 V328 M872.5 447 V448 M875.5 326 V328 M875.5 447 V448 M878.5 326 V328 M878.5 447 V448 M881.5 326 V328 M881.5 447 V448 M884.5 326 V328 M884.5 447 V448 M887.5 326 V328 M887.5 447 V448 M890.5 326 V328 M890.5 447 V448 M893.5 326 V328 M893.5 447 V448 M896.5 326 V328 M896.5 447 V448 M899.5 326 V328 M899.5 447 V448 M902.5 326 V328 M902.5 447 V448 M905.5 326 V328 M905.5 447 V448 M908.5 326 V328 M908.5 447 V448 M911.5 326 V328 M911.5 447 V448 M914.5 326 V328 M914.5 447 V448 M917.5 326 V328 M917.5 447 V448 M920.5 326 V328 M920.5 447 V448 M923.5 326 V328 M923.5 447 V448 M926.5 326 V328 M926.5 447 V448 M929.5 326 V328 M929.5 447 V448 M932.5 326 V328 M932.5 447 V448 M935.5 326 V328 M935.5 447 V448 M938.5 326 V328 M938.5 447 V448 M941.5 326 V328 M941.5 447 V448 M944.5 326 V328 M944.5 447 V448 M947.5 326 V328 M947.5 447 V448 M950.5 326 V328 M950.5 447 V448 M953.5 326 V328 M953.5 447 V448 M956.5 326 V328 M956.5 447 V448 M959.5 326 V328 M959.5 447 V448 M962.5 326 V328 M962.5 447 V448 M965.5 326 V328 M965.5 447 V448 M968.5 326 V328 M968.5 447 V448 M971.5 326 V328 M971.5 447 V448 M974.5 326 V328 M974.5 447 V448 M977.5 326 V328 M977.5 447 V448 M980.5 326 V328 M980.5 447 V448 M983.5 326 V328 M983.5 447 V448 M986.5 326 V328 M986.5 447 V448 M989.5 326 V328 M989.5 447 V448 M992.5 326 V328 M992.5 447 V448 M995.5 326 V328 M995.5 447 V448 M998.5 326 V328 M998.5 447 V448 M1001.5 326 V328 M1001.5 447 V448 M1004.5 326 V328 M1004.5 447 V448 M1007.5 326 V328 M1007.5 447 V448 M1010.5 326 V328 M1010.5 447 V448 M1013.5 326 V328 M1013.5 447 V448 M1016.5 326 V328 M1016.5 447 V448 M1019.5 326 V328 M1019.5 447 V448 M1022.5 326 V328 M1022.5 447 V448 M1025.5 326 V328 M1025.5 447 V448 M1028.5 326 V328 M1028.5 447 V448 M1031.5 326 V328 M1031.5 447 V448 M1034.5 326 V328 M1034.5 447 V448 M1037.5 326 V328 M1037.5 447 V448 M1040.5 326 V328 M1040.5 447 V448 M1043.5 326 V328 M1043.5 447 V448 M1046.5 326 V328 M1046.5 447 V448 M1049.5 326 V328 M1049.5 447 V448 M1052.5 326 V328 M1052.5 447 V448 M1055.5 326 V328 M1055.5 447 V448 M1058.5 326 V328 M1058.5 447 V448 M1061.5 326 V328 M1061.5 447 V448 M1064.5 326 V328 M1064.5 447 V448 M1067.5 326 V328 M1067.5 447 V448 M1070.5 326 V328 M1070.5 447 V448 M1073.5 326 V328 M1073.5 447 V448 M1076.5 326 V328 M1076.5 447 V448 M1079.5 326 V328 M1079.5 447 V448 M1082.5 326 V328 M1082.5 447 V448 M1085.5 326 V328 M1085.5 447 V448 M1088.5 326 V328 M1088.5 447 V448 M1091.5 326 V328 M1091.5 447 V448 M1094.5 326 V328 M1094.5 447 V448 M1097.5 326 V328 M1097.5 447 V448 M1100.5 326 V328 M1100.5 447 V448 M1103.5 326 V328 M1103.5 447 V448 M1106.5 326 V328 M1106.5 447 V448 M1109.5 326 V328 M1109.5 447 V448 M1112.5 326 V328 M1112.5 447 V448 M1115.5 326 V328 M1115.5 447 V448 M1118.5 326 V328 M1118.5 447 V448 M1121.5 326 V328 M1121.5 447 V448" stroke="#7a7a7a" stroke-width="1" fill="none"/><line x1="799" y1="340.5" x2="1125" y2="340.5" stroke="#7a7a7a"/><text x="796" y="343" fill="#827e88" font-size="6" text-anchor="end" font-family="Liberation Sans" shape-rendering="auto">0.018</text><line x1="799" y1="357.5" x2="1125" y2="357.5" stroke="#7a7a7a"/><text x="796" y="360" fill="#827e88" font-size="6" text-anchor="end" font-family="Liberation Sans" shape-rendering="auto">0.015</text><line x1="799" y1="375.5" x2="1125" y2="375.5" stroke="#7a7a7a"/><text x="796" y="378" fill="#827e88" font-size="6" text-anchor="end" font-family="Liberation Sans" shape-rendering="auto">0.012</text><line x1="799" y1="392.5" x2="1125" y2="392.5" stroke="#7a7a7a"/><text x="796" y="395" fill="#827e88" font-size="6" text-anchor="end" font-family="Liberation Sans" shape-rendering="auto">0.009</text><line x1="799" y1="410.5" x2="1125" y2="410.5" stroke="#7a7a7a"/><text x="796" y="413" fill="#827e88" font-size="6" text-anchor="end" font-family="Liberation Sans" shape-rendering="auto">0.006</text><line x1="799" y1="428.5" x2="1125" y2="428.5" stroke="#7a7a7a"/><text x="796" y="431" fill="#827e88" font-size="6" text-anchor="end" font-family="Liberation Sans" shape-rendering="auto">0.003</text><line x1="799" y1="445.5" x2="1125" y2="445.5" stroke="#7a7a7a"/><text x="796" y="448" fill="#827e88" font-size="6" text-anchor="end" font-family="Liberation Sans" shape-rendering="auto">0</text><line x1="860.5" y1="326" x2="860.5" y2="448" stroke="#7a7a7a"/><line x1="913.5" y1="326" x2="913.5" y2="448" stroke="#7a7a7a"/><line x1="965.5" y1="326" x2="965.5" y2="448" stroke="#7a7a7a"/><line x1="1018.5" y1="326" x2="1018.5" y2="448" stroke="#7a7a7a"/><line x1="1071.5" y1="326" x2="1071.5" y2="448" stroke="#7a7a7a"/><text x="809" y="453" fill="#827e88" font-size="6" text-anchor="middle" font-family="Liberation Sans" shape-rendering="auto">0</text><text x="862" y="453" fill="#827e88" font-size="6" text-anchor="middle" font-family="Liberation Sans" shape-rendering="auto">170</text><text x="914" y="453" fill="#827e88" font-size="6" text-anchor="middle" font-family="Liberation Sans" shape-rendering="auto">340</text><text x="967" y="453" fill="#827e88" font-size="6" text-anchor="middle" font-family="Liberation Sans" shape-rendering="auto">510</text><text x="1019" y="453" fill="#827e88" font-size="6" text-anchor="middle" font-family="Liberation Sans" shape-rendering="auto">680</text><text x="1072" y="453" fill="#827e88" font-size="6" text-anchor="middle" font-family="Liberation Sans" shape-rendering="auto">850</text><text x="1123" y="453" fill="#827e88" font-size="6" text-anchor="middle" font-family="Liberation Sans" shape-rendering="auto">1020</text><path d="M807.5 385 V442 M808.5 385 V442 M809.5 415 V438 M810.5 415 V445 M811.5 418 V445 M812.5 414 V444 M813.5 427 V443 M814.5 399 V442 M815.5 408 V442 M816.5 420 V444 M817.5 413 V438 M818.5 413 V443 M819.5 415 V444 M820.5 411 V444 M821.5 411 V443 M822.5 403 V443 M823.5 403 V434 M824.5 409 V425 M825.5 389 V427 M826.5 389 V439 M827.5 422 V443 M828.5 408 V443 M829.5 408 V440 M830.5 412 V440 M831.5 413 V443 M832.5 379 V443 M833.5 379 V442 M834.5 393 V442 M835.5 412 V439 M836.5 416 V444 M837.5 408 V444 M838.5 422 V445 M839.5 418 V445 M840.5 414 V442 M841.5 414 V439 M842.5 424 V439 M843.5 412 V439 M844.5 412 V444 M845.5 429 V445 M846.5 402 V443 M847.5 402 V443 M848.5 407 V443 M849.5 393 V444 M850.5 426 V444 M851.5 426 V442 M852.5 398 V443 M853.5 428 V443 M854.5 428 V445 M855.5 412 V445 M856.5 401 V441 M857.5 406 V441 M858.5 419 V439 M859.5 403 V439 M860.5 403 V441 M861.5 409 V441 M862.5 409 V438 M863.5 426 V438 M864.5 428 V443 M865.5 427 V443 M866.5 404 V433 M867.5 404 V436 M868.5 387 V436 M869.5 387 V434 M870.5 397 V439 M871.5 397 V436 M872.5 418 V441 M873.5 404 V445 M874.5 404 V442 M875.5 422 V442 M876.5 423 V445 M877.5 418 V438 M878.5 418 V443 M879.5 420 V444 M880.5 384 V444 M881.5 384 V427 M882.5 395 V441 M883.5 395 V440 M884.5 401 V439 M885.5 399 V444 M886.5 390 V444 M887.5 404 V444 M888.5 404 V443 M889.5 426 V444 M890.5 397 V445 M891.5 397 V445 M892.5 418 V444 M893.5 403 V444 M894.5 412 V442 M895.5 423 V443 M896.5 381 V430 M897.5 381 V444 M898.5 427 V444 M899.5 389 V433 M900.5 392 V440 M901.5 405 V444 M902.5 412 V443 M903.5 407 V443 M904.5 383 V433 M905.5 383 V434 M906.5 415 V444 M907.5 404 V441 M908.5 420 V431 M909.5 414 V444 M910.5 414 V432 M911.5 422 V436 M912.5 394 V441 M913.5 394 V442 M914.5 412 V440 M915.5 395 V440 M916.5 425 V441 M917.5 402 V441 M918.5 414 V444 M919.5 414 V438 M920.5 400 V438 M921.5 385 V439 M922.5 404 V439 M923.5 431 V444 M924.5 389 V436 M925.5 389 V436 M926.5 409 V436 M927.5 409 V436 M928.5 421 V435 M929.5 425 V442 M930.5 396 V442 M931.5 396 V431 M932.5 417 V441 M933.5 420 V441 M934.5 402 V434 M935.5 402 V443 M936.5 426 V443 M937.5 418 V443 M938.5 418 V440 M939.5 415 V440 M940.5 415 V432 M941.5 418 V432 M942.5 417 V437 M943.5 417 V443 M944.5 423 V443 M945.5 417 V436 M946.5 417 V442 M947.5 403 V444 M948.5 403 V444 M949.5 417 V444 M950.5 417 V440 M951.5 414 V440 M952.5 414 V437 M953.5 423 V441 M954.5 401 V437 M955.5 371 V441 M956.5 371 V444 M957.5 372 V443 M958.5 392 V418 M959.5 400 V441 M960.5 400 V440 M961.5 409 V444 M962.5 430 V444 M963.5 425 V444 M964.5 417 V438 M965.5 417 V429 M966.5 399 V435 M967.5 411 V443 M968.5 387 V440 M969.5 387 V443 M970.5 407 V442 M971.5 407 V431 M972.5 414 V430 M973.5 416 V438 M974.5 419 V440 M975.5 426 V440 M976.5 409 V435 M977.5 409 V435 M978.5 397 V433 M979.5 398 V434 M980.5 432 V445 M981.5 417 V445 M982.5 411 V432 M983.5 401 V432 M984.5 414 V437 M985.5 414 V438 M986.5 425 V438 M987.5 420 V444 M988.5 394 V444 M989.5 402 V443 M990.5 408 V443 M991.5 408 V441 M992.5 377 V441 M993.5 377 V439 M994.5 419 V441 M995.5 422 V441 M996.5 414 V440 M997.5 401 V444 M998.5 405 V444 M999.5 405 V443 M1000.5 390 V445 M1001.5 398 V445 M1002.5 398 V442 M1003.5 413 V441 M1004.5 412 V437 M1005.5 412 V434 M1006.5 414 V444 M1007.5 400 V444 M1008.5 400 V442 M1009.5 393 V441 M1010.5 393 V441 M1011.5 416 V443 M1012.5 393 V443 M1013.5 415 V437 M1014.5 375 V437 M1015.5 375 V437 M1016.5 393 V439 M1017.5 378 V437 M1018.5 392 V442 M1019.5 420 V442 M1020.5 414 V436 M1021.5 407 V433 M1022.5 407 V440 M1023.5 408 V443 M1024.5 393 V437 M1025.5 393 V432 M1026.5 406 V439 M1027.5 365 V443 M1028.5 426 V443 M1029.5 426 V438 M1030.5 427 V440 M1031.5 418 V441 M1032.5 408 V441 M1033.5 387 V439 M1034.5 412 V445 M1035.5 378 V445 M1036.5 378 V442 M1037.5 381 V429 M1038.5 417 V443 M1039.5 388 V444 M1040.5 413 V444 M1041.5 402 V436 M1042.5 402 V438 M1043.5 374 V438 M1044.5 374 V437 M1045.5 379 V440 M1046.5 400 V440 M1047.5 396 V440 M1048.5 414 V441 M1049.5 409 V441 M1050.5 396 V436 M1051.5 396 V443 M1052.5 413 V444 M1053.5 413 V433 M1054.5 404 V435 M1055.5 405 V444 M1056.5 417 V442 M1057.5 408 V443 M1058.5 406 V443 M1059.5 366 V434 M1060.5 413 V442 M1061.5 409 V442 M1062.5 401 V440 M1063.5 425 V439 M1064.5 411 V444 M1065.5 411 V437 M1066.5 413 V440 M1067.5 412 V437 M1068.5 373 V437 M1069.5 373 V438 M1070.5 404 V443 M1071.5 342 V423 M1072.5 391 V432 M1073.5 381 V432 M1074.5 381 V439 M1075.5 403 V444 M1076.5 405 V444 M1077.5 411 V443 M1078.5 387 V439 M1079.5 387 V421 M1080.5 415 V445 M1081.5 419 V445 M1082.5 419 V439 M1083.5 404 V439 M1084.5 406 V424 M1085.5 386 V442 M1086.5 386 V442 M1087.5 404 V441 M1088.5 416 V438 M1089.5 418 V438 M1090.5 421 V442 M1091.5 385 V444 M1092.5 433 V444 M1093.5 391 V438 M1094.5 394 V442 M1095.5 398 V440 M1096.5 391 V440 M1097.5 372 V444 M1098.5 407 V444 M1099.5 392 V442 M1100.5 392 V442 M1101.5 376 V442 M1102.5 373 V434 M1103.5 373 V444 M1104.5 395 V444 M1105.5 399 V443 M1106.5 407 V429 M1107.5 407 V441 M1108.5 426 V441 M1109.5 408 V440 M1110.5 402 V438 M1111.5 402 V438 M1112.5 422 V443 M1113.5 415 V443 M1114.5 410 V442 M1115.5 410 V436 M1116.5 412 V436 M1117.5 363 V439 M1118.5 363 V445" stroke="#f4f400" stroke-width="1" fill="none"/></svg>
<svg class="a" style="left:768px;top:480px" width="362" height="146" viewBox="768 480 362 146" shape-rendering="crispEdges"><rect x="804.5" y="490.5" width="321" height="127" fill="none" stroke="#7a7a7a" stroke-width="1"/><line x1="812.5" y1="490" x2="812.5" y2="617" stroke="#7a7a7a"/><path d="M804 492.5 H807 M810 492.5 H813 M1122 492.5 H1125 M804 495.5 H807 M810 495.5 H813 M1122 495.5 H1125 M804 497.5 H807 M810 497.5 H813 M1122 497.5 H1125 M804 500.5 H807 M810 500.5 H813 M1122 500.5 H1125 M804 502.5 H807 M810 502.5 H813 M1122 502.5 H1125 M804 505.5 H807 M810 505.5 H813 M1122 505.5 H1125 M804 507.5 H807 M810 507.5 H813 M1122 507.5 H1125 M804 510.5 H807 M810 510.5 H813 M1122 510.5 H1125 M804 512.5 H807 M810 512.5 H813 M1122 512.5 H1125 M804 515.5 H807 M810 515.5 H813 M1122 515.5 H1125 M804 517.5 H807 M810 517.5 H813 M1122 517.5 H1125 M804 520.5 H807 M810 520.5 H813 M1122 520.5 H1125 M804 522.5 H807 M810 522.5 H813 M1122 522.5 H1125 M804 525.5 H807 M810 525.5 H813 M1122 525.5 H1125 M804 527.5 H807 M810 527.5 H813 M1122 527.5 H1125 M804 530.5 H807 M810 530.5 H813 M1122 530.5 H1125 M804 532.5 H807 M810 532.5 H813 M1122 532.5 H1125 M804 535.5 H807 M810 535.5 H813 M1122 535.5 H1125 M804 537.5 H807 M810 537.5 H813 M1122 537.5 H1125 M804 540.5 H807 M810 540.5 H813 M1122 540.5 H1125 M804 542.5 H807 M810 542.5 H813 M1122 542.5 H1125 M804 545.5 H807 M810 545.5 H813 M1122 545.5 H1125 M804 547.5 H807 M810 547.5 H813 M1122 547.5 H1125 M804 550.5 H807 M810 550.5 H813 M1122 550.5 H1125 M804 552.5 H807 M810 552.5 H813 M1122 552.5 H1125 M804 555.5 H807 M810 555.5 H813 M1122 555.5 H1125 M804 557.5 H807 M810 557.5 H813 M1122 557.5 H1125 M804 560.5 H807 M810 560.5 H813 M1122 560.5 H1125 M804 562.5 H807 M810 562.5 H813 M1122 562.5 H1125 M804 565.5 H807 M810 565.5 H813 M1122 565.5 H1125 M804 567.5 H807 M810 567.5 H813 M1122 567.5 H1125 M804 570.5 H807 M810 570.5 H813 M1122 570.5 H1125 M804 572.5 H807 M810 572.5 H813 M1122 572.5 H1125 M804 575.5 H807 M810 575.5 H813 M1122 575.5 H1125 M804 577.5 H807 M810 577.5 H813 M1122 577.5 H1125 M804 580.5 H807 M810 580.5 H813 M1122 580.5 H1125 M804 582.5 H807 M810 582.5 H813 M1122 582.5 H1125 M804 585.5 H807 M810 585.5 H813 M1122 585.5 H1125 M804 587.5 H807 M810 587.5 H813 M1122 587.5 H1125 M804 590.5 H807 M810 590.5 H813 M1122 590.5 H1125 M804 592.5 H807 M810 592.5 H813 M1122 592.5 H1125 M804 595.5 H807 M810 595.5 H813 M1122 595.5 H1125 M804 597.5 H807 M810 597.5 H813 M1122 597.5 H1125 M804 600.5 H807 M810 600.5 H813 M1122 600.5 H1125 M804 602.5 H807 M810 602.5 H813 M1122 602.5 H1125 M804 605.5 H807 M810 605.5 H813 M1122 605.5 H1125 M804 607.5 H807 M810 607.5 H813 M1122 607.5 H1125 M804 610.5 H807 M810 610.5 H813 M1122 610.5 H1125 M804 612.5 H807 M810 612.5 H813 M1122 612.5 H1125 M804 615.5 H807 M810 615.5 H813 M1122 615.5 H1125 M815.5 490 V492 M815.5 616 V617 M818.5 490 V492 M818.5 616 V617 M821.5 490 V492 M821.5 616 V617 M824.5 490 V492 M824.5 616 V617 M827.5 490 V492 M827.5 616 V617 M830.5 490 V492 M830.5 616 V617 M833.5 490 V492 M833.5 616 V617 M836.5 490 V492 M836.5 616 V617 M839.5 490 V492 M839.5 616 V617 M842.5 490 V492 M842.5 616 V617 M845.5 490 V492 M845.5 616 V617 M848.5 490 V492 M848.5 616 V617 M851.5 490 V492 M851.5 616 V617 M854.5 490 V492 M854.5 616 V617 M857.5 490 V492 M857.5 616 V617 M860.5 490 V492 M860.5 616 V617 M863.5 490 V492 M863.5 616 V617 M866.5 490 V492 M866.5 616 V617 M869.5 490 V492 M869.5 616 V617 M872.5 490 V492 M872.5 616 V617 M875.5 490 V492 M875.5 616 V617 M878.5 490 V492 M878.5 616 V617 M881.5 490 V492 M881.5 616 V617 M884.5 490 V492 M884.5 616 V617 M887.5 490 V492 M887.5 616 V617 M890.5 490 V492 M890.5 616 V617 M893.5 490 V492 M893.5 616 V617 M896.5 490 V492 M896.5 616 V617 M899.5 490 V492 M899.5 616 V617 M902.5 490 V492 M902.5 616 V617 M905.5 490 V492 M905.5 616 V617 M908.5 490 V492 M908.5 616 V617 M911.5 490 V492 M911.5 616 V617 M914.5 490 V492 M914.5 616 V617 M917.5 490 V492 M917.5 616 V617 M920.5 490 V492 M920.5 616 V617 M923.5 490 V492 M923.5 616 V617 M926.5 490 V492 M926.5 616 V617 M929.5 490 V492 M929.5 616 V617 M932.5 490 V492 M932.5 616 V617 M935.5 490 V492 M935.5 616 V617 M938.5 490 V492 M938.5 616 V617 M941.5 490 V492 M941.5 616 V617 M944.5 490 V492 M944.5 616 V617 M947.5 490 V492 M947.5 616 V617 M950.5 490 V492 M950.5 616 V617 M953.5 490 V492 M953.5 616 V617 M956.5 490 V492 M956.5 616 V617 M959.5 490 V492 M959.5 616 V617 M962.5 490 V492 M962.5 616 V617 M965.5 490 V492 M965.5 616 V617 M968.5 490 V492 M968.5 616 V617 M971.5 490 V492 M971.5 616 V617 M974.5 490 V492 M974.5 616 V617 M977.5 490 V492 M977.5 616 V617 M980.5 490 V492 M980.5 616 V617 M983.5 490 V492 M983.5 616 V617 M986.5 490 V492 M986.5 616 V617 M989.5 490 V492 M989.5 616 V617 M992.5 490 V492 M992.5 616 V617 M995.5 490 V492 M995.5 616 V617 M998.5 490 V492 M998.5 616 V617 M1001.5 490 V492 M1001.5 616 V617 M1004.5 490 V492 M1004.5 616 V617 M1007.5 490 V492 M1007.5 616 V617 M1010.5 490 V492 M1010.5 616 V617 M1013.5 490 V492 M1013.5 616 V617 M1016.5 490 V492 M1016.5 616 V617 M1019.5 490 V492 M1019.5 616 V617 M1022.5 490 V492 M1022.5 616 V617 M1025.5 490 V492 M1025.5 616 V617 M1028.5 490 V492 M1028.5 616 V617 M1031.5 490 V492 M1031.5 616 V617 M1034.5 490 V492 M1034.5 616 V617 M1037.5 490 V492 M1037.5 616 V617 M1040.5 490 V492 M1040.5 616 V617 M1043.5 490 V492 M1043.5 616 V617 M1046.5 490 V492 M1046.5 616 V617 M1049.5 490 V492 M1049.5 616 V617 M1052.5 490 V492 M1052.5 616 V617 M1055.5 490 V492 M1055.5 616 V617 M1058.5 490 V492 M1058.5 616 V617 M1061.5 490 V492 M1061.5 616 V617 M1064.5 490 V492 M1064.5 616 V617 M1067.5 490 V492 M1067.5 616 V617 M1070.5 490 V492 M1070.5 616 V617 M1073.5 490 V492 M1073.5 616 V617 M1076.5 490 V492 M1076.5 616 V617 M1079.5 490 V492 M1079.5 616 V617 M1082.5 490 V492 M1082.5 616 V617 M1085.5 490 V492 M1085.5 616 V617 M1088.5 490 V492 M1088.5 616 V617 M1091.5 490 V492 M1091.5 616 V617 M1094.5 490 V492 M1094.5 616 V617 M1097.5 490 V492 M1097.5 616 V617 M1100.5 490 V492 M1100.5 616 V617 M1103.5 490 V492 M1103.5 616 V617 M1106.5 490 V492 M1106.5 616 V617 M1109.5 490 V492 M1109.5 616 V617 M1112.5 490 V492 M1112.5 616 V617 M1115.5 490 V492 M1115.5 616 V617 M1118.5 490 V492 M1118.5 616 V617 M1121.5 490 V492 M1121.5 616 V617" stroke="#7a7a7a" stroke-width="1" fill="none"/><line x1="804" y1="509.5" x2="1125" y2="509.5" stroke="#7a7a7a"/><text x="801" y="512" fill="#827e88" font-size="6" text-anchor="end" font-family="Liberation Sans" shape-rendering="auto">0.023</text><line x1="804" y1="530.5" x2="1125" y2="530.5" stroke="#7a7a7a"/><text x="801" y="533" fill="#827e88" font-size="6" text-anchor="end" font-family="Liberation Sans" shape-rendering="auto">0.0184</text><line x1="804" y1="551.5" x2="1125" y2="551.5" stroke="#7a7a7a"/><text x="801" y="554" fill="#827e88" font-size="6" text-anchor="end" font-family="Liberation Sans" shape-rendering="auto">0.0138</text><line x1="804" y1="571.5" x2="1125" y2="571.5" stroke="#7a7a7a"/><text x="801" y="574" fill="#827e88" font-size="6" text-anchor="end" font-family="Liberation Sans" shape-rendering="auto">0.0092</text><line x1="804" y1="592.5" x2="1125" y2="592.5" stroke="#7a7a7a"/><text x="801" y="595" fill="#827e88" font-size="6" text-anchor="end" font-family="Liberation Sans" shape-rendering="auto">0.0046</text><line x1="804" y1="613.5" x2="1125" y2="613.5" stroke="#7a7a7a"/><text x="801" y="616" fill="#827e88" font-size="6" text-anchor="end" font-family="Liberation Sans" shape-rendering="auto">0</text><line x1="864.5" y1="490" x2="864.5" y2="617" stroke="#7a7a7a"/><line x1="915.5" y1="490" x2="915.5" y2="617" stroke="#7a7a7a"/><line x1="967.5" y1="490" x2="967.5" y2="617" stroke="#7a7a7a"/><line x1="1019.5" y1="490" x2="1019.5" y2="617" stroke="#7a7a7a"/><line x1="1071.5" y1="490" x2="1071.5" y2="617" stroke="#7a7a7a"/><text x="813" y="622" fill="#827e88" font-size="6" text-anchor="middle" font-family="Liberation Sans" shape-rendering="auto">0</text><text x="865" y="622" fill="#827e88" font-size="6" text-anchor="middle" font-family="Liberation Sans" shape-rendering="auto">170</text><text x="917" y="622" fill="#827e88" font-size="6" text-anchor="middle" font-family="Liberation Sans" shape-rendering="auto">340</text><text x="969" y="622" fill="#827e88" font-size="6" text-anchor="middle" font-family="Liberation Sans" shape-rendering="auto">510</text><text x="1021" y="622" fill="#827e88" font-size="6" text-anchor="middle" font-family="Liberation Sans" shape-rendering="auto">680</text><text x="1073" y="622" fill="#827e88" font-size="6" text-anchor="middle" font-family="Liberation Sans" shape-rendering="auto">850</text><text x="1123" y="622" fill="#827e88" font-size="6" text-anchor="middle" font-family="Liberation Sans" shape-rendering="auto">1020</text><path d="M812.5 600 V610 M813.5 600 V606 M814.5 583 V612 M815.5 592 V612 M816.5 589 V613 M817.5 589 V612 M818.5 578 V611 M819.5 563 V613 M820.5 563 V609 M821.5 573 V604 M822.5 585 V609 M823.5 584 V600 M824.5 586 V611 M825.5 569 V611 M826.5 597 V611 M827.5 575 V603 M828.5 575 V605 M829.5 578 V610 M830.5 578 V610 M831.5 583 V608 M832.5 583 V607 M833.5 586 V607 M834.5 587 V607 M835.5 571 V607 M836.5 578 V607 M837.5 578 V612 M838.5 584 V610 M839.5 579 V610 M840.5 560 V597 M841.5 567 V610 M842.5 572 V610 M843.5 572 V607 M844.5 579 V607 M845.5 597 V610 M846.5 578 V606 M847.5 535 V613 M848.5 548 V613 M849.5 548 V611 M850.5 583 V608 M851.5 589 V608 M852.5 591 V606 M853.5 584 V613 M854.5 586 V610 M855.5 597 V610 M856.5 586 V612 M857.5 595 V612 M858.5 561 V600 M859.5 561 V604 M860.5 570 V609 M861.5 580 V609 M862.5 580 V612 M863.5 588 V612 M864.5 565 V605 M865.5 554 V610 M866.5 554 V611 M867.5 578 V611 M868.5 570 V603 M869.5 557 V583 M870.5 557 V610 M871.5 587 V610 M872.5 587 V608 M873.5 583 V609 M874.5 577 V609 M875.5 576 V611 M876.5 571 V611 M877.5 601 V612 M878.5 583 V612 M879.5 581 V611 M880.5 557 V608 M881.5 543 V588 M882.5 575 V606 M883.5 552 V611 M884.5 557 V602 M885.5 583 V609 M886.5 547 V609 M887.5 547 V611 M888.5 570 V611 M889.5 566 V612 M890.5 560 V612 M891.5 560 V608 M892.5 579 V610 M893.5 586 V610 M894.5 566 V608 M895.5 575 V610 M896.5 545 V610 M897.5 574 V604 M898.5 537 V607 M899.5 589 V611 M900.5 589 V611 M901.5 548 V611 M902.5 593 V611 M903.5 556 V603 M904.5 574 V612 M905.5 576 V611 M906.5 573 V611 M907.5 565 V613 M908.5 581 V611 M909.5 583 V611 M910.5 583 V610 M911.5 583 V610 M912.5 585 V612 M913.5 572 V612 M914.5 572 V608 M915.5 578 V611 M916.5 565 V611 M917.5 560 V613 M918.5 560 V613 M919.5 590 V613 M920.5 584 V609 M921.5 585 V608 M922.5 585 V601 M923.5 585 V613 M924.5 583 V607 M925.5 583 V598 M926.5 547 V611 M927.5 598 V613 M928.5 549 V601 M929.5 549 V612 M930.5 572 V605 M931.5 571 V613 M932.5 571 V613 M933.5 579 V609 M934.5 558 V609 M935.5 558 V609 M936.5 564 V604 M937.5 579 V604 M938.5 545 V613 M939.5 569 V590 M940.5 583 V603 M941.5 576 V602 M942.5 571 V612 M943.5 590 V612 M944.5 581 V603 M945.5 550 V599 M946.5 560 V612 M947.5 573 V612 M948.5 573 V611 M949.5 570 V611 M950.5 590 V610 M951.5 585 V610 M952.5 574 V597 M953.5 574 V601 M954.5 583 V599 M955.5 583 V600 M956.5 574 V610 M957.5 588 V612 M958.5 550 V611 M959.5 550 V611 M960.5 573 V599 M961.5 573 V607 M962.5 559 V607 M963.5 592 V602 M964.5 567 V602 M965.5 567 V602 M966.5 586 V604 M967.5 586 V613 M968.5 553 V613 M969.5 553 V607 M970.5 579 V607 M971.5 564 V599 M972.5 595 V609 M973.5 550 V609 M974.5 550 V596 M975.5 563 V605 M976.5 563 V605 M977.5 574 V611 M978.5 586 V609 M979.5 543 V601 M980.5 576 V612 M981.5 535 V612 M982.5 535 V608 M983.5 560 V599 M984.5 574 V604 M985.5 583 V604 M986.5 535 V605 M987.5 535 V610 M988.5 578 V609 M989.5 578 V606 M990.5 586 V607 M991.5 581 V608 M992.5 560 V611 M993.5 598 V611 M994.5 598 V607 M995.5 583 V612 M996.5 583 V612 M997.5 588 V610 M998.5 591 V610 M999.5 580 V604 M1000.5 570 V605 M1001.5 570 V605 M1002.5 572 V605 M1003.5 568 V605 M1004.5 568 V600 M1005.5 587 V605 M1006.5 573 V601 M1007.5 560 V611 M1008.5 582 V607 M1009.5 569 V613 M1010.5 569 V603 M1011.5 566 V609 M1012.5 566 V587 M1013.5 573 V595 M1014.5 587 V613 M1015.5 536 V613 M1016.5 536 V608 M1017.5 552 V611 M1018.5 554 V611 M1019.5 584 V604 M1020.5 587 V611 M1021.5 592 V611 M1022.5 592 V604 M1023.5 585 V604 M1024.5 578 V608 M1025.5 578 V610 M1026.5 589 V606 M1027.5 571 V608 M1028.5 571 V613 M1029.5 543 V613 M1030.5 560 V597 M1031.5 560 V602 M1032.5 573 V610 M1033.5 573 V597 M1034.5 571 V607 M1035.5 571 V612 M1036.5 542 V612 M1037.5 542 V593 M1038.5 535 V609 M1039.5 552 V609 M1040.5 592 V610 M1041.5 595 V608 M1042.5 580 V608 M1043.5 555 V603 M1044.5 573 V603 M1045.5 553 V601 M1046.5 553 V605 M1047.5 566 V605 M1048.5 566 V604 M1049.5 551 V604 M1050.5 551 V612 M1051.5 598 V610 M1052.5 578 V602 M1053.5 578 V601 M1054.5 585 V604 M1055.5 581 V607 M1056.5 572 V593 M1057.5 572 V606 M1058.5 553 V606 M1059.5 553 V613 M1060.5 551 V613 M1061.5 563 V609 M1062.5 563 V609 M1063.5 570 V603 M1064.5 570 V608 M1065.5 584 V613 M1066.5 556 V611 M1067.5 596 V611 M1068.5 585 V609 M1069.5 590 V612 M1070.5 550 V612 M1071.5 567 V607 M1072.5 567 V607 M1073.5 563 V594 M1074.5 563 V601 M1075.5 573 V609 M1076.5 564 V604 M1077.5 564 V611 M1078.5 580 V611 M1079.5 580 V607 M1080.5 557 V604 M1081.5 557 V610 M1082.5 592 V610 M1083.5 560 V607 M1084.5 568 V612 M1085.5 586 V612 M1086.5 562 V611 M1087.5 562 V602 M1088.5 564 V610 M1089.5 577 V610 M1090.5 564 V601 M1091.5 563 V588 M1092.5 563 V611 M1093.5 564 V609 M1094.5 562 V604 M1095.5 562 V609 M1096.5 565 V599 M1097.5 565 V606 M1098.5 579 V612 M1099.5 562 V612 M1100.5 562 V611 M1101.5 576 V612 M1102.5 567 V596 M1103.5 545 V612 M1104.5 545 V604 M1105.5 552 V596 M1106.5 559 V588 M1107.5 558 V612 M1108.5 544 V600 M1109.5 544 V611 M1110.5 575 V613 M1111.5 583 V613 M1112.5 568 V599 M1113.5 571 V611 M1114.5 535 V611 M1115.5 578 V603 M1116.5 558 V609 M1117.5 558 V596 M1118.5 586 V601" stroke="#f4f400" stroke-width="1" fill="none"/></svg>
<div class="t" style="left:1280px;top:186px;font-size:14px;letter-spacing:-0.44px;color:#f0e000;">Site 1</div>
<div class="t" style="left:1150px;top:209px;font-size:14px;letter-spacing:-0.44px;color:#fff;">EVM (rms)</div>
<div class="t" style="left:1280px;top:209px;font-size:14px;letter-spacing:-0.44px;color:#fff;">0.64%</div>
<div class="t" style="left:1150px;top:232px;font-size:14px;letter-spacing:-0.44px;color:#fff;">Offset EVM (rms)</div>
<div class="t" style="left:1280px;top:232px;font-size:14px;letter-spacing:-0.44px;color:#fff;">0.65%</div>
<div class="t" style="left:1150px;top:255px;font-size:14px;letter-spacing:-0.44px;color:#fff;">Frequency Error</div>
<div class="t" style="left:1280px;top:255px;font-size:14px;letter-spacing:-0.44px;color:#fff;">0.0Hz</div>
<div class="t" style="left:1150px;top:278px;font-size:14px;letter-spacing:-0.44px;color:#fff;">IQ Gain imbalance</div>
<div class="t" style="left:1280px;top:278px;font-size:14px;letter-spacing:-0.44px;color:#fff;">0.0dB</div>
<div class="t" style="left:1150px;top:301px;font-size:14px;letter-spacing:-0.44px;color:#fff;">IQ Origin offset</div>
<div class="t" style="left:1280px;top:301px;font-size:14px;letter-spacing:-0.44px;color:#fff;">0.0dB</div>
<div class="t" style="left:1150px;top:324px;font-size:14px;letter-spacing:-0.44px;color:#fff;">Mag error (rms)</div>
<div class="t" style="left:1280px;top:324px;font-size:14px;letter-spacing:-0.44px;color:#fff;">0.0dB</div>
<div class="t" style="left:1150px;top:347px;font-size:14px;letter-spacing:-0.44px;color:#fff;">Phase error</div>
<div class="t" style="left:1280px;top:347px;font-size:14px;letter-spacing:-0.44px;color:#fff;">0.0deg</div>
<div style="position:absolute;left:214px;top:629px;width:1315px;height:28px;background:#e6e6e6;border-top:1px solid #c8c8c8;"></div>
<svg class="a" style="left:216px;top:629px" width="40" height="28"><path d="M0 0 L30 27 H40 V0 Z" fill="#fff"/><path d="M0 0 L30 27" stroke="#aaa" stroke-width="1"/></svg>
<div style="position:absolute;left:246px;top:629px;width:170px;height:28px;background:#fff;border-bottom:1px solid #c0c0c0;border-right:1px solid #c0c0c0;border-radius:0 0 4px 0;"></div>
<div class="t" style="left:253px;top:634px;font-size:14px;letter-spacing:-0.35px;font-weight:bold;">Zigbee EVM - mathlock</div>
<div style="position:absolute;left:402px;top:636px;width:11px;height:11px;border:1px solid #8a8a8a;border-radius:2px;background:#f2f2f2;"><svg class="a" style="left:0px;top:0px" width="9" height="9"><path d="M1.8 1.8 L7.2 7.2 M7.2 1.8 L1.8 7.2" stroke="#7a7a7a" stroke-width="2"/></svg></div>
<div style="position:absolute;left:1443px;top:633px;width:20px;height:24px;background:#fff;"></div>
<svg class="a" style="left:1465px;top:634px" width="60" height="14"><path d="M7.5 2.5 L2.5 7 L7.5 11.5 Z" fill="none" stroke="#555"/><path d="M26.5 2.5 L31.5 7 L26.5 11.5 Z" fill="none" stroke="#555"/></svg>
<div style="position:absolute;left:1510px;top:634px;width:11px;height:11px;border:1px solid #8a8a8a;border-radius:2px;background:#f2f2f2;"><svg class="a" style="left:0px;top:0px" width="9" height="9"><path d="M1.8 1.8 L7.2 7.2 M7.2 1.8 L1.8 7.2" stroke="#7a7a7a" stroke-width="2"/></svg></div>
<div style="position:absolute;left:214px;top:660px;width:1315px;height:24px;background:#dcdadc;"></div>
<div style="position:absolute;left:216px;top:662px;width:112px;height:22px;background:linear-gradient(#fafafa,#e8e8e8);border:1px solid #8c8c8c;border-radius:2px;"></div>
<svg class="a" style="left:223px;top:667px" width="12" height="12"><path d="M4 0 H8 V4 H12 V8 H8 V12 H4 V8 H0 V4 H4 Z" fill="#16c416"/></svg>
<div class="t" style="left:237px;top:665px;font-size:13px;letter-spacing:-0.5px;">Add Workspace</div>
<div class="t" style="left:332px;top:664px;font-size:14px;letter-spacing:-0.44px;">This is the plot status area.</div>
<div class="t" style="left:1344px;top:664px;font-size:14px;letter-spacing:-0.44px;">X:625.889</div>
<div class="t" style="left:1420px;top:664px;font-size:14px;letter-spacing:-0.44px;">Y:-0.000621</div>
<div style="position:absolute;left:1503px;top:662px;width:24px;height:22px;background:#e6e6e6;border:1px solid #777;"><svg class="a" style="left:3px;top:3px" width="16" height="14"><rect x="1" y="1" width="14" height="12" fill="#3aa0e6" stroke="#000"/><path d="M1 7 H15 M5 1 V13 M11 1 V13" stroke="#000"/></svg></div>
<div style="position:absolute;left:5px;top:686px;width:1526px;height:5px;background:#e9e9e9;"></div>
<svg class="a" style="left:757px;top:686px" width="28" height="6"><path d="M1 5 L5 1 M6 5 L10 1 M11 5 L15 1 M16 5 L20 1 M21 5 L25 1" stroke="#777"/></svg>
<div style="position:absolute;left:5px;top:691px;width:1526px;height:152px;border:2px solid #a9a9a9;background:#e6e6e6;"></div>
<div style="position:absolute;left:7px;top:693px;width:1522px;height:27px;background:linear-gradient(#d8d8d8,#ececec 60%,#f6f4f6);border-bottom:1px solid #a9a9a9;"></div>
<div style="position:absolute;left:13px;top:697px;width:87px;height:23px;background:linear-gradient(#eeeeee,#dedede);border:1px solid #c4c4c4;border-bottom:none;border-radius:4px 4px 0 0;"></div>
<div class="t" style="left:20px;top:700px;font-size:14px;letter-spacing:-0.44px;">Console</div>
<div style="position:absolute;left:84px;top:703px;width:11px;height:11px;border:1px solid #8a8a8a;border-radius:2px;background:#f2f2f2;"><svg class="a" style="left:0px;top:0px" width="9" height="9"><path d="M1.8 1.8 L7.2 7.2 M7.2 1.8 L1.8 7.2" stroke="#7a7a7a" stroke-width="2"/></svg></div>
<div style="position:absolute;left:100px;top:697px;width:160px;height:24px;background:linear-gradient(#ffffff,#f4f4f4);border:1px solid #c4c4c4;border-bottom:none;border-radius:4px 4px 0 0;"></div>
<div class="t" style="left:107px;top:700px;font-size:14px;letter-spacing:-0.35px;font-weight:bold;">Compile Completed</div>
<div style="position:absolute;left:244px;top:703px;width:11px;height:11px;border:1px solid #8a8a8a;border-radius:2px;background:#f2f2f2;"><svg class="a" style="left:0px;top:0px" width="9" height="9"><path d="M1.8 1.8 L7.2 7.2 M7.2 1.8 L1.8 7.2" stroke="#7a7a7a" stroke-width="2"/></svg></div>
<svg class="a" style="left:1515px;top:705px" width="10" height="8"><rect x="1" y="0" width="8" height="1.5" fill="#000"/><path d="M0 3 H10 L5 8 Z" fill="#000"/></svg>
<div style="position:absolute;left:7px;top:720px;width:1507px;height:106px;background:#fff;border-top:1px solid #c8c8c8;"></div>
<div class="t" style="left:9px;top:724px;font-size:14px;letter-spacing:-0.44px;">Loading /u/rmancuso/Demos/Unison/ModulationLibrary/ModDemodLib/EXAMPLES/i686_linux_2.6.9/libModulationExampleLib.un.so</div>
<div class="t" style="left:13px;top:787px;font-size:14px;letter-spacing:-0.44px;">Compile Completed</div>
<div style="position:absolute;left:1514px;top:721px;width:15px;height:105px;background:#c4c4c4;"></div>
<div style="position:absolute;left:1514px;top:722px;width:15px;height:16px;background:#e6e6e6;border:1px solid #505050;"><svg class="a" style="left:3px;top:4px" width="8" height="6"><path d="M0.5 5.5 L4 2 L7.5 5.5 Z" fill="#222" stroke="#222" stroke-width="1"/></svg></div>
<div style="position:absolute;left:1514px;top:782px;width:15px;height:28px;background:#e6e6e6;border:1px solid #505050;border-bottom:none;"><svg class="a" style="left:1px;top:6px" width="12" height="16"><path d="M2 8 L9 1 M2 12 L9 5 M2 16 L9 9" stroke="#999"/></svg></div>
<div style="position:absolute;left:1514px;top:810px;width:15px;height:15px;background:#e6e6e6;border:1px solid #505050;"><svg class="a" style="left:3px;top:4px" width="8" height="6"><path d="M0.5 1.5 L4 5 L7.5 1.5 Z" fill="#222" stroke="#222" stroke-width="1"/></svg></div>
<div style="position:absolute;left:7px;top:826px;width:1507px;height:15px;background:#c4c4c4;"></div>
<div style="position:absolute;left:7px;top:826px;width:15px;height:15px;background:#e6e6e6;border:1px solid #505050;"><svg class="a" style="left:3px;top:3px" width="6" height="8"><path d="M4.5 0.5 L1 4 L4.5 7.5 Z" fill="#222" stroke="#222" stroke-width="1"/></svg></div>
<div style="position:absolute;left:22px;top:826px;width:443px;height:15px;background:#e6e6e6;border:1px solid #505050;border-left:none;"><svg class="a" style="left:210px;top:2px" width="18" height="10"><path d="M2 9 L7 2 M6 9 L11 2 M10 9 L15 2" stroke="#999"/></svg></div>
<div style="position:absolute;left:1499px;top:826px;width:15px;height:15px;background:#e6e6e6;border:1px solid #505050;"><svg class="a" style="left:4px;top:3px" width="6" height="8"><path d="M1.5 0.5 L5 4 L1.5 7.5 Z" fill="#222" stroke="#222" stroke-width="1"/></svg></div>
<div style="position:absolute;left:1px;top:843px;width:1534px;height:29px;background:#e6e6e6;"></div>
<div style="position:absolute;left:7px;top:845px;width:943px;height:23px;border:1px solid #a0a0a0;border-right-color:#fff;border-bottom-color:#fff;background:#e6e6e6;"></div>
<div style="position:absolute;left:951px;top:845px;width:160px;height:23px;border:1px solid #a0a0a0;border-right-color:#fff;border-bottom-color:#fff;background:#e6e6e6;"><div class="t" style="left:3px;top:2px">Ready</div></div>
<div style="position:absolute;left:1112px;top:845px;width:128px;height:23px;border:1px solid #a0a0a0;border-right-color:#fff;border-bottom-color:#fff;background:#e6e6e6;"><div class="t" style="left:3px;top:2px">Debugger OFF</div></div>
<div style="position:absolute;left:1242px;top:845px;width:148px;height:23px;border:1px solid #a0a0a0;border-right-color:#fff;border-bottom-color:#fff;background:#e6e6e6;"><div class="t" style="left:3px;top:2px">* Ln 334 Col 42 [INS]</div></div>
<div style="position:absolute;left:1394px;top:848px;width:94px;height:18px;background:#c8c8c8;border:1px solid #aaa;"></div>
<div style="position:absolute;left:1493px;top:845px;width:40px;height:23px;border:1px solid #a0a0a0;border-right-color:#fff;border-bottom-color:#fff;background:#e6e6e6;"></div>
<svg class="a" style="left:1514px;top:852px" width="18" height="18"><path d="M17 4 L4 17 M17 9 L9 17 M17 14 L14 17" stroke="#888"/></svg>
</body></html>
